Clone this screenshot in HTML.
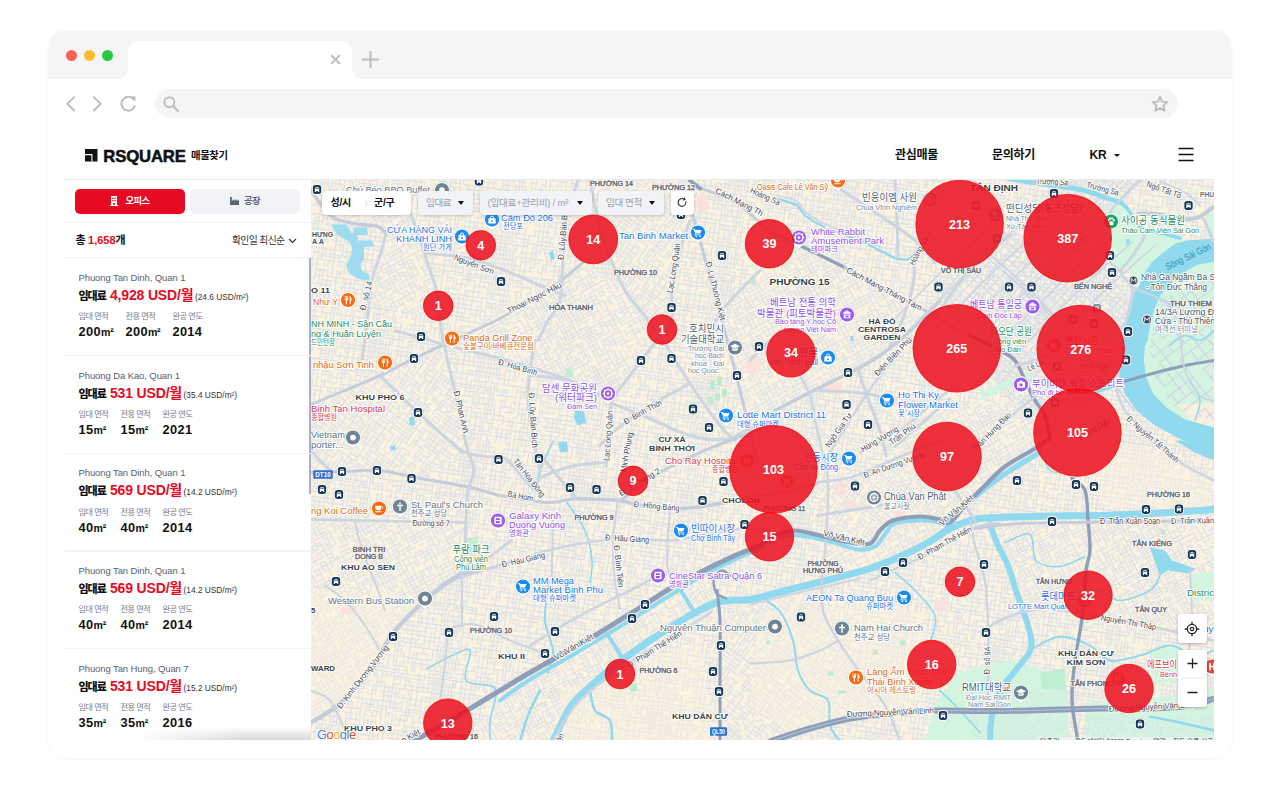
<!DOCTYPE html>
<html lang="ko">
<head>
<meta charset="utf-8">
<title>RSQUARE 매물찾기</title>
<style>
*{box-sizing:border-box;margin:0;padding:0}
html,body{width:1280px;height:791px;background:#fff;overflow:hidden}
body{font-family:"Liberation Sans","Noto Sans CJK KR",sans-serif;color:#111;position:relative}
.abs{position:absolute}
/* browser frame */
#frame{position:absolute;left:48px;top:31px;width:1184px;height:728px;border-radius:17px;background:#fff;box-shadow:0 0 0 1px rgba(0,0,0,.012),0 1px 6px rgba(0,0,0,.022);overflow:hidden}
#tabbar{position:absolute;left:0;top:0;width:1184px;height:48px;background:#f5f5f5}
#tab{position:absolute;left:80px;top:9.5px;width:224px;height:39.5px;background:#fff;border-radius:9px 9px 0 0}
#tab:before,#tab:after{content:"";position:absolute;bottom:1px;width:9px;height:9px;background:radial-gradient(circle at 0 0,rgba(255,255,255,0) 8.6px,#fff 9.2px)}
#tab:before{left:-9px}
#tab:after{right:-9px;transform:scaleX(-1)}
.dot{position:absolute;top:18.5px;width:11.4px;height:11.4px;border-radius:50%}
#search{position:absolute;left:107px;top:58px;width:1023px;height:29px;border-radius:15px;background:#f5f5f5}
/* site header */
#site{position:absolute;left:65px;top:130px;width:1149px;height:610px;background:#fff;overflow:hidden}
#hdr{position:absolute;left:0;top:0;width:1149px;height:49.5px;border-bottom:1px solid #e7e9ee}
#brand{position:absolute;left:38.300px;top:18.600px;font-weight:700;font-size:16.700px;letter-spacing:-.15px;line-height:15px;color:#111;-webkit-text-stroke:.55px #111}
#sub{position:absolute;left:126px;top:19.5px;font-weight:700;font-size:10.4px;letter-spacing:-.4px;line-height:12px;color:#111;white-space:nowrap}
.nav{position:absolute;top:17.5px;font-weight:700;font-size:12px;letter-spacing:-.25px;line-height:15px;color:#111;white-space:nowrap}
/* sidebar */
#side{position:absolute;left:0;top:50px;width:246px;height:560px;background:#fff}
.btn{position:absolute;top:9.2px;height:24.6px;width:109.4px;border-radius:5px;font-size:9.4px;font-weight:700;letter-spacing:-.55px;line-height:24.6px;text-align:center;white-space:nowrap}
.hr{position:absolute;left:0;width:246px;height:1.4px;background:#f2f3f5}
.item{position:absolute;left:13.5px;width:232px;height:98px}
.item .addr{position:absolute;left:0;top:0;font-size:9.5px;color:#5a6070;line-height:12px;white-space:nowrap;letter-spacing:-.1px}
.item .price{position:absolute;left:0;top:13px;white-space:nowrap;line-height:20px;font-weight:700}
.item .price b{font-size:11px;letter-spacing:-1px;color:#111}
.item .price em{font-style:normal;font-size:14px;color:#e60a23;letter-spacing:-.15px;margin-left:4px}
.item .price i{font-style:normal;font-weight:400;font-size:8.3px;color:#333;margin-left:1.5px;letter-spacing:0}
.item .cols{position:absolute;left:0;top:40.2px;display:flex;gap:12px}
.item .cols div{white-space:nowrap}
.item .cols span{display:block;font-size:8.2px;color:#777d8a;line-height:10px;letter-spacing:-.5px;min-width:30px}
.item .cols strong{display:block;font-size:12.8px;font-weight:700;line-height:16px;margin-top:2px;color:#111;letter-spacing:.35px}
.item .cols strong small{font-size:10.6px;letter-spacing:-.2px}
/* map */
#map{position:absolute;left:246px;top:49.5px;width:903px;height:560.5px;background:#f6eedd;overflow:hidden}
#map svg{position:absolute;left:0;top:0}
.fbox{position:absolute;top:11.5px;height:23.5px;border-radius:4px;font-size:9.6px;line-height:23.5px;white-space:nowrap;box-shadow:0 1px 3px rgba(0,0,0,.18)}
.fgray{background:#f1f3f7;color:#9aa0ac;letter-spacing:-.4px}
.caret{position:absolute;width:0;height:0;border-left:3.6px solid transparent;border-right:3.6px solid transparent;border-top:4.2px solid #111;top:10px}
.ctl{position:absolute;left:866.5px;width:29px;background:#fff;border-radius:3px;box-shadow:0 1px 3px rgba(0,0,0,.25)}
</style>
</head>
<body>
<div id="frame">
  <div id="tabbar">
    <div class="dot" style="left:18px;background:#fe5f57"></div>
    <div class="dot" style="left:36px;background:#febc2e"></div>
    <div class="dot" style="left:54px;background:#28c840"></div>
    <div id="tab"></div>
    <svg class="abs" style="left:282px;top:23px" width="11" height="11" viewBox="0 0 11 11"><path d="M1.600 1.600 9.400 9.400M9.400 1.600 1.600 9.400" stroke="#bdbdbd" stroke-width="2" stroke-linecap="round" fill="none"/></svg>
    <svg class="abs" style="left:314.400px;top:20px" width="17" height="17" viewBox="0 0 17 17"><path d="M8.500 1v15.200M.8 8.500h15.400" stroke="#bdbdbd" stroke-width="2" stroke-linecap="round" fill="none"/></svg>
  </div>
  <!-- nav icons -->
  <svg class="abs" style="left:14px;top:60px" width="100" height="26" viewBox="0 0 100 26">
    <path d="M12.6 5.6 5.4 12.8 12.6 20" fill="none" stroke="#bdbdbd" stroke-width="2"/>
    <path d="M31.4 5.6 38.6 12.8 31.4 20" fill="none" stroke="#bdbdbd" stroke-width="2"/>
    <path d="M72.3 9.2A6.9 6.9 0 1 0 73 14.6" fill="none" stroke="#bdbdbd" stroke-width="2"/>
    <path d="M68.2 5.2 73.6 5.4 73.4 10.8z" fill="#bdbdbd"/>
  </svg>
  <div id="search">
    <svg class="abs" style="left:7px;top:6px" width="18" height="18" viewBox="0 0 18 18"><circle cx="7.4" cy="7.2" r="5" fill="none" stroke="#bdbdbd" stroke-width="1.9"/><path d="M11 11 16 16" stroke="#bdbdbd" stroke-width="2.1" stroke-linecap="round"/></svg>
    <svg class="abs" style="left:996px;top:6px" width="18" height="18" viewBox="0 0 18 18"><path d="M9 1.8 11.1 6.6 16.3 7.1 12.4 10.5 13.6 15.7 9 13 4.4 15.7 5.6 10.5 1.7 7.1 6.9 6.6z" fill="none" stroke="#bdbdbd" stroke-width="1.900" stroke-linejoin="round"/></svg>
  </div>
</div>

<div id="site">
  <div id="hdr">
    <svg class="abs" style="left:20px;top:19px" width="12.500" height="12.500" viewBox="0 0 12.500 12.500"><path d="M0 0h12.500v12.500H0z" fill="#111"/><path d="M0 5.600h6.900v6.900" stroke="#fff" stroke-width="1.100" fill="none"/></svg>
    <div id="brand">RSQUARE</div>
    <div id="sub">매물찾기</div>
    <div class="nav" style="left:830px">관심매물</div>
    <div class="nav" style="left:927px">문의하기</div>
    <div class="nav" style="left:1024.5px;letter-spacing:-.2px">KR</div>
    <div class="abs" style="left:1048.5px;top:23.5px;width:0;height:0;border-left:3.2px solid transparent;border-right:3.2px solid transparent;border-top:3.8px solid #111"></div>
    <svg class="abs" style="left:1113px;top:17px" width="16" height="15" viewBox="0 0 16 15"><path d="M.5 1.5h15M.5 7.5h15M.5 13.5h15" stroke="#111" stroke-width="1.5"/></svg>
  </div>

  <div id="side">
    <div class="btn" style="left:10.300px;background:#e60a23;color:#fff">
      <svg style="vertical-align:-2px;margin-right:7px" width="8" height="10" viewBox="0 0 8 10"><path d="M1 0h6v9h1v1H0V9h1z" fill="#fff"/><path d="M2.2 1.6h1.3v1.3H2.2zM4.5 1.6h1.3v1.3H4.5zM2.2 4h1.3v1.3H2.2zM4.5 4h1.3v1.3H4.5zM3.2 7h1.6v2H3.2z" fill="#e60a23"/></svg>오피스</div>
    <div class="btn" style="left:125.400px;background:#f1f3f6;color:#5b6579">
      <svg style="vertical-align:-1px;margin-right:5px" width="9" height="8" viewBox="0 0 9 8"><path d="M0 0h1.8v4L4.4 2v2L7 2v2l2-1.6V8H0z" fill="#5b6579"/></svg>공장</div>
    <div class="hr" style="top:42px"></div>
    <div class="abs" style="left:10.5px;top:53px;font-size:11px;font-weight:700;line-height:14px;letter-spacing:-.3px;white-space:nowrap">총 <span style="color:#e60a23;letter-spacing:0">1,658</span>개</div>
    <div class="abs" style="right:26.5px;top:53.5px;font-size:9.8px;line-height:14px;letter-spacing:-.6px;color:#333;white-space:nowrap">확인일 최신순</div>
    <svg class="abs" style="left:222.5px;top:57.5px" width="9" height="6" viewBox="0 0 9 6"><path d="M1 1 4.5 4.5 8 1" fill="none" stroke="#333" stroke-width="1.1"/></svg>
    <div class="hr" style="top:77px"></div>
    <div class="abs" style="left:244px;top:78px;width:2px;height:235.500px;background:#a9afc5"></div>

    <div class="item" style="top:92px">
      <div class="addr">Phuong Tan Dinh, Quan 1</div>
      <div class="price"><b>임대료</b><em>4,928 USD/월</em><i>(24.6 USD/m²)</i></div>
      <div class="cols"><div><span>임대 면적</span><strong>200<small>m²</small></strong></div><div><span>전용 면적</span><strong>200<small>m²</small></strong></div><div><span>완공 연도</span><strong>2014</strong></div></div>
    </div>
    <div class="hr" style="top:175px"></div>
    <div class="item" style="top:189.7px">
      <div class="addr">Phuong Da Kao, Quan 1</div>
      <div class="price"><b>임대료</b><em>531 USD/월</em><i>(35.4 USD/m²)</i></div>
      <div class="cols"><div><span>임대 면적</span><strong>15<small>m²</small></strong></div><div><span>전용 면적</span><strong>15<small>m²</small></strong></div><div><span>완공 연도</span><strong>2021</strong></div></div>
    </div>
    <div class="hr" style="top:272.7px"></div>
    <div class="item" style="top:287.4px">
      <div class="addr">Phuong Tan Dinh, Quan 1</div>
      <div class="price"><b>임대료</b><em>569 USD/월</em><i>(14.2 USD/m²)</i></div>
      <div class="cols"><div><span>임대 면적</span><strong>40<small>m²</small></strong></div><div><span>전용 면적</span><strong>40<small>m²</small></strong></div><div><span>완공 연도</span><strong>2014</strong></div></div>
    </div>
    <div class="hr" style="top:370.4px"></div>
    <div class="item" style="top:385.1px">
      <div class="addr">Phuong Tan Dinh, Quan 1</div>
      <div class="price"><b>임대료</b><em>569 USD/월</em><i>(14.2 USD/m²)</i></div>
      <div class="cols"><div><span>임대 면적</span><strong>40<small>m²</small></strong></div><div><span>전용 면적</span><strong>40<small>m²</small></strong></div><div><span>완공 연도</span><strong>2014</strong></div></div>
    </div>
    <div class="hr" style="top:468.1px"></div>
    <div class="item" style="top:482.8px">
      <div class="addr">Phuong Tan Hung, Quan 7</div>
      <div class="price"><b>임대료</b><em>531 USD/월</em><i>(15.2 USD/m²)</i></div>
      <div class="cols"><div><span>임대 면적</span><strong>35<small>m²</small></strong></div><div><span>전용 면적</span><strong>35<small>m²</small></strong></div><div><span>완공 연도</span><strong>2016</strong></div></div>
    </div>
  </div>

  <div class="abs" style="left:70px;top:597px;width:176px;height:13px;background:linear-gradient(to right,#fff 0%,rgba(255,255,255,0) 60%),linear-gradient(to bottom,rgba(0,0,0,0),rgba(0,0,0,.15))"></div>
  <div id="map">
    <svg width="903" height="560.5" viewBox="311 179.5 903 560.5" font-family="Liberation Sans, Noto Sans CJK KR, sans-serif">
<defs>
<pattern id="g1" width="110" height="110" patternUnits="userSpaceOnUse" patternTransform="rotate(8)"><path d="M2.4 2.3H16.1M20.3 2.3H32.1M41.6 2.3H56.2M60.9 2.3H79.4M83.9 2.3H103.5M0 7.5H2.4M6.7 7.5H16.1M20.3 7.5H27.9M32.1 7.5H41.6M44.6 7.5H83.9M87.0 7.5H94.0M96.9 7.5H103.5M0 11.7H6.7M16.1 11.7H20.3M27.9 11.7H44.6M48.2 11.7H60.9M63.7 11.7H79.4M83.9 11.7H94.0M96.9 11.7H103.5M106.3 11.7H110M0 16.2H36.6M44.6 16.2H69.3M74.8 16.2H79.4M83.9 16.2H94.0M96.9 16.2H100.1M103.5 16.2H110M12.1 20.4H16.1M24.7 20.4H32.1M41.6 20.4H44.6M51.1 20.4H83.9M94.0 20.4H96.9M100.1 20.4H106.3M0 25.0H2.4M6.7 25.0H36.6M41.6 25.0H63.7M69.3 25.0H79.4M83.9 25.0H96.9M106.3 25.0H110M0 29.0H16.1M24.7 29.0H27.9M32.1 29.0H69.3M79.4 29.0H89.8M94.0 29.0H106.3M0 32.5H16.1M20.3 32.5H48.2M56.2 32.5H106.3M0 38.1H2.4M12.1 38.1H16.1M24.7 38.1H36.6M41.6 38.1H48.2M60.9 38.1H74.8M83.9 38.1H94.0M103.5 38.1H106.3M0 43.7H2.4M12.1 43.7H27.9M32.1 43.7H41.6M44.6 43.7H48.2M51.1 43.7H60.9M63.7 43.7H79.4M87.0 43.7H89.8M94.0 43.7H96.9M100.1 43.7H110M0 48.8H2.4M6.7 48.8H16.1M20.3 48.8H32.1M41.6 48.8H44.6M51.1 48.8H83.9M87.0 48.8H94.0M96.9 48.8H110M0 53.6H6.7M16.1 53.6H32.1M41.6 53.6H56.2M60.9 53.6H63.7M69.3 53.6H100.1M103.5 53.6H110M0 57.2H48.2M51.1 57.2H56.2M60.9 57.2H63.7M79.4 57.2H87.0M89.8 57.2H94.0M100.1 57.2H106.3M0 60.6H6.7M12.1 60.6H16.1M20.3 60.6H44.6M51.1 60.6H60.9M63.7 60.6H110M12.1 64.1H20.3M24.7 64.1H27.9M32.1 64.1H60.9M63.7 64.1H74.8M79.4 64.1H96.9M103.5 64.1H106.3M0 67.0H16.1M24.7 67.0H27.9M44.6 67.0H48.2M56.2 67.0H60.9M69.3 67.0H74.8M79.4 67.0H106.3M0 71.9H24.7M27.9 71.9H36.6M44.6 71.9H51.1M56.2 71.9H87.0M89.8 71.9H96.9M100.1 71.9H103.5M106.3 71.9H110M2.4 75.8H12.1M16.1 75.8H20.3M24.7 75.8H48.2M51.1 75.8H106.3M0 81.0H2.4M12.1 81.0H16.1M24.7 81.0H27.9M32.1 81.0H41.6M44.6 81.0H51.1M60.9 81.0H63.7M74.8 81.0H110M0 84.8H16.1M20.3 84.8H24.7M36.6 84.8H44.6M51.1 84.8H83.9M87.0 84.8H94.0M103.5 84.8H110M0 90.3H56.2M63.7 90.3H74.8M79.4 90.3H83.9M87.0 90.3H96.9M100.1 90.3H106.3M0 95.4H6.7M16.1 95.4H27.9M32.1 95.4H56.2M60.9 95.4H83.9M87.0 95.4H100.1M103.5 95.4H110M0 98.1H6.7M20.3 98.1H24.7M27.9 98.1H41.6M48.2 98.1H83.9M87.0 98.1H89.8M94.0 98.1H100.1M106.3 98.1H110M0 101.4H16.1M20.3 101.4H24.7M27.9 101.4H36.6M41.6 101.4H48.2M56.2 101.4H69.3M74.8 101.4H87.0M89.8 101.4H94.0M96.9 101.4H103.5M106.3 101.4H110M0 106.8H6.7M12.1 106.8H16.1M20.3 106.8H24.7M27.9 106.8H32.1M51.1 106.8H63.7M69.3 106.8H83.9M89.8 106.8H106.3M2.4 0V16.2M2.4 20.4V38.1M2.4 43.7V90.3M2.4 95.4V101.4M2.4 106.8V110M6.7 0V2.3M6.7 11.7V20.4M6.7 25.0V38.1M6.7 48.8V64.1M6.7 67.0V90.3M6.7 95.4V110M12.1 0V7.5M12.1 11.7V20.4M12.1 25.0V38.1M12.1 43.7V48.8M12.1 60.6V84.8M12.1 90.3V95.4M12.1 98.1V101.4M12.1 106.8V110M16.1 2.3V7.5M16.1 11.7V29.0M16.1 32.5V81.0M16.1 90.3V110M20.3 0V11.7M20.3 20.4V67.0M20.3 71.9V75.8M20.3 81.0V84.8M20.3 90.3V95.4M20.3 98.1V110M24.7 0V16.2M24.7 20.4V53.6M24.7 57.2V67.0M24.7 75.8V101.4M27.9 0V38.1M27.9 48.8V57.2M27.9 64.1V84.8M27.9 90.3V98.1M27.9 101.4V106.8M32.1 0V29.0M32.1 32.5V48.8M32.1 53.6V57.2M32.1 60.6V75.8M32.1 90.3V98.1M32.1 101.4V106.8M36.6 0V7.5M36.6 11.7V32.5M36.6 43.7V57.2M36.6 60.6V67.0M36.6 71.9V110M41.6 0V25.0M41.6 29.0V53.6M41.6 60.6V64.1M41.6 75.8V90.3M41.6 95.4V106.8M44.6 0V7.5M44.6 20.4V25.0M44.6 29.0V95.4M44.6 101.4V106.8M48.2 0V2.3M48.2 7.5V11.7M48.2 16.2V20.4M48.2 25.0V29.0M48.2 32.5V43.7M48.2 48.8V67.0M48.2 75.8V98.1M48.2 101.4V110M51.1 7.5V20.4M51.1 29.0V32.5M51.1 38.1V53.6M51.1 60.6V71.9M51.1 75.8V84.8M51.1 90.3V95.4M51.1 101.4V110M56.2 0V2.3M56.2 7.5V48.8M56.2 53.6V60.6M56.2 64.1V75.8M56.2 81.0V98.1M56.2 101.4V110M60.9 0V20.4M60.9 25.0V32.5M60.9 38.1V57.2M60.9 64.1V71.9M60.9 75.8V81.0M60.9 84.8V110M63.7 2.3V11.7M63.7 16.2V25.0M63.7 29.0V32.5M63.7 38.1V57.2M63.7 67.0V106.8M69.3 0V29.0M69.3 32.5V38.1M69.3 43.7V53.6M69.3 57.2V98.1M69.3 101.4V110M74.8 0V7.5M74.8 16.2V32.5M74.8 38.1V48.8M74.8 57.2V64.1M74.8 67.0V75.8M74.8 81.0V106.8M79.4 7.5V29.0M79.4 32.5V43.7M79.4 48.8V75.8M79.4 81.0V84.8M79.4 90.3V98.1M79.4 101.4V106.8M83.9 0V43.7M83.9 48.8V53.6M83.9 57.2V98.1M83.9 101.4V110M87.0 0V7.5M87.0 11.7V16.2M87.0 29.0V48.8M87.0 53.6V57.2M87.0 60.6V110M89.8 0V7.5M89.8 11.7V43.7M89.8 48.8V81.0M89.8 90.3V98.1M89.8 101.4V110M94.0 0V2.3M94.0 11.7V110M96.9 0V60.6M96.9 64.1V90.3M96.9 95.4V101.4M100.1 0V20.4M100.1 29.0V32.5M100.1 38.1V60.6M100.1 64.1V110M103.5 0V11.7M103.5 20.4V29.0M103.5 32.5V53.6M103.5 60.6V84.8M103.5 90.3V110M106.3 0V32.5M106.3 38.1V48.8M106.3 57.2V67.0M106.3 71.9V98.1" stroke="#d6deea" stroke-width="1.0" fill="none"/></pattern>
<pattern id="g2" width="100" height="100" patternUnits="userSpaceOnUse" patternTransform="rotate(-28)"><path d="M0 2.1H3.8M9.2 2.1H21.9M25.8 2.1H30.0M33.1 2.1H40.4M43.7 2.1H47.7M50.5 2.1H53.4M58.2 2.1H71.1M74.9 2.1H77.7M91.7 2.1H96.2M3.8 7.0H9.2M14.5 7.0H33.1M40.4 7.0H58.2M62.1 7.0H71.1M74.9 7.0H82.7M96.2 7.0H100M0 10.8H9.2M14.5 10.8H30.0M33.1 10.8H40.4M43.7 10.8H58.2M62.1 10.8H66.3M71.1 10.8H100M0 15.1H14.5M17.5 15.1H21.9M25.8 15.1H74.9M77.7 15.1H82.7M91.7 15.1H96.2M0 19.7H25.8M30.0 19.7H40.4M43.7 19.7H71.1M74.9 19.7H100M3.8 23.3H9.2M14.5 23.3H17.5M21.9 23.3H30.0M33.1 23.3H43.7M47.7 23.3H50.5M53.4 23.3H71.1M74.9 23.3H82.7M91.7 23.3H100M0 26.3H9.2M14.5 26.3H25.8M33.1 26.3H50.5M53.4 26.3H74.9M77.7 26.3H91.7M0 30.4H3.8M17.5 30.4H25.8M33.1 30.4H40.4M47.7 30.4H71.1M74.9 30.4H100M0 35.2H3.8M9.2 35.2H14.5M17.5 35.2H33.1M40.4 35.2H50.5M53.4 35.2H74.9M82.7 35.2H100M0 39.6H47.7M50.5 39.6H66.3M71.1 39.6H87.1M91.7 39.6H96.2M0 43.6H3.8M9.2 43.6H14.5M17.5 43.6H25.8M30.0 43.6H36.4M43.7 43.6H47.7M50.5 43.6H58.2M62.1 43.6H66.3M71.1 43.6H87.1M91.7 43.6H96.2M0 48.1H3.8M14.5 48.1H17.5M21.9 48.1H40.4M43.7 48.1H47.7M53.4 48.1H62.1M66.3 48.1H74.9M77.7 48.1H91.7M96.2 48.1H100M3.8 51.4H21.9M25.8 51.4H30.0M36.4 51.4H47.7M50.5 51.4H62.1M66.3 51.4H77.7M91.7 51.4H100M3.8 54.6H9.2M17.5 54.6H36.4M43.7 54.6H53.4M58.2 54.6H82.7M96.2 54.6H100M0 58.2H9.2M14.5 58.2H21.9M25.8 58.2H30.0M33.1 58.2H36.4M40.4 58.2H53.4M58.2 58.2H71.1M74.9 58.2H77.7M87.1 58.2H91.7M0 63.3H9.2M17.5 63.3H21.9M30.0 63.3H33.1M36.4 63.3H50.5M53.4 63.3H66.3M71.1 63.3H74.9M77.7 63.3H100M0 66.5H21.9M30.0 66.5H33.1M36.4 66.5H50.5M53.4 66.5H58.2M62.1 66.5H82.7M91.7 66.5H96.2M3.8 69.6H9.2M21.9 69.6H33.1M36.4 69.6H47.7M50.5 69.6H71.1M74.9 69.6H96.2M0 72.6H3.8M9.2 72.6H14.5M30.0 72.6H36.4M53.4 72.6H71.1M82.7 72.6H91.7M96.2 72.6H100M0 75.4H9.2M14.5 75.4H21.9M25.8 75.4H30.0M36.4 75.4H53.4M58.2 75.4H77.7M87.1 75.4H91.7M96.2 75.4H100M0 78.9H30.0M33.1 78.9H43.7M47.7 78.9H53.4M58.2 78.9H82.7M87.1 78.9H91.7M96.2 78.9H100M0 83.2H25.8M30.0 83.2H40.4M43.7 83.2H66.3M71.1 83.2H91.7M0 88.3H9.2M21.9 88.3H30.0M36.4 88.3H43.7M47.7 88.3H53.4M58.2 88.3H66.3M71.1 88.3H74.9M77.7 88.3H91.7M96.2 88.3H100M0 92.0H43.7M50.5 92.0H53.4M58.2 92.0H62.1M66.3 92.0H71.1M77.7 92.0H91.7M0 95.7H3.8M21.9 95.7H25.8M30.0 95.7H53.4M58.2 95.7H74.9M87.1 95.7H100M3.8 0V7.0M3.8 15.1V19.7M3.8 30.4V39.6M3.8 43.6V54.6M3.8 58.2V72.6M3.8 78.9V100M9.2 0V23.3M9.2 26.3V48.1M9.2 51.4V83.2M9.2 88.3V95.7M14.5 0V19.7M14.5 23.3V43.6M14.5 51.4V54.6M14.5 58.2V63.3M14.5 66.5V75.4M14.5 78.9V100M17.5 0V2.1M17.5 7.0V30.4M17.5 48.1V75.4M17.5 78.9V95.7M21.9 0V2.1M21.9 10.8V19.7M21.9 23.3V30.4M21.9 35.2V43.6M21.9 54.6V66.5M21.9 69.6V72.6M21.9 78.9V100M25.8 2.1V7.0M25.8 15.1V63.3M25.8 66.5V100M30.0 0V43.6M30.0 48.1V58.2M30.0 63.3V69.6M30.0 72.6V75.4M30.0 83.2V92.0M30.0 95.7V100M33.1 2.1V7.0M33.1 10.8V19.7M33.1 23.3V35.2M33.1 39.6V95.7M36.4 2.1V43.6M36.4 51.4V54.6M36.4 58.2V63.3M36.4 66.5V69.6M36.4 72.6V75.4M36.4 78.9V92.0M40.4 0V30.4M40.4 35.2V39.6M40.4 43.6V66.5M40.4 69.6V78.9M40.4 83.2V92.0M40.4 95.7V100M43.7 0V2.1M43.7 7.0V10.8M43.7 26.3V48.1M43.7 51.4V66.5M43.7 69.6V75.4M43.7 83.2V100M47.7 0V7.0M47.7 10.8V23.3M47.7 26.3V30.4M47.7 35.2V48.1M47.7 58.2V69.6M47.7 72.6V78.9M47.7 83.2V92.0M47.7 95.7V100M50.5 0V51.4M50.5 54.6V58.2M50.5 63.3V66.5M50.5 75.4V95.7M53.4 2.1V35.2M53.4 39.6V69.6M53.4 75.4V78.9M53.4 88.3V95.7M58.2 0V48.1M58.2 51.4V66.5M58.2 72.6V100M62.1 0V2.1M62.1 7.0V15.1M62.1 19.7V26.3M62.1 30.4V58.2M62.1 63.3V100M66.3 0V15.1M66.3 19.7V54.6M66.3 58.2V72.6M66.3 75.4V95.7M71.1 0V19.7M71.1 23.3V26.3M71.1 35.2V39.6M71.1 43.6V48.1M71.1 51.4V54.6M71.1 69.6V78.9M71.1 83.2V100M74.9 2.1V15.1M74.9 19.7V26.3M74.9 30.4V35.2M74.9 39.6V63.3M74.9 75.4V78.9M74.9 83.2V100M77.7 0V7.0M77.7 10.8V15.1M77.7 19.7V23.3M77.7 30.4V51.4M77.7 54.6V58.2M77.7 63.3V75.4M77.7 83.2V92.0M77.7 95.7V100M82.7 0V30.4M82.7 35.2V48.1M82.7 51.4V63.3M82.7 66.5V78.9M82.7 83.2V95.7M87.1 2.1V10.8M87.1 19.7V58.2M87.1 66.5V83.2M87.1 92.0V100M91.7 0V7.0M91.7 10.8V23.3M91.7 26.3V30.4M91.7 35.2V43.6M91.7 48.1V100M96.2 0V2.1M96.2 7.0V10.8M96.2 15.1V19.7M96.2 23.3V26.3M96.2 35.2V43.6M96.2 48.1V54.6M96.2 63.3V78.9M96.2 83.2V92.0" stroke="#d6deea" stroke-width="1.0" fill="none"/></pattern>
<pattern id="g3" width="110" height="110" patternUnits="userSpaceOnUse" patternTransform="rotate(42)"><path d="M0 3.7H2.9M16.5 3.7H110M0 10.5H2.9M9.6 10.5H74.1M80.0 10.5H91.4M102.1 10.5H110M0 15.5H42.4M48.3 15.5H69.3M74.1 15.5H80.0M85.2 15.5H110M0 22.4H9.6M16.5 22.4H30.5M37.8 22.4H85.2M91.4 22.4H110M0 27.3H2.9M9.6 27.3H62.1M69.3 27.3H74.1M80.0 27.3H110M0 33.7H9.6M23.8 33.7H110M0 38.6H30.5M37.8 38.6H110M0 43.1H30.5M42.4 43.1H69.3M74.1 43.1H110M0 50.2H110M0 55.3H48.3M55.6 55.3H110M0 60.5H16.5M23.8 60.5H74.1M85.2 60.5H97.6M102.1 60.5H110M0 67.9H23.8M30.5 67.9H55.6M62.1 67.9H69.3M80.0 67.9H91.4M97.6 67.9H110M2.9 75.0H80.0M85.2 75.0H107.3M0 80.4H110M0 87.8H2.9M16.5 87.8H69.3M74.1 87.8H110M0 93.9H30.5M37.8 93.9H110M0 100.4H9.6M23.8 100.4H55.6M62.1 100.4H80.0M85.2 100.4H110M0 105.5H80.0M85.2 105.5H110M2.9 0V3.7M2.9 10.5V110M9.6 0V60.5M9.6 67.9V87.8M9.6 93.9V110M16.5 0V110M23.8 0V15.5M23.8 22.4V43.1M23.8 50.2V100.4M23.8 105.5V110M30.5 0V38.6M30.5 43.1V50.2M30.5 55.3V75.0M30.5 80.4V110M37.8 0V33.7M37.8 38.6V93.9M37.8 100.4V110M42.4 3.7V38.6M42.4 43.1V67.9M42.4 75.0V80.4M42.4 87.8V110M48.3 0V33.7M48.3 38.6V87.8M48.3 93.9V110M55.6 0V38.6M55.6 43.1V110M62.1 0V100.4M62.1 105.5V110M69.3 0V27.3M69.3 33.7V110M74.1 0V33.7M74.1 38.6V110M80.0 0V10.5M80.0 15.5V33.7M80.0 38.6V60.5M80.0 67.9V75.0M80.0 80.4V110M85.2 3.7V22.4M85.2 27.3V87.8M85.2 93.9V110M91.4 0V43.1M91.4 50.2V110M97.6 0V55.3M97.6 60.5V67.9M97.6 75.0V110M102.1 0V55.3M102.1 60.5V93.9M102.1 105.5V110M107.3 0V27.3M107.3 33.7V38.6M107.3 43.1V80.4M107.3 93.9V110" stroke="#d3dbe8" stroke-width="1.1" fill="none"/></pattern>
<pattern id="g4" width="120" height="120" patternUnits="userSpaceOnUse" patternTransform="rotate(-38)"><path d="M0 2.4H61.5M69.9 2.4H80.1M98.7 2.4H120M0 13.3H20.4M31.9 13.3H69.9M80.1 13.3H120M0 21.9H20.4M31.9 21.9H98.7M108.2 21.9H120M0 30.8H31.9M49.9 30.8H69.9M80.1 30.8H120M0 39.3H39.9M49.9 39.3H80.1M90.5 39.3H120M0 49.3H98.7M108.2 49.3H120M0 61.0H39.9M49.9 61.0H69.9M80.1 61.0H108.2M0 71.4H11.9M20.4 71.4H31.9M49.9 71.4H108.2M0 82.5H108.2M0 92.0H20.4M31.9 92.0H120M0 103.0H61.5M69.9 103.0H80.1M90.5 103.0H98.7M0 111.4H20.4M31.9 111.4H120M2.4 0V39.3M2.4 49.3V61.0M2.4 71.4V92.0M2.4 103.0V120M11.9 0V120M20.4 0V21.9M20.4 30.8V39.3M20.4 71.4V120M31.9 0V21.9M31.9 39.3V120M39.9 0V21.9M39.9 30.8V82.5M39.9 92.0V120M49.9 0V13.3M49.9 30.8V39.3M49.9 92.0V120M61.5 0V21.9M61.5 30.8V120M69.9 0V111.4M80.1 0V61.0M80.1 71.4V82.5M80.1 92.0V120M90.5 0V30.8M90.5 39.3V82.5M90.5 103.0V120M98.7 2.4V92.0M98.7 103.0V120M108.2 0V21.9M108.2 30.8V39.3M108.2 49.3V120" stroke="#d0cce6" stroke-width="1.0" fill="none"/></pattern>
<pattern id="g5" width="100" height="100" patternUnits="userSpaceOnUse" patternTransform="rotate(35)"><path d="M12.6 2.8H39.6M42.7 2.8H60.4M63.4 2.8H66.1M71.6 2.8H78.7M82.4 2.8H86.1M91.6 2.8H100M0 7.0H1.0M4.1 7.0H18.7M22.1 7.0H30.1M35.0 7.0H63.4M66.1 7.0H71.6M78.7 7.0H82.4M91.6 7.0H100M0 12.5H15.7M18.7 12.5H35.0M39.6 12.5H60.4M63.4 12.5H94.9M4.1 17.6H15.7M18.7 17.6H54.8M66.1 17.6H75.4M78.7 17.6H86.1M91.6 17.6H100M1.0 21.4H22.1M27.0 21.4H46.9M50.9 21.4H86.1M91.6 21.4H94.9M0 24.7H4.1M7.9 24.7H15.7M18.7 24.7H46.9M50.9 24.7H60.4M63.4 24.7H86.1M91.6 24.7H100M0 29.8H1.0M4.1 29.8H12.6M18.7 29.8H30.1M35.0 29.8H71.6M75.4 29.8H91.6M1.0 35.4H12.6M15.7 35.4H22.1M27.0 35.4H39.6M42.7 35.4H46.9M50.9 35.4H54.8M60.4 35.4H66.1M86.1 35.4H94.9M0 38.1H7.9M15.7 38.1H30.1M35.0 38.1H71.6M75.4 38.1H78.7M82.4 38.1H86.1M91.6 38.1H94.9M0 43.0H7.9M12.6 43.0H42.7M46.9 43.0H50.9M54.8 43.0H66.1M75.4 43.0H82.4M86.1 43.0H94.9M0 48.2H4.1M12.6 48.2H27.0M30.1 48.2H39.6M46.9 48.2H66.1M71.6 48.2H78.7M86.1 48.2H100M0 52.8H4.1M7.9 52.8H15.7M18.7 52.8H27.0M35.0 52.8H39.6M42.7 52.8H60.4M66.1 52.8H94.9M0 56.1H22.1M30.1 56.1H35.0M39.6 56.1H46.9M50.9 56.1H54.8M60.4 56.1H71.6M75.4 56.1H91.6M94.9 56.1H100M0 61.1H12.6M15.7 61.1H50.9M60.4 61.1H78.7M82.4 61.1H94.9M1.0 65.9H18.7M22.1 65.9H30.1M35.0 65.9H46.9M54.8 65.9H60.4M63.4 65.9H86.1M91.6 65.9H100M0 69.2H7.9M12.6 69.2H22.1M27.0 69.2H42.7M46.9 69.2H54.8M63.4 69.2H71.6M75.4 69.2H82.4M86.1 69.2H100M0 73.8H18.7M22.1 73.8H27.0M30.1 73.8H66.1M71.6 73.8H78.7M91.6 73.8H100M0 77.1H1.0M4.1 77.1H7.9M12.6 77.1H30.1M39.6 77.1H42.7M50.9 77.1H66.1M71.6 77.1H78.7M82.4 77.1H100M0 79.9H4.1M7.9 79.9H35.0M42.7 79.9H50.9M54.8 79.9H71.6M75.4 79.9H78.7M82.4 79.9H94.9M0 83.6H35.0M46.9 83.6H54.8M60.4 83.6H71.6M75.4 83.6H78.7M82.4 83.6H86.1M91.6 83.6H100M0 87.3H1.0M4.1 87.3H22.1M27.0 87.3H30.1M35.0 87.3H39.6M46.9 87.3H86.1M94.9 87.3H100M4.1 91.1H22.1M27.0 91.1H39.6M42.7 91.1H50.9M54.8 91.1H60.4M63.4 91.1H78.7M82.4 91.1H86.1M94.9 91.1H100M0 95.7H1.0M4.1 95.7H30.1M35.0 95.7H39.6M42.7 95.7H46.9M50.9 95.7H71.6M75.4 95.7H82.4M86.1 95.7H91.6M94.9 95.7H100M1.0 0V17.6M1.0 21.4V35.4M1.0 43.0V73.8M1.0 79.9V83.6M1.0 91.1V95.7M4.1 2.8V21.4M4.1 24.7V35.4M4.1 38.1V48.2M4.1 52.8V56.1M4.1 65.9V91.1M4.1 95.7V100M7.9 2.8V21.4M7.9 29.8V38.1M7.9 43.0V73.8M7.9 79.9V100M12.6 0V2.8M12.6 7.0V21.4M12.6 24.7V43.0M12.6 52.8V56.1M12.6 65.9V69.2M12.6 73.8V77.1M12.6 87.3V100M15.7 0V12.5M15.7 17.6V21.4M15.7 29.8V52.8M15.7 56.1V65.9M15.7 73.8V87.3M15.7 91.1V95.7M18.7 0V35.4M18.7 38.1V43.0M18.7 48.2V52.8M18.7 56.1V65.9M18.7 69.2V73.8M18.7 77.1V79.9M18.7 83.6V95.7M22.1 7.0V17.6M22.1 21.4V24.7M22.1 29.8V35.4M22.1 38.1V65.9M22.1 69.2V100M27.0 0V2.8M27.0 12.5V17.6M27.0 21.4V43.0M27.0 48.2V56.1M27.0 65.9V69.2M27.0 77.1V87.3M27.0 91.1V100M30.1 12.5V17.6M30.1 24.7V52.8M30.1 56.1V69.2M30.1 77.1V79.9M30.1 83.6V95.7M35.0 0V43.0M35.0 52.8V56.1M35.0 61.1V83.6M35.0 87.3V100M39.6 2.8V7.0M39.6 12.5V29.8M39.6 35.4V48.2M39.6 52.8V65.9M39.6 73.8V77.1M39.6 79.9V95.7M42.7 0V2.8M42.7 7.0V12.5M42.7 17.6V35.4M42.7 38.1V48.2M42.7 52.8V69.2M42.7 77.1V91.1M46.9 0V24.7M46.9 29.8V52.8M46.9 65.9V87.3M46.9 91.1V100M50.9 0V35.4M50.9 38.1V56.1M50.9 61.1V69.2M50.9 73.8V87.3M50.9 91.1V100M54.8 0V2.8M54.8 7.0V21.4M54.8 24.7V35.4M54.8 38.1V73.8M54.8 79.9V87.3M54.8 91.1V95.7M60.4 2.8V7.0M60.4 12.5V69.2M60.4 73.8V77.1M60.4 79.9V87.3M60.4 95.7V100M63.4 0V2.8M63.4 7.0V21.4M63.4 35.4V38.1M63.4 43.0V52.8M63.4 56.1V65.9M63.4 73.8V77.1M63.4 83.6V100M66.1 0V2.8M66.1 7.0V17.6M66.1 21.4V29.8M66.1 38.1V56.1M66.1 65.9V79.9M66.1 87.3V100M71.6 0V17.6M71.6 29.8V48.2M71.6 52.8V77.1M71.6 83.6V100M75.4 0V17.6M75.4 29.8V43.0M75.4 48.2V77.1M75.4 79.9V83.6M75.4 87.3V100M78.7 0V2.8M78.7 7.0V48.2M78.7 56.1V77.1M78.7 79.9V100M82.4 0V17.6M82.4 24.7V48.2M82.4 52.8V61.1M82.4 73.8V79.9M82.4 83.6V100M86.1 2.8V29.8M86.1 35.4V61.1M86.1 65.9V79.9M86.1 87.3V100M91.6 0V2.8M91.6 7.0V17.6M91.6 21.4V29.8M91.6 38.1V48.2M91.6 52.8V69.2M91.6 73.8V91.1M91.6 95.7V100M94.9 0V2.8M94.9 7.0V29.8M94.9 35.4V38.1M94.9 43.0V52.8M94.9 61.1V83.6M94.9 91.1V100" stroke="#d6deea" stroke-width="1.0" fill="none"/></pattern>
<pattern id="g6" width="100" height="100" patternUnits="userSpaceOnUse" patternTransform="rotate(62)"><path d="M0 2.7H13.7M17.9 2.7H21.7M28.5 2.7H43.2M51.6 2.7H62.3M66.6 2.7H70.0M74.2 2.7H83.4M86.2 2.7H90.0M94.7 2.7H100M2.1 7.6H28.5M31.2 7.6H47.3M56.9 7.6H66.6M70.0 7.6H77.9M83.4 7.6H100M0 11.0H24.6M31.2 11.0H47.3M56.9 11.0H62.3M70.0 11.0H100M2.1 16.1H10.0M13.7 16.1H17.9M21.7 16.1H31.2M34.2 16.1H47.3M51.6 16.1H62.3M66.6 16.1H74.2M83.4 16.1H90.0M94.7 16.1H100M6.0 21.5H17.9M21.7 21.5H51.6M62.3 21.5H86.2M94.7 21.5H100M0 24.3H6.0M10.0 24.3H21.7M28.5 24.3H31.2M34.2 24.3H43.2M47.3 24.3H62.3M74.2 24.3H83.4M90.0 24.3H100M0 27.9H6.0M17.9 27.9H21.7M24.6 27.9H43.2M47.3 27.9H56.9M62.3 27.9H70.0M74.2 27.9H83.4M86.2 27.9H100M0 31.7H6.0M17.9 31.7H100M2.1 35.5H6.0M10.0 35.5H17.9M21.7 35.5H24.6M28.5 35.5H34.2M37.7 35.5H47.3M51.6 35.5H66.6M70.0 35.5H74.2M77.9 35.5H100M0 39.8H2.1M6.0 39.8H34.2M37.7 39.8H47.3M51.6 39.8H77.9M83.4 39.8H94.7M0 43.2H13.7M17.9 43.2H43.2M47.3 43.2H77.9M83.4 43.2H90.0M2.1 47.8H6.0M10.0 47.8H17.9M21.7 47.8H43.2M47.3 47.8H51.6M56.9 47.8H62.3M70.0 47.8H86.2M90.0 47.8H94.7M6.0 53.0H13.7M17.9 53.0H28.5M31.2 53.0H43.2M47.3 53.0H51.6M56.9 53.0H62.3M70.0 53.0H77.9M83.4 53.0H100M2.1 58.4H6.0M10.0 58.4H13.7M21.7 58.4H37.7M47.3 58.4H94.7M6.0 63.6H13.7M21.7 63.6H43.2M47.3 63.6H77.9M83.4 63.6H86.2M90.0 63.6H100M0 66.9H2.1M6.0 66.9H10.0M13.7 66.9H28.5M31.2 66.9H51.6M56.9 66.9H86.2M90.0 66.9H100M0 71.8H2.1M6.0 71.8H10.0M13.7 71.8H21.7M28.5 71.8H56.9M66.6 71.8H94.7M6.0 76.7H13.7M17.9 76.7H21.7M24.6 76.7H34.2M37.7 76.7H43.2M47.3 76.7H62.3M70.0 76.7H74.2M77.9 76.7H83.4M86.2 76.7H100M2.1 81.2H24.6M28.5 81.2H34.2M37.7 81.2H43.2M47.3 81.2H56.9M62.3 81.2H74.2M83.4 81.2H100M2.1 85.8H6.0M10.0 85.8H13.7M17.9 85.8H28.5M31.2 85.8H47.3M51.6 85.8H74.2M83.4 85.8H94.7M0 89.4H10.0M13.7 89.4H21.7M28.5 89.4H43.2M51.6 89.4H56.9M66.6 89.4H74.2M86.2 89.4H90.0M94.7 89.4H100M2.1 94.3H10.0M17.9 94.3H24.6M34.2 94.3H37.7M43.2 94.3H77.9M83.4 94.3H94.7M0 97.7H34.2M37.7 97.7H47.3M51.6 97.7H66.6M74.2 97.7H86.2M90.0 97.7H94.7M2.1 0V21.5M2.1 24.3V35.5M2.1 47.8V58.4M2.1 63.6V71.8M2.1 76.7V97.7M6.0 0V16.1M6.0 27.9V31.7M6.0 43.2V81.2M6.0 85.8V89.4M6.0 94.3V100M10.0 0V2.7M10.0 11.0V16.1M10.0 21.5V31.7M10.0 35.5V39.8M10.0 43.2V58.4M10.0 63.6V76.7M10.0 85.8V94.3M10.0 97.7V100M13.7 0V31.7M13.7 35.5V43.2M13.7 58.4V100M17.9 0V16.1M17.9 24.3V31.7M17.9 43.2V85.8M17.9 89.4V97.7M21.7 2.7V24.3M21.7 27.9V39.8M21.7 47.8V53.0M21.7 58.4V71.8M21.7 76.7V89.4M21.7 94.3V100M24.6 0V2.7M24.6 7.6V21.5M24.6 24.3V31.7M24.6 39.8V53.0M24.6 58.4V63.6M24.6 66.9V85.8M24.6 89.4V100M28.5 0V2.7M28.5 7.6V11.0M28.5 16.1V21.5M28.5 24.3V31.7M28.5 35.5V43.2M28.5 58.4V66.9M28.5 71.8V100M31.2 0V2.7M31.2 7.6V27.9M31.2 31.7V39.8M31.2 43.2V47.8M31.2 58.4V63.6M31.2 66.9V76.7M31.2 81.2V100M34.2 2.7V39.8M34.2 43.2V53.0M34.2 63.6V71.8M34.2 76.7V97.7M37.7 0V53.0M37.7 58.4V81.2M37.7 89.4V100M43.2 0V27.9M43.2 31.7V35.5M43.2 39.8V43.2M43.2 47.8V58.4M43.2 66.9V94.3M43.2 97.7V100M47.3 0V24.3M47.3 27.9V35.5M47.3 39.8V43.2M47.3 47.8V58.4M47.3 66.9V71.8M47.3 76.7V85.8M47.3 89.4V97.7M51.6 2.7V11.0M51.6 16.1V24.3M51.6 27.9V31.7M51.6 35.5V97.7M56.9 0V16.1M56.9 21.5V63.6M56.9 71.8V81.2M56.9 85.8V100M62.3 2.7V11.0M62.3 24.3V27.9M62.3 31.7V39.8M62.3 43.2V47.8M62.3 58.4V71.8M62.3 85.8V94.3M66.6 0V39.8M66.6 43.2V97.7M70.0 0V11.0M70.0 21.5V63.6M70.0 66.9V94.3M70.0 97.7V100M74.2 0V7.6M74.2 11.0V39.8M74.2 47.8V66.9M74.2 71.8V89.4M74.2 94.3V100M77.9 2.7V27.9M77.9 31.7V39.8M77.9 47.8V63.6M77.9 66.9V76.7M77.9 81.2V85.8M77.9 89.4V100M83.4 0V16.1M83.4 21.5V24.3M83.4 27.9V58.4M83.4 63.6V66.9M83.4 71.8V81.2M83.4 85.8V94.3M86.2 0V2.7M86.2 11.0V16.1M86.2 27.9V63.6M86.2 66.9V71.8M86.2 76.7V97.7M90.0 0V7.6M90.0 11.0V16.1M90.0 21.5V35.5M90.0 43.2V47.8M90.0 53.0V63.6M90.0 66.9V71.8M90.0 76.7V89.4M90.0 94.3V100M94.7 0V2.7M94.7 7.6V43.2M94.7 47.8V89.4M94.7 94.3V97.7" stroke="#d6deea" stroke-width="1.0" fill="none"/></pattern>
<filter id="sb" x="0" y="0" width="100%" height="100%" filterUnits="objectBoundingBox"><feGaussianBlur stdDeviation=".38"/></filter>
</defs>
<g filter="url(#sb)">
<rect x="311" y="179.5" width="903" height="560.5" fill="#fbf2df"/>
<rect x="311" y="179.5" width="903" height="560.5" fill="url(#g1)"/>
<polygon points="444,344 583,262 625,290 655,330 640,362 610,400 540,370 500,358" fill="#fbf2df" />
<polygon points="444,344 583,262 625,290 655,330 640,362 610,400 540,370 500,358" fill="url(#g2)" />
<polygon points="311,404 380,375 444,344 455,392 468,452 415,477 311,472" fill="#fbf2df" />
<polygon points="311,404 380,375 444,344 455,392 468,452 415,477 311,472" fill="url(#g5)" />
<polygon points="722,320 760,270 800,245 845,267 925,310 905,335 850,372 775,410 745,410 735,370" fill="#fbf2df" />
<polygon points="722,320 760,270 800,245 845,267 925,310 905,335 850,372 775,410 745,410 735,370" fill="url(#g6)" />
<polygon points="500,700 530,679 620,626 700,576 720,601 650,640 590,686 553,741 470,741" fill="#fbf2df" />
<polygon points="500,700 530,679 620,626 700,576 720,601 650,640 590,686 553,741 470,741" fill="url(#g2)" />
<polygon points="817,483 880,465 940,440 955,490 950,520 893,520 880,530 870,543 826,537" fill="#fbf2df" />
<polygon points="817,483 880,465 940,440 955,490 950,520 893,520 880,530 870,543 826,537" fill="url(#g5)" />
<polygon points="311,519 466,522 465,545 455,579 425,600 392,634 372,668 340,703 311,722" fill="#fbf2df" />
<polygon points="311,519 466,522 465,545 455,579 425,600 392,634 372,668 340,703 311,722" fill="url(#g6)" />
<polygon points="1000,523 1214,520 1214,640 1150,628 1090,618 1086,570 1040,620 1028,625 1016,590" fill="#fbf2df" />
<polygon points="1000,523 1214,520 1214,640 1150,628 1090,618 1086,570 1040,620 1028,625 1016,590" fill="url(#g2)" />
<polygon points="590,180 690,180 690,220 680,250 672,318 655,330 625,290 612,262 600,230" fill="#fbf2df" />
<polygon points="590,180 690,180 690,220 680,250 672,318 655,330 625,290 612,262 600,230" fill="url(#g5)" />
<polygon points="311,180 408,205 437,292 440,320 369,300 373,275 386,233 335,218" fill="#fbf2df" />
<polygon points="311,180 408,205 437,292 440,320 369,300 373,275 386,233 335,218" fill="url(#g6)" />
<polygon points="826,540 870,543 884,535 920,520 950,526 930,541 870,568 822,580" fill="#fbf2df" />
<polygon points="826,540 870,543 884,535 920,520 950,526 930,541 870,568 822,580" fill="url(#g2)" />
<polygon points="750,604 830,585 822,580 835,635 855,665 885,705 810,728 770,741 720,741 720,620" fill="#fbf2df" />
<polygon points="750,604 830,585 822,580 835,635 855,665 885,705 810,728 770,741 720,741 720,620" fill="url(#g5)" />
<polygon points="886,455 930,405 1030,400 1045,415 1050,438 1005,466 965,505 955,490 940,440" fill="#fbf2df" />
<polygon points="886,455 930,405 1030,400 1045,415 1050,438 1005,466 965,505 955,490 940,440" fill="url(#g6)" />
<polygon points="760,612 900,602 935,640 920,700 850,716 790,734 750,700" fill="#fbf2df" opacity=".45"/>
<polygon points="560,690 640,660 700,640 715,741 560,741" fill="#fbf2df" opacity=".45"/>
<polygon points="311,590 420,602 390,640 340,700 311,718" fill="#fbf2df" opacity=".45"/>
<polygon points="1100,440 1165,450 1214,482 1214,505 1100,508" fill="#fbf2df" opacity=".45"/>
<polygon points="940,290 1000,230 1060,180 1140,180 1110,215 1105,265 1130,300 1122,380 1060,420 1010,400 960,330" fill="url(#g3)" />
<polygon points="1107,207 1122,203 1128,210 1133,219 1138,226 1141,240 1134,262 1120,272 1110,258 1104,232" fill="#d3f5e0" />
<polygon points="1139,227 1165,233 1181,237.5 1187.9,239.7 1175.4,243.2 1162.9,252.3 1151.7,262 1144.8,271.7 1139.9,284.2 1131,281 1129,264 1140,246" fill="#d3f5e0" />
<polygon points="1206,214 1214,213 1214,238.3 1208,238.6" fill="#d3f5e0" />
<polygon points="1214,261.3 1196,264.8 1179.5,274.5 1168.4,285.6 1160,295.4 1154.5,307.9 1151.7,319 1149,330 1147.6,340 1145,345 1143.8,359 1145.8,376 1153.6,394 1167,407.6 1185,419 1214,427" fill="#d3f5e0" />
<polygon points="1178,404 1214,402 1214,427 1192,421" fill="#f8f0de" />
<polygon points="1160,300 1214,272 1214,420 1180,410 1157,388 1150,345" fill="url(#g4)" />
<polygon points="975,331 1003,328 1006,350 980,352" fill="#d3f5e0" />
<polygon points="979,392 1030,370 1032,376 982,399" fill="#d3f5e0" />
<polygon points="970,668 1010,660 1050,672 1068,690 1068,741 970,741" fill="#d3f5e0" />
<polygon points="925,741 935,702 960,672 985,665 985,741" fill="#d3f5e0" />
<polygon points="1085,702 1150,698 1214,688 1214,741 1085,741" fill="#d3f5e0" />
<polygon points="1150,650 1180,646 1184,680 1155,684" fill="#d3f5e0" />
<polygon points="1190,574 1214,572 1214,600 1192,600" fill="#d3f5e0" />
<polygon points="1040,672 1065,668 1066,690 1042,688" fill="#bfeed2" />
<polygon points="970,690 1068,690 1068,741 970,741" fill="url(#g2)" opacity=".6"/>
<polygon points="1085,715 1214,715 1214,741 1085,741" fill="url(#g1)" opacity=".7"/>
<polygon points="466,538 478,536 479,552 467,553" fill="#c4efd4" />
<polygon points="565,368 573,368 573,377 565,377" fill="#c4efd4" />
<rect x="710" y="380" width="5" height="9" fill="#bdebd0" rx="1"/>
<rect x="717" y="376" width="5" height="9" fill="#bdebd0" rx="1"/>
<rect x="708" y="396" width="5" height="8" fill="#bdebd0" rx="1"/>
<rect x="715" y="392" width="5" height="8" fill="#bdebd0" rx="1"/>
<rect x="722" y="388" width="5" height="8" fill="#bdebd0" rx="1"/>
<rect x="630" y="683" width="7" height="8" fill="#bdebd0" rx="1"/>
<rect x="900" y="640" width="6" height="5" fill="#bdebd0" rx="1"/>
<rect x="873" y="650" width="5" height="4" fill="#bdebd0" rx="1"/>
<rect x="792" y="585" width="4" height="6" fill="#bdebd0" rx="1"/>
<rect x="766" y="640" width="4" height="4" fill="#bdebd0" rx="1"/>
<rect x="828" y="671" width="6" height="4" fill="#bdebd0" rx="1"/>
<rect x="838" y="690" width="8" height="3" fill="#bdebd0" rx="1"/>
<rect x="559" y="275" width="5" height="6" fill="#bdebd0" rx="1"/>
<rect x="751" y="278" width="5" height="6" fill="#bdebd0" rx="1"/>
<rect x="1057" y="215" width="4" height="5" fill="#bdebd0" rx="1"/>
<rect x="1161" y="529" width="4" height="5" fill="#bdebd0" rx="1"/>
<rect x="998" y="475" width="3" height="5" fill="#bdebd0" rx="1"/>
<polygon points="820,389 842,380 843,390" fill="#fbe1dc" />
<polygon points="836,482 845,482 845,495 836,495" fill="#fbe1dc" />
<polygon points="845,500 856,500 856,510 845,510" fill="#fbe1dc" />
<polygon points="893,510 905,510 905,518 893,518" fill="#fbe1dc" />
<polygon points="696,195 706,193 708,210 698,212" fill="#fbe1dc" />
<polygon points="745,360 760,356 760,372 748,374" fill="#fbe1dc" />
<polygon points="340,608 356,605 357,612 341,614" fill="#fbe1dc" />
<polygon points="935,600 945,598 947,610 937,612" fill="#fbe1dc" />
<polygon points="331,224 346,224 353,234 354,227 367,227 368,234 357,235 358,240 372,240 375,246 364,246.5 364,259 360,264.5 362,270 369,273.5 369,281 357,278 349,272.5 346,264.5 351,255.5 352,246.5 349,241 337,234" fill="#9fdcf0" />
<polygon points="575,410 584,411 586,422 578,425 574,418" fill="#90d9ef" />
<polygon points="558,442 567,441 568,451 560,452" fill="#90d9ef" />
<polygon points="549,252 553,250 555,258 551,260" fill="#90d9ef" />
<polygon points="850,336 853,335 854,340 851,341" fill="#90d9ef" />
<polygon points="390,446 395,445 396,449 391,450" fill="#90d9ef" />
<polygon points="409,417 414,416 415,424 410,425" fill="#90d9ef" />
<polygon points="1214,238.3 1187.9,239.7 1175.4,243.2 1162.9,252.3 1151.7,262 1144.8,271.7 1139.9,284.2 1134.3,291.2 1132.3,302.3 1129.5,313.4 1125.3,327.4 1123.2,340 1121,349 1119.4,374.5 1124.3,392 1136,409.6 1155.5,425.2 1181,439 1214,448.7 1214,427 1185,419 1167,407.6 1153.6,394 1145.8,376 1143.8,359 1145,345 1147.6,340 1149,330 1151.7,319 1154.5,307.9 1160,295.4 1168.4,285.6 1179.5,274.5 1196,264.8 1214,261.3" fill="#90d9ef" />
<path d="M1025 181 C1028.3 181.5 1038.8 183.2 1045 184 C1051.2 184.8 1055.3 185.0 1062 186 C1068.7 187.0 1077.8 188.2 1085 190 C1092.2 191.8 1099.0 195.0 1105 197 C1111.0 199.0 1118.3 201.2 1121 202" fill="none" stroke="#90d9ef" stroke-width="5" stroke-linecap="round" stroke-linejoin="round" />
<path d="M1121 202 C1122.3 203.2 1126.6 206.9 1128.6 209.5 C1130.5 212.1 1131.2 215.1 1132.7 217.6 C1134.2 220.1 1134.8 222.6 1137.7 224.7 C1140.6 226.8 1145.5 228.5 1150 230 C1154.5 231.5 1160.0 232.2 1165 233.5 C1170.0 234.8 1177.5 236.8 1180 237.5" fill="none" stroke="#90d9ef" stroke-width="3.6" stroke-linecap="round" stroke-linejoin="round" />
<polygon points="1126,239 1129,238 1130,243 1127,245" fill="#90d9ef" />
<path d="M1025 181 L1010 179" fill="none" stroke="#90d9ef" stroke-width="4" stroke-linecap="round" stroke-linejoin="round" />
<path d="M777 198 C780.3 199.2 792.3 202.2 797 205 C801.7 207.8 800.3 211.3 805 215 C809.7 218.7 815.8 222.8 825 227 C834.2 231.2 850.8 236.2 860 240 C869.2 243.8 873.8 247.0 880 250 C886.2 253.0 892.0 256.7 897 258 C902.0 259.3 906.2 260.2 910 258 C913.8 255.8 916.7 249.3 920 245 C923.3 240.7 928.3 234.2 930 232" fill="none" stroke="#8fd8ee" stroke-width="2.2" stroke-linecap="round" stroke-linejoin="round" />
<path d="M1124 383 C1120.8 383.8 1111.5 386.0 1105 388 C1098.5 390.0 1088.3 393.8 1085 395" fill="none" stroke="#90d9ef" stroke-width="4" stroke-linecap="round" stroke-linejoin="round" />
<path d="M1040 452 C1035.0 455.0 1019.2 464.0 1010 470 C1000.8 476.0 993.0 481.8 985 488 C977.0 494.2 968.7 501.3 962 507 C955.3 512.7 947.8 519.5 945 522" fill="none" stroke="#90d9ef" stroke-width="5.5" stroke-linecap="round" stroke-linejoin="round" />
<path d="M1214 508.5 C1211.7 508.8 1210.7 509.2 1200 510 C1189.3 510.8 1166.7 512.2 1150 513 C1133.3 513.8 1116.7 514.6 1100 515 C1083.3 515.4 1066.7 515.2 1050 515.5 C1033.3 515.8 1012.5 516.4 1000 517 C987.5 517.6 983.3 517.2 975 519 C966.7 520.8 957.5 524.3 950 528 C942.5 531.7 938.3 536.3 930 541 C921.7 545.7 910.0 551.5 900 556 C890.0 560.5 881.7 564.2 870 568 C858.3 571.8 843.3 575.5 830 579 C816.7 582.5 803.3 585.7 790 589 C776.7 592.3 761.7 597.0 750 599 C738.3 601.0 730.0 598.3 720 601 C710.0 603.7 701.7 608.5 690 615 C678.3 621.5 662.5 631.7 650 640 C637.5 648.3 625.0 657.3 615 665 C605.0 672.7 597.5 679.0 590 686 C582.5 693.0 576.2 697.8 570 707 C563.8 716.2 555.8 735.3 553 741" fill="none" stroke="#90d9ef" stroke-width="7" stroke-linecap="round" stroke-linejoin="round" />
<path d="M950 526 C947.5 525.2 940.0 522.0 935 521 C930.0 520.0 926.7 519.7 920 520 C913.3 520.3 901.0 520.5 895 523 C889.0 525.5 887.3 531.2 884 535 C880.7 538.8 879.3 543.7 875 546 C870.7 548.3 865.5 549.8 858 549 C850.5 548.2 839.7 543.3 830 541 C820.3 538.7 808.3 535.8 800 535 C791.7 534.2 786.7 533.8 780 536 C773.3 538.2 767.5 544.2 760 548 C752.5 551.8 745.0 554.3 735 559 C725.0 563.7 709.2 571.0 700 576 C690.8 581.0 686.7 584.8 680 589 C673.3 593.2 670.0 594.8 660 601 C650.0 607.2 635.0 616.8 620 626 C605.0 635.2 585.0 647.2 570 656 C555.0 664.8 541.7 671.7 530 679 C518.3 686.3 505.0 696.5 500 700" fill="none" stroke="#90d9ef" stroke-width="4" stroke-linecap="round" stroke-linejoin="round" />
<path d="M607 633 L622 657" fill="none" stroke="#90d9ef" stroke-width="4" stroke-linecap="round" stroke-linejoin="round" />
<path d="M681 590 L695 613" fill="none" stroke="#90d9ef" stroke-width="4" stroke-linecap="round" stroke-linejoin="round" />
<path d="M990 524 C991.3 527.5 995.0 538.2 998 545 C1001.0 551.8 1005.0 557.5 1008 565 C1011.0 572.5 1012.7 580.0 1016 590 C1019.3 600.0 1025.5 615.3 1028 625 C1030.5 634.7 1032.8 640.8 1031 648 C1029.2 655.2 1021.8 661.3 1017 668 C1012.2 674.7 1006.2 680.2 1002 688 C997.8 695.8 994.0 706.2 992 715 C990.0 723.8 990.3 736.7 990 741" fill="none" stroke="#90d9ef" stroke-width="6" stroke-linecap="round" stroke-linejoin="round" />
<path d="M1005 542 C1009.2 540.7 1024.8 531.0 1030 534 C1035.2 537.0 1031.0 554.7 1036 560 C1041.0 565.3 1051.8 566.7 1060 566 C1068.2 565.3 1080.8 557.7 1085 556" fill="none" stroke="#8fd8ee" stroke-width="1.6" stroke-linecap="round" stroke-linejoin="round" />
<path d="M1035 647 C1039.2 645.2 1050.8 636.3 1060 636 C1069.2 635.7 1081.7 641.0 1090 645 C1098.3 649.0 1101.7 658.3 1110 660 C1118.3 661.7 1130.0 657.5 1140 655 C1150.0 652.5 1160.8 645.0 1170 645 C1179.2 645.0 1187.7 654.2 1195 655 C1202.3 655.8 1210.8 650.8 1214 650" fill="none" stroke="#8fd8ee" stroke-width="1.8" stroke-linecap="round" stroke-linejoin="round" />
<path d="M1100 590 C1103.3 591.7 1111.7 600.0 1120 600 C1128.3 600.0 1143.3 594.2 1150 590 C1156.7 585.8 1158.3 577.5 1160 575" fill="none" stroke="#8fd8ee" stroke-width="1.6" stroke-linecap="round" stroke-linejoin="round" />
<path d="M1150 716 C1155.0 717.0 1169.3 719.7 1180 722 C1190.7 724.3 1208.3 728.7 1214 730" fill="none" stroke="#8fd8ee" stroke-width="2.5" stroke-linecap="round" stroke-linejoin="round" />
<path d="M760 596 C763.3 598.5 774.5 603.7 780 611 C785.5 618.3 790.0 630.2 793 640 C796.0 649.8 795.2 661.7 798 670 C800.8 678.3 805.0 685.0 810 690 C815.0 695.0 824.7 694.2 828 700 C831.3 705.8 828.0 718.2 830 725 C832.0 731.8 838.3 738.3 840 741" fill="none" stroke="#8fd8ee" stroke-width="2" stroke-linecap="round" stroke-linejoin="round" />
<path d="M895 572 C898.3 575.0 908.3 582.8 915 590 C921.7 597.2 932.3 606.7 935 615 C937.7 623.3 931.7 635.8 931 640" fill="none" stroke="#8fd8ee" stroke-width="1.6" stroke-linecap="round" stroke-linejoin="round" />
<path d="M940 690 C943.3 693.3 953.3 703.0 960 710 C966.7 717.0 976.7 728.3 980 732" fill="none" stroke="#8fd8ee" stroke-width="1.6" stroke-linecap="round" stroke-linejoin="round" />
<path d="M427 668 C431.2 665.8 444.8 658.0 452 655 C459.2 652.0 467.7 645.8 470 650 C472.3 654.2 461.8 673.7 466 680 C470.2 686.3 491.0 681.3 495 688 C499.0 694.7 490.8 711.2 490 720 C489.2 728.8 490.0 737.5 490 741" fill="none" stroke="#8fd8ee" stroke-width="1.6" stroke-linecap="round" stroke-linejoin="round" />
<path d="M540 690 C538.0 694.2 531.3 706.5 528 715 C524.7 723.5 521.3 736.7 520 741" fill="none" stroke="#8fd8ee" stroke-width="2.5" stroke-linecap="round" stroke-linejoin="round" />
<path d="M590 690 C590.8 693.3 591.7 705.0 595 710 C598.3 715.0 607.2 714.8 610 720 C612.8 725.2 611.7 737.5 612 741" fill="none" stroke="#8fd8ee" stroke-width="2.5" stroke-linecap="round" stroke-linejoin="round" />
<path d="M549 580 C548.3 586.7 544.3 608.3 545 620 C545.7 631.7 552.5 641.3 553 650 C553.5 658.7 548.8 668.3 548 672" fill="none" stroke="#8fd8ee" stroke-width="2" stroke-linecap="round" stroke-linejoin="round" />
<path d="M553 441 C550.8 445.8 542.5 462.5 540 470 C537.5 477.5 538.3 483.3 538 486" fill="none" stroke="#8fd8ee" stroke-width="1.6" stroke-linecap="round" stroke-linejoin="round" />
<path d="M567 502 C570.0 506.7 580.8 520.3 585 530 C589.2 539.7 591.2 551.3 592 560 C592.8 568.7 590.3 578.3 590 582" fill="none" stroke="#8fd8ee" stroke-width="1.6" stroke-linecap="round" stroke-linejoin="round" />
<path d="M1170 345 C1172.5 343.3 1180.0 335.8 1185 335 C1190.0 334.2 1195.2 340.8 1200 340 C1204.8 339.2 1211.7 331.7 1214 330" fill="none" stroke="#8fd8ee" stroke-width="1.5" stroke-linecap="round" stroke-linejoin="round" />
<path d="M1190 380 C1191.7 383.3 1199.2 393.3 1200 400 C1200.8 406.7 1195.8 416.7 1195 420" fill="none" stroke="#8fd8ee" stroke-width="1.5" stroke-linecap="round" stroke-linejoin="round" />
<path d="M1045 462 C1045.8 463.3 1047.8 468.3 1050 470 C1052.2 471.7 1056.7 471.7 1058 472" fill="none" stroke="#8fd8ee" stroke-width="1.2" stroke-linecap="round" stroke-linejoin="round" />
<polygon points="1150,547 1165,550 1172,560 1195,568 1190,573 1168,570 1160,575 1155,562" fill="#90d9ef" />
<polygon points="1175,440 1214,440 1214,460 1195,452" fill="#90d9ef" />
<path d="M311 190 C312.8 192.5 318.0 200.3 322 205 C326.0 209.7 328.7 214.8 335 218 C341.3 221.2 352.8 222.7 360 224 C367.2 225.3 373.7 224.5 378 226 C382.3 227.5 384.7 231.8 386 233" fill="none" stroke="#c4cddb" stroke-width="3.4" stroke-linecap="round" stroke-linejoin="round" />
<path d="M386 233 C385.0 236.7 382.2 248.0 380 255 C377.8 262.0 374.8 267.5 373 275 C371.2 282.5 370.2 290.8 369 300 C367.8 309.2 367.2 320.0 366 330 C364.8 340.0 362.7 355.0 362 360" fill="none" stroke="#cdd5e1" stroke-width="3.0" stroke-linecap="round" stroke-linejoin="round" />
<path d="M408 205 C410.0 210.8 416.3 229.2 420 240 C423.7 250.8 427.2 261.3 430 270 C432.8 278.7 435.3 283.7 437 292 C438.7 300.3 438.8 311.3 440 320 C441.2 328.7 443.3 340.0 444 344" fill="none" stroke="#cdd5e1" stroke-width="3.0" stroke-linecap="round" stroke-linejoin="round" />
<path d="M425 253 C429.2 253.3 442.5 254.2 450 255 C457.5 255.8 460.8 255.5 470 258 C479.2 260.5 493.3 265.5 505 270 C516.7 274.5 530.0 280.8 540 285 C550.0 289.2 560.8 293.3 565 295" fill="none" stroke="#cdd5e1" stroke-width="3.0" stroke-linecap="round" stroke-linejoin="round" />
<path d="M444 344 C448.3 342.0 460.7 336.3 470 332 C479.3 327.7 490.0 323.3 500 318 C510.0 312.7 520.8 305.5 530 300 C539.2 294.5 546.2 291.3 555 285 C563.8 278.7 578.3 265.8 583 262" fill="none" stroke="#c4cddb" stroke-width="2.8" stroke-linecap="round" stroke-linejoin="round" />
<path d="M444 344 C438.3 346.7 420.7 354.8 410 360 C399.3 365.2 390.8 370.0 380 375 C369.2 380.0 356.5 385.2 345 390 C333.5 394.8 316.7 401.7 311 404" fill="none" stroke="#c4cddb" stroke-width="2.8" stroke-linecap="round" stroke-linejoin="round" />
<path d="M395 330 C399.2 331.2 411.8 334.7 420 337 C428.2 339.3 430.7 340.5 444 344 C457.3 347.5 484.0 353.7 500 358 C516.0 362.3 528.3 366.3 540 370 C551.7 373.7 558.3 375.0 570 380 C581.7 385.0 603.3 396.7 610 400" fill="none" stroke="#cdd5e1" stroke-width="3.0" stroke-linecap="round" stroke-linejoin="round" />
<path d="M444 344 C445.0 348.3 448.2 362.0 450 370 C451.8 378.0 453.0 382.8 455 392 C457.0 401.2 459.8 415.0 462 425 C464.2 435.0 467.0 447.5 468 452" fill="none" stroke="#cdd5e1" stroke-width="3.0" stroke-linecap="round" stroke-linejoin="round" />
<path d="M380 375 C383.3 378.3 393.7 388.8 400 395 C406.3 401.2 411.3 405.8 418 412 C424.7 418.2 432.7 425.3 440 432 C447.3 438.7 458.3 448.7 462 452" fill="none" stroke="#cdd5e1" stroke-width="3.0" stroke-linecap="round" stroke-linejoin="round" />
<path d="M535 340 C534.2 345.0 531.2 360.0 530 370 C528.8 380.0 527.7 390.0 528 400 C528.3 410.0 530.7 421.3 532 430 C533.3 438.7 534.7 445.3 536 452 C537.3 458.7 539.3 467.0 540 470" fill="none" stroke="#cdd5e1" stroke-width="3.0" stroke-linecap="round" stroke-linejoin="round" />
<path d="M311 450 C312.8 452.0 318.5 458.5 322 462 C325.5 465.5 330.3 469.5 332 471" fill="none" stroke="#cdd5e1" stroke-width="3.0" stroke-linecap="round" stroke-linejoin="round" />
<path d="M311 472 C316.7 471.8 333.5 471.3 345 471 C356.5 470.7 368.3 469.0 380 470 C391.7 471.0 400.0 474.2 415 477 C430.0 479.8 455.8 484.0 470 487 C484.2 490.0 490.0 492.8 500 495 C510.0 497.2 521.7 498.8 530 500 C538.3 501.2 542.5 502.3 550 502 C557.5 501.7 570.8 498.7 575 498" fill="none" stroke="#c4cddb" stroke-width="3" stroke-linecap="round" stroke-linejoin="round" />
<path d="M311 519 C319.2 519.2 343.5 519.7 360 520 C376.5 520.3 392.3 520.7 410 521 C427.7 521.3 456.7 521.8 466 522" fill="none" stroke="#cdd5e1" stroke-width="2.6" stroke-linecap="round" stroke-linejoin="round" />
<path d="M450 440 C452.5 442.0 459.2 449.3 465 452 C470.8 454.7 478.3 455.0 485 456 C491.7 457.0 498.8 454.7 505 458 C511.2 461.3 516.2 469.8 522 476 C527.8 482.2 537.0 491.8 540 495" fill="none" stroke="#cdd5e1" stroke-width="3.0" stroke-linecap="round" stroke-linejoin="round" />
<path d="M468 452 C469.0 455.0 474.0 463.7 474 470 C474.0 476.3 469.3 481.3 468 490 C466.7 498.7 466.5 512.8 466 522 C465.5 531.2 465.2 541.2 465 545" fill="none" stroke="#cdd5e1" stroke-width="3.0" stroke-linecap="round" stroke-linejoin="round" />
<path d="M540 555 C533.3 556.7 514.2 561.0 500 565 C485.8 569.0 466.7 573.8 455 579 C443.3 584.2 434.2 593.2 430 596" fill="none" stroke="#cdd5e1" stroke-width="3.0" stroke-linecap="round" stroke-linejoin="round" />
<path d="M511 540 C507.5 542.7 496.8 551.3 490 556 C483.2 560.7 473.3 566.0 470 568" fill="none" stroke="#cdd5e1" stroke-width="3.0" stroke-linecap="round" stroke-linejoin="round" />
<path d="M355 521 C356.2 525.8 358.7 539.8 362 550 C365.3 560.2 371.2 572.0 375 582 C378.8 592.0 383.3 605.3 385 610" fill="none" stroke="#cdd5e1" stroke-width="2" stroke-linecap="round" stroke-linejoin="round" />
<path d="M325 585 C328.3 587.5 338.3 593.3 345 600 C351.7 606.7 359.2 616.7 365 625 C370.8 633.3 377.5 645.8 380 650" fill="none" stroke="#cdd5e1" stroke-width="1.8" stroke-linecap="round" stroke-linejoin="round" />
<path d="M311 722 C315.8 718.8 329.8 712.0 340 703 C350.2 694.0 363.3 679.5 372 668 C380.7 656.5 383.2 645.3 392 634 C400.8 622.7 413.7 610.0 425 600 C436.3 590.0 450.0 579.3 460 574 C470.0 568.7 480.8 569.0 485 568" fill="none" stroke="#c4cddb" stroke-width="4.4" stroke-linecap="round" stroke-linejoin="round" />
<path d="M448 632 C447.3 638.3 445.3 658.7 444 670 C442.7 681.3 440.7 695.0 440 700" fill="none" stroke="#cdd5e1" stroke-width="2" stroke-linecap="round" stroke-linejoin="round" />
<path d="M462 570 C462.0 575.0 462.0 590.7 462 600 C462.0 609.3 462.0 621.7 462 626" fill="none" stroke="#cdd5e1" stroke-width="2" stroke-linecap="round" stroke-linejoin="round" />
<path d="M448 628 C452.5 627.3 464.7 622.0 475 624 C485.3 626.0 499.2 635.5 510 640 C520.8 644.5 535.0 649.2 540 651" fill="none" stroke="#cdd5e1" stroke-width="2" stroke-linecap="round" stroke-linejoin="round" />
<path d="M311 690 C314.2 691.7 324.3 693.3 330 700 C335.7 706.7 341.7 723.2 345 730 C348.3 736.8 349.2 739.2 350 741" fill="none" stroke="#cdd5e1" stroke-width="2" stroke-linecap="round" stroke-linejoin="round" />
<path d="M578 180 C576.2 185.8 569.5 201.7 567 215 C564.5 228.3 564.2 245.8 563 260 C561.8 274.2 562.5 290.0 560 300 C557.5 310.0 551.7 313.3 548 320 C544.3 326.7 539.7 336.7 538 340" fill="none" stroke="#cdd5e1" stroke-width="3.0" stroke-linecap="round" stroke-linejoin="round" />
<path d="M590 180 C591.7 188.3 596.3 216.3 600 230 C603.7 243.7 607.8 252.0 612 262 C616.2 272.0 619.5 281.0 625 290 C630.5 299.0 640.0 309.3 645 316 C650.0 322.7 653.3 327.7 655 330" fill="none" stroke="#cdd5e1" stroke-width="3.0" stroke-linecap="round" stroke-linejoin="round" />
<path d="M690 220 C688.3 225.0 683.0 238.3 680 250 C677.0 261.7 673.3 278.7 672 290 C670.7 301.3 673.2 311.0 672 318 C670.8 325.0 666.2 329.7 665 332" fill="none" stroke="#cdd5e1" stroke-width="3.0" stroke-linecap="round" stroke-linejoin="round" />
<path d="M692 212 C693.3 216.7 697.3 230.3 700 240 C702.7 249.7 704.3 256.7 708 270 C711.7 283.3 717.5 303.3 722 320 C726.5 336.7 731.2 355.0 735 370 C738.8 385.0 742.2 398.3 745 410 C747.8 421.7 749.8 431.3 752 440 C754.2 448.7 757.0 458.3 758 462" fill="none" stroke="#c4cddb" stroke-width="3" stroke-linecap="round" stroke-linejoin="round" />
<path d="M696 186 C699.2 187.2 707.7 189.8 715 193 C722.3 196.2 730.8 198.5 740 205 C749.2 211.5 765.0 227.5 770 232" fill="none" stroke="#c4cddb" stroke-width="3" stroke-linecap="round" stroke-linejoin="round" />
<path d="M690 180 L700 188" fill="none" stroke="#8e9fba" stroke-width="4" stroke-linecap="round" stroke-linejoin="round" />
<path d="M760 270 C756.7 273.3 746.3 283.3 740 290 C733.7 296.7 726.2 304.7 722 310 C717.8 315.3 716.2 320.0 715 322" fill="none" stroke="#cdd5e1" stroke-width="3.0" stroke-linecap="round" stroke-linejoin="round" />
<path d="M655 342 C652.5 345.3 646.7 353.2 640 362 C633.3 370.8 620.0 387.0 615 395 C610.0 403.0 611.2 400.8 610 410 C608.8 419.2 608.7 440.7 608 450 C607.3 459.3 606.3 463.3 606 466" fill="none" stroke="#cdd5e1" stroke-width="3.0" stroke-linecap="round" stroke-linejoin="round" />
<path d="M665 343 C669.2 349.7 680.8 369.3 690 383 C699.2 396.7 712.5 415.5 720 425 C727.5 434.5 732.5 437.5 735 440" fill="none" stroke="#cdd5e1" stroke-width="3.0" stroke-linecap="round" stroke-linejoin="round" />
<path d="M690 383 C683.3 386.7 662.5 397.2 650 405 C637.5 412.8 623.3 423.3 615 430 C606.7 436.7 602.5 442.5 600 445" fill="none" stroke="#cdd5e1" stroke-width="3.0" stroke-linecap="round" stroke-linejoin="round" />
<path d="M610 402 C616.7 404.7 636.7 412.5 650 418 C663.3 423.5 677.2 431.5 690 435 C702.8 438.5 717.8 439.8 727 439 C736.2 438.2 737.0 434.0 745 430 C753.0 426.0 770.0 417.5 775 415" fill="none" stroke="#cdd5e1" stroke-width="3.0" stroke-linecap="round" stroke-linejoin="round" />
<path d="M530 375 C533.3 375.3 543.3 376.2 550 377 C556.7 377.8 566.7 379.5 570 380" fill="none" stroke="#cdd5e1" stroke-width="3.0" stroke-linecap="round" stroke-linejoin="round" />
<path d="M575 498 C582.5 498.3 609.2 498.8 620 500 C630.8 501.2 630.0 503.7 640 505 C650.0 506.3 666.7 508.3 680 508 C693.3 507.7 709.2 504.7 720 503 C730.8 501.3 733.3 500.2 745 498 C756.7 495.8 778.0 492.5 790 490 C802.0 487.5 812.5 484.2 817 483" fill="none" stroke="#c4cddb" stroke-width="3.6" stroke-linecap="round" stroke-linejoin="round" />
<path d="M620 500 C623.3 497.7 633.3 490.7 640 486 C646.7 481.3 650.0 477.7 660 472 C670.0 466.3 688.3 457.3 700 452 C711.7 446.7 720.0 444.0 730 440 C740.0 436.0 755.0 430.0 760 428" fill="none" stroke="#c4cddb" stroke-width="3" stroke-linecap="round" stroke-linejoin="round" />
<path d="M530 485 C532.5 483.3 537.5 478.3 545 475 C552.5 471.7 565.0 467.2 575 465 C585.0 462.8 600.0 462.5 605 462" fill="none" stroke="#cdd5e1" stroke-width="3.0" stroke-linecap="round" stroke-linejoin="round" />
<path d="M545 460 C547.2 462.7 553.8 471.0 558 476 C562.2 481.0 567.0 486.3 570 490 C573.0 493.7 575.0 496.7 576 498" fill="none" stroke="#cdd5e1" stroke-width="3.0" stroke-linecap="round" stroke-linejoin="round" />
<path d="M530 555 C536.7 553.3 555.0 547.8 570 545 C585.0 542.2 603.3 538.8 620 538 C636.7 537.2 656.7 540.5 670 540 C683.3 539.5 687.5 537.0 700 535 C712.5 533.0 733.3 528.8 745 528 C756.7 527.2 765.8 529.7 770 530" fill="none" stroke="#cdd5e1" stroke-width="2.6" stroke-linecap="round" stroke-linejoin="round" />
<path d="M618 500 C617.2 506.7 613.5 526.7 613 540 C612.5 553.3 613.8 568.7 615 580 C616.2 591.3 619.2 603.3 620 608" fill="none" stroke="#cdd5e1" stroke-width="2" stroke-linecap="round" stroke-linejoin="round" />
<path d="M670 510 C669.5 518.3 666.7 548.0 667 560 C667.3 572.0 671.2 578.3 672 582" fill="none" stroke="#cdd5e1" stroke-width="2" stroke-linecap="round" stroke-linejoin="round" />
<path d="M553 520 C552.8 526.7 552.2 549.7 552 560 C551.8 570.3 552.0 578.3 552 582" fill="none" stroke="#cdd5e1" stroke-width="2" stroke-linecap="round" stroke-linejoin="round" />
<path d="M530 645 C538.3 640.0 561.7 625.0 580 615 C598.3 605.0 626.3 592.2 640 585 C653.7 577.8 658.3 574.2 662 572" fill="none" stroke="#cdd5e1" stroke-width="2.6" stroke-linecap="round" stroke-linejoin="round" />
<path d="M553 741 C555.2 737.2 561.5 724.8 566 718 C570.5 711.2 574.3 705.8 580 700 C585.7 694.2 590.0 690.5 600 683 C610.0 675.5 625.0 664.7 640 655 C655.0 645.3 678.0 632.3 690 625 C702.0 617.7 708.3 613.3 712 611" fill="none" stroke="#cdd5e1" stroke-width="2.4" stroke-linecap="round" stroke-linejoin="round" />
<path d="M400 748 C407.8 743.7 432.0 730.7 447 722 C462.0 713.3 476.2 704.3 490 696 C503.8 687.7 518.3 678.8 530 672 C541.7 665.2 548.3 661.7 560 655 C571.7 648.3 586.7 640.0 600 632 C613.3 624.0 628.3 614.3 640 607 C651.7 599.7 661.7 593.0 670 588 C678.3 583.0 683.0 580.7 690 577 C697.0 573.3 704.5 569.7 712 566 C719.5 562.3 727.0 558.5 735 555 C743.0 551.5 755.8 546.7 760 545" fill="none" stroke="#8e9fba" stroke-width="5" stroke-linecap="round" stroke-linejoin="round" />
<path d="M717 590 C717.5 595.0 719.5 605.0 720 620 C720.5 635.0 720.0 659.8 720 680 C720.0 700.2 720.0 730.8 720 741" fill="none" stroke="#8e9fba" stroke-width="3" stroke-linecap="round" stroke-linejoin="round" />
<path d="M730 575 C728.7 574.2 724.7 569.5 722 570 C719.3 570.5 715.0 574.3 714 578 C713.0 581.7 714.0 588.7 716 592 C718.0 595.3 724.3 597.0 726 598" fill="none" stroke="#8e9fba" stroke-width="2.4" stroke-linecap="round" stroke-linejoin="round" />
<path d="M835 185 C842.5 190.0 866.7 205.8 880 215 C893.3 224.2 905.8 232.2 915 240 C924.2 247.8 931.7 258.3 935 262" fill="none" stroke="#cdd5e1" stroke-width="3.0" stroke-linecap="round" stroke-linejoin="round" />
<path d="M895 180 C895.3 186.7 896.5 207.3 897 220 C897.5 232.7 897.8 250.0 898 256" fill="none" stroke="#cdd5e1" stroke-width="3.0" stroke-linecap="round" stroke-linejoin="round" />
<path d="M777 195 C780.3 196.0 792.2 198.2 797 201 C801.8 203.8 801.2 208.2 806 212 C810.8 215.8 817.0 219.8 826 224 C835.0 228.2 850.8 233.2 860 237 C869.2 240.8 877.5 245.3 881 247" fill="none" stroke="#cdd5e1" stroke-width="1.6" stroke-linecap="round" stroke-linejoin="round" />
<path d="M770 232 L800 245" fill="none" stroke="#c4cddb" stroke-width="3" stroke-linecap="round" stroke-linejoin="round" />
<path d="M800 245 L845 267" fill="none" stroke="#8e9fba" stroke-width="3.2" stroke-linecap="round" stroke-linejoin="round" />
<path d="M845 267 C850.8 270.3 866.7 279.8 880 287 C893.3 294.2 915.0 304.8 925 310 C935.0 315.2 934.7 314.7 940 318 C945.3 321.3 954.2 328.0 957 330" fill="none" stroke="#c4cddb" stroke-width="3" stroke-linecap="round" stroke-linejoin="round" />
<path d="M915 262 C914.5 266.7 914.2 280.3 912 290 C909.8 299.7 905.7 310.8 902 320 C898.3 329.2 892.0 340.8 890 345" fill="none" stroke="#cdd5e1" stroke-width="3.0" stroke-linecap="round" stroke-linejoin="round" />
<path d="M935 318 C937.5 314.2 945.0 302.2 950 295 C955.0 287.8 959.2 281.7 965 275 C970.8 268.3 977.5 261.7 985 255 C992.5 248.3 1005.8 238.3 1010 235" fill="none" stroke="#cdd5e1" stroke-width="3.0" stroke-linecap="round" stroke-linejoin="round" />
<path d="M775 410 C780.8 407.0 797.5 398.3 810 392 C822.5 385.7 838.3 378.2 850 372 C861.7 365.8 870.8 361.2 880 355 C889.2 348.8 897.5 341.7 905 335 C912.5 328.3 919.2 320.8 925 315 C930.8 309.2 937.5 302.5 940 300" fill="none" stroke="#c4cddb" stroke-width="3.4" stroke-linecap="round" stroke-linejoin="round" />
<path d="M830 452 C833.3 446.7 843.8 429.8 850 420 C856.2 410.2 862.0 400.5 867 393 C872.0 385.5 875.7 380.5 880 375 C884.3 369.5 890.8 362.5 893 360" fill="none" stroke="#cdd5e1" stroke-width="2.6" stroke-linecap="round" stroke-linejoin="round" />
<path d="M820 390 C827.7 390.5 855.3 391.7 866 393 C876.7 394.3 881.0 397.2 884 398" fill="none" stroke="#cdd5e1" stroke-width="3.0" stroke-linecap="round" stroke-linejoin="round" />
<path d="M858 368 C859.3 372.2 862.3 382.7 866 393 C869.7 403.3 876.7 419.7 880 430 C883.3 440.3 885.0 450.8 886 455" fill="none" stroke="#cdd5e1" stroke-width="3.0" stroke-linecap="round" stroke-linejoin="round" />
<path d="M800 375 C801.7 378.3 807.5 387.5 810 395 C812.5 402.5 813.0 410.8 815 420 C817.0 429.2 819.8 440.0 822 450 C824.2 460.0 827.3 465.0 828 480 C828.7 495.0 827.0 523.3 826 540 C825.0 556.7 822.5 568.3 822 580 C821.5 591.7 820.8 600.8 823 610 C825.2 619.2 829.7 625.8 835 635 C840.3 644.2 846.7 653.3 855 665 C863.3 676.7 877.5 692.3 885 705 C892.5 717.7 897.5 735.0 900 741" fill="none" stroke="#cdd5e1" stroke-width="2.4" stroke-linecap="round" stroke-linejoin="round" />
<path d="M860 452 C866.7 448.3 888.3 437.8 900 430 C911.7 422.2 920.8 412.5 930 405 C939.2 397.5 950.8 388.3 955 385" fill="none" stroke="#cdd5e1" stroke-width="2.6" stroke-linecap="round" stroke-linejoin="round" />
<path d="M895 446 C900.0 441.7 915.8 428.0 925 420 C934.2 412.0 945.8 401.7 950 398" fill="none" stroke="#cdd5e1" stroke-width="3.0" stroke-linecap="round" stroke-linejoin="round" />
<path d="M750 360 C752.5 357.5 760.0 350.0 765 345 C770.0 340.0 777.5 332.5 780 330" fill="none" stroke="#cdd5e1" stroke-width="3.0" stroke-linecap="round" stroke-linejoin="round" />
<path d="M815 482 C820.8 481.2 839.2 479.8 850 477 C860.8 474.2 869.2 469.5 880 465 C890.8 460.5 905.0 454.2 915 450 C925.0 445.8 935.8 441.7 940 440" fill="none" stroke="#cdd5e1" stroke-width="2.6" stroke-linecap="round" stroke-linejoin="round" />
<path d="M817 515 C822.5 514.2 839.5 511.7 850 510 C860.5 508.3 870.0 506.7 880 505 C890.0 503.3 905.0 500.8 910 500" fill="none" stroke="#cdd5e1" stroke-width="3.0" stroke-linecap="round" stroke-linejoin="round" />
<path d="M955 490 C956.7 492.5 961.7 500.0 965 505 C968.3 510.0 973.3 517.5 975 520" fill="none" stroke="#cdd5e1" stroke-width="3.0" stroke-linecap="round" stroke-linejoin="round" />
<path d="M760 545 C762.5 543.3 769.3 537.5 775 535 C780.7 532.5 786.5 530.0 794 530 C801.5 530.0 810.7 533.0 820 535 C829.3 537.0 841.7 540.7 850 542 C858.3 543.3 865.0 545.0 870 543 C875.0 541.0 876.2 533.8 880 530 C883.8 526.2 886.3 522.3 893 520 C899.7 517.7 912.2 516.2 920 516 C927.8 515.8 935.0 518.0 940 519 C945.0 520.0 945.8 524.3 950 522 C954.2 519.7 959.2 511.2 965 505 C970.8 498.8 978.3 491.5 985 485 C991.7 478.5 996.7 472.2 1005 466 C1013.3 459.8 1027.5 452.7 1035 448 C1042.5 443.3 1047.5 439.7 1050 438" fill="none" stroke="#8e9fba" stroke-width="4.2" stroke-linecap="round" stroke-linejoin="round" />
<path d="M870 580 C875.0 577.7 890.0 570.5 900 566 C910.0 561.5 917.5 559.5 930 553 C942.5 546.5 963.3 532.0 975 527 C986.7 522.0 995.8 523.7 1000 523" fill="none" stroke="#cdd5e1" stroke-width="2.2" stroke-linecap="round" stroke-linejoin="round" />
<path d="M750 604 C756.7 602.3 776.7 597.2 790 594 C803.3 590.8 818.3 587.7 830 585 C841.7 582.3 855.0 579.2 860 578" fill="none" stroke="#cdd5e1" stroke-width="2" stroke-linecap="round" stroke-linejoin="round" />
<path d="M750 663 C756.7 662.5 778.3 662.2 790 660 C801.7 657.8 812.0 653.3 820 650 C828.0 646.7 835.0 641.7 838 640" fill="none" stroke="#cdd5e1" stroke-width="2.2" stroke-linecap="round" stroke-linejoin="round" />
<path d="M770 741 C776.7 738.8 796.7 731.8 810 728 C823.3 724.2 835.0 720.7 850 718 C865.0 715.3 885.0 713.3 900 712 C915.0 710.7 926.7 710.2 940 710 C953.3 709.8 965.0 710.5 980 710.5 C995.0 710.5 1010.0 710.4 1030 710 C1050.0 709.6 1080.0 708.3 1100 708 C1120.0 707.7 1135.0 708.5 1150 708 C1165.0 707.5 1179.3 706.7 1190 705 C1200.7 703.3 1210.0 699.2 1214 698" fill="none" stroke="#8e9fba" stroke-width="6" stroke-linecap="round" stroke-linejoin="round" />
<path d="M770 741 C776.7 738.8 796.7 731.8 810 728 C823.3 724.2 835.0 720.7 850 718 C865.0 715.3 885.0 713.3 900 712 C915.0 710.7 926.7 710.2 940 710 C953.3 709.8 965.0 710.5 980 710.5 C995.0 710.5 1010.0 710.4 1030 710 C1050.0 709.6 1080.0 708.3 1100 708 C1120.0 707.7 1135.0 708.5 1150 708 C1165.0 707.5 1179.3 706.7 1190 705 C1200.7 703.3 1210.0 699.2 1214 698" fill="none" stroke="#b9c5d8" stroke-width="1" stroke-linecap="round" stroke-linejoin="round" />
<path d="M1140 180 C1135.8 184.2 1120.8 198.3 1115 205 C1109.2 211.7 1110.0 214.2 1105 220 C1100.0 225.8 1092.5 233.3 1085 240 C1077.5 246.7 1064.2 256.7 1060 260" fill="none" stroke="#cdd5e1" stroke-width="2.6" stroke-linecap="round" stroke-linejoin="round" />
<path d="M1143.4 230 C1143.4 231.3 1145.5 233.4 1143.4 238 C1141.3 242.6 1134.6 252.2 1130.9 257.8 C1127.2 263.4 1120.8 266.7 1121 271.7 C1121.2 276.7 1130.8 281.1 1132 288 C1133.2 294.9 1129.3 306.5 1128 313 C1126.7 319.5 1124.7 324.7 1124 327" fill="none" stroke="#cdd5e1" stroke-width="3" stroke-linecap="round" stroke-linejoin="round" />
<path d="M1110 262 L1121 271.7" fill="none" stroke="#cdd5e1" stroke-width="2.6" stroke-linecap="round" stroke-linejoin="round" />
<path d="M1133 287 C1135.8 288.2 1144.1 291.4 1150 294 C1155.9 296.6 1161.7 299.3 1168.4 302.3 C1175.1 305.3 1182.4 308.7 1190 312 C1197.6 315.3 1210.0 320.3 1214 322" fill="none" stroke="#cdd5e1" stroke-width="2.6" stroke-linecap="round" stroke-linejoin="round" />
<path d="M1138 213 C1140.8 213.1 1149.7 213.0 1155 213.5 C1160.3 214.0 1165.0 215.1 1170 216 C1175.0 216.9 1180.0 219.0 1185 219 C1190.0 219.0 1195.2 218.2 1200 216 C1204.8 213.8 1211.7 207.7 1214 206" fill="none" stroke="#c4cddb" stroke-width="4" stroke-linecap="round" stroke-linejoin="round" />
<path d="M1203.7 218.6 C1204.6 220.5 1207.5 226.3 1209 230 C1210.5 233.7 1212.3 239.2 1213 241" fill="none" stroke="#cdd5e1" stroke-width="3" stroke-linecap="round" stroke-linejoin="round" />
<path d="M1160 181 C1164.2 182.8 1178.3 188.0 1185 192 C1191.7 196.0 1197.5 202.8 1200 205" fill="none" stroke="#cdd5e1" stroke-width="1.8" stroke-linecap="round" stroke-linejoin="round" />
<path d="M891 322 C901.0 312.0 932.7 279.5 951 262 C969.3 244.5 992.7 224.5 1001 217" fill="none" stroke="#cdd5e1" stroke-width="1.6" stroke-linecap="round" stroke-linejoin="round" />
<path d="M913 326 C923.0 316.0 954.7 283.5 973 266 C991.3 248.5 1014.7 228.5 1023 221" fill="none" stroke="#cdd5e1" stroke-width="1.6" stroke-linecap="round" stroke-linejoin="round" />
<path d="M935 330 C945.0 320.0 976.7 287.5 995 270 C1013.3 252.5 1036.7 232.5 1045 225" fill="none" stroke="#cdd5e1" stroke-width="1.6" stroke-linecap="round" stroke-linejoin="round" />
<path d="M957 334 C967.0 324.0 998.7 291.5 1017 274 C1035.3 256.5 1058.7 236.5 1067 229" fill="none" stroke="#cdd5e1" stroke-width="1.6" stroke-linecap="round" stroke-linejoin="round" />
<path d="M979 338 C989.0 328.0 1020.7 295.5 1039 278 C1057.3 260.5 1080.7 240.5 1089 233" fill="none" stroke="#cdd5e1" stroke-width="1.6" stroke-linecap="round" stroke-linejoin="round" />
<path d="M1001 342 C1011.0 332.0 1042.7 299.5 1061 282 C1079.3 264.5 1102.7 244.5 1111 237" fill="none" stroke="#cdd5e1" stroke-width="1.6" stroke-linecap="round" stroke-linejoin="round" />
<path d="M1023 346 C1033.0 336.0 1064.7 303.5 1083 286 C1101.3 268.5 1124.7 248.5 1133 241" fill="none" stroke="#cdd5e1" stroke-width="1.6" stroke-linecap="round" stroke-linejoin="round" />
<path d="M1045 350 C1055.0 340.0 1086.7 307.5 1105 290 C1123.3 272.5 1146.7 252.5 1155 245" fill="none" stroke="#cdd5e1" stroke-width="1.6" stroke-linecap="round" stroke-linejoin="round" />
<path d="M985 250 C992.5 256.7 1015.8 276.7 1030 290 C1044.2 303.3 1063.3 323.3 1070 330" fill="none" stroke="#cdd5e1" stroke-width="1.6" stroke-linecap="round" stroke-linejoin="round" />
<path d="M1003 270 C1010.5 276.7 1034.2 296.7 1048 310 C1061.8 323.3 1079.7 343.3 1086 350" fill="none" stroke="#cdd5e1" stroke-width="1.6" stroke-linecap="round" stroke-linejoin="round" />
<path d="M1021 290 C1028.5 296.7 1052.5 316.7 1066 330 C1079.5 343.3 1096.0 363.3 1102 370" fill="none" stroke="#cdd5e1" stroke-width="1.6" stroke-linecap="round" stroke-linejoin="round" />
<path d="M1039 310 C1046.5 316.7 1070.8 336.7 1084 350 C1097.2 363.3 1112.3 383.3 1118 390" fill="none" stroke="#cdd5e1" stroke-width="1.6" stroke-linecap="round" stroke-linejoin="round" />
<path d="M1057 330 C1064.5 336.7 1089.2 356.7 1102 370 C1114.8 383.3 1128.7 403.3 1134 410" fill="none" stroke="#cdd5e1" stroke-width="1.6" stroke-linecap="round" stroke-linejoin="round" />
<path d="M970 335 C975.0 337.5 992.5 345.8 1000 350 C1007.5 354.2 1010.8 355.0 1015 360 C1019.2 365.0 1021.7 373.3 1025 380 C1028.3 386.7 1031.7 394.2 1035 400 C1038.3 405.8 1042.5 408.7 1045 415 C1047.5 421.3 1049.2 434.2 1050 438" fill="none" stroke="#8e9fba" stroke-width="3.6" stroke-linecap="round" stroke-linejoin="round" />
<path d="M1015 365 C1018.3 364.2 1027.5 362.8 1035 360 C1042.5 357.2 1055.8 350.0 1060 348" fill="none" stroke="#cdd5e1" stroke-width="3.0" stroke-linecap="round" stroke-linejoin="round" />
<path d="M970 446 C975.0 442.5 990.0 432.7 1000 425 C1010.0 417.3 1020.0 407.5 1030 400 C1040.0 392.5 1055.0 383.3 1060 380" fill="none" stroke="#cdd5e1" stroke-width="2.4" stroke-linecap="round" stroke-linejoin="round" />
<path d="M1115 385 C1116.7 389.2 1120.0 402.5 1125 410 C1130.0 417.5 1138.3 423.7 1145 430 C1151.7 436.3 1158.3 442.2 1165 448 C1171.7 453.8 1176.8 459.7 1185 465 C1193.2 470.3 1209.2 477.5 1214 480" fill="none" stroke="#cdd5e1" stroke-width="2.6" stroke-linecap="round" stroke-linejoin="round" />
<path d="M1124 381 C1130.0 379.3 1149.0 373.8 1160 371 C1171.0 368.2 1181.0 365.8 1190 364 C1199.0 362.2 1210.0 360.7 1214 360" fill="none" stroke="#8e9fba" stroke-width="3" stroke-linecap="round" stroke-linejoin="round" />
<path d="M1180 330 C1180.8 336.7 1181.7 359.2 1185 370 C1188.3 380.8 1195.2 390.0 1200 395 C1204.8 400.0 1211.7 399.2 1214 400" fill="none" stroke="#cdd5e1" stroke-width="1.8" stroke-linecap="round" stroke-linejoin="round" />
<path d="M1165 300 C1168.3 303.3 1176.8 312.5 1185 320 C1193.2 327.5 1209.2 340.8 1214 345" fill="none" stroke="#cdd5e1" stroke-width="1.5" stroke-linecap="round" stroke-linejoin="round" />
<path d="M1072 478 C1074.2 480.0 1082.3 483.0 1085 490 C1087.7 497.0 1087.2 510.0 1088 520 C1088.8 530.0 1090.3 541.7 1090 550 C1089.7 558.3 1087.3 558.7 1086 570 C1084.7 581.3 1083.8 603.0 1082 618 C1080.2 633.0 1076.7 646.3 1075 660 C1073.3 673.7 1071.5 686.5 1072 700 C1072.5 713.5 1077.0 734.2 1078 741" fill="none" stroke="#8e9fba" stroke-width="3.4" stroke-linecap="round" stroke-linejoin="round" />
<path d="M975 528 C982.5 527.2 999.2 524.1 1020 523 C1040.8 521.9 1067.7 522.0 1100 521.5 C1132.3 521.0 1195.0 520.2 1214 520" fill="none" stroke="#c4cddb" stroke-width="2.8" stroke-linecap="round" stroke-linejoin="round" />
<path d="M970 520 C970.8 524.2 972.5 535.0 975 545 C977.5 555.0 982.8 565.8 985 580 C987.2 594.2 987.5 610.0 988 630 C988.5 650.0 988.0 688.3 988 700" fill="none" stroke="#cdd5e1" stroke-width="2.2" stroke-linecap="round" stroke-linejoin="round" />
<path d="M986 628 C988.3 626.7 994.3 622.7 1000 620 C1005.7 617.3 1012.5 614.0 1020 612 C1027.5 610.0 1037.8 608.3 1045 608 C1052.2 607.7 1051.8 608.3 1063 610 C1074.2 611.7 1095.8 615.0 1112 618 C1128.2 621.0 1143.0 624.3 1160 628 C1177.0 631.7 1205.0 638.0 1214 640" fill="none" stroke="#cdd5e1" stroke-width="2.8" stroke-linecap="round" stroke-linejoin="round" />
<path d="M1190 570 C1190.3 578.3 1192.3 605.0 1192 620 C1191.7 635.0 1188.7 653.3 1188 660" fill="none" stroke="#cdd5e1" stroke-width="1.8" stroke-linecap="round" stroke-linejoin="round" />
</g>
<text x="346" y="192.5" font-size="9.4" fill="#5f7284" textLength="84" lengthAdjust="spacingAndGlyphs" paint-order="stroke" stroke="#fff" stroke-width="2.2" stroke-linejoin="round">Chú Béo BBQ Buffet</text>
<g transform="translate(442 189.5)" opacity="1"><path d="M0 10.600L-5.700 5.800A8.100 8.100 0 1 1 5.700 5.800z" fill="#fff" stroke="#fff" stroke-width=".8" stroke-linejoin="round" style="filter:drop-shadow(0 .7px .6px rgba(0,0,0,.35))"/><circle r="7.100" fill="#6f8594"/><g transform="scale(1.250)"><circle r="2.300" fill="#fff"/></g></g>
<g transform="translate(317 189)" opacity="1"><rect x="-5.200" y="-5.600" width="10.400" height="11.200" rx="3.600" fill="#fff" style="filter:drop-shadow(0 .6px .5px rgba(0,0,0,.3))"/><rect x="-4.150" y="-4.550" width="8.300" height="9.100" rx="2.800" fill="#14375a"/><path d="M-2.200 2.400v-3.400q0-1.700 2.200-1.700t2.200 1.700v3.400h-1.100l-.35-.8h-1.500l-.35.8z" fill="#fff"/><path d="M-1.400-1.300h2.800" stroke="#14375a" stroke-width=".9" stroke-linecap="round"/></g>
<g transform="translate(479 180.5)" opacity="1"><rect x="-5.200" y="-5.600" width="10.400" height="11.200" rx="3.600" fill="#fff" style="filter:drop-shadow(0 .6px .5px rgba(0,0,0,.3))"/><rect x="-4.150" y="-4.550" width="8.300" height="9.100" rx="2.800" fill="#14375a"/><path d="M-2.200 2.400v-3.400q0-1.700 2.200-1.700t2.200 1.700v3.400h-1.100l-.35-.8h-1.500l-.35.8z" fill="#fff"/><path d="M-1.400-1.300h2.800" stroke="#14375a" stroke-width=".9" stroke-linecap="round"/></g>
<text x="452" y="232" font-size="9.2" fill="#1a73e8" text-anchor="end" textLength="65" lengthAdjust="spacingAndGlyphs" paint-order="stroke" stroke="#fff" stroke-width="2.2" stroke-linejoin="round">CỬA HÀNG VẢI</text>
<text x="452" y="241.5" font-size="9.2" fill="#1a73e8" text-anchor="end" textLength="56" lengthAdjust="spacingAndGlyphs" paint-order="stroke" stroke="#fff" stroke-width="2.2" stroke-linejoin="round">KHÁNH LINH</text>
<text x="452" y="249.8" font-size="7.8" fill="#1a73e8" text-anchor="end" textLength="29" lengthAdjust="spacingAndGlyphs" paint-order="stroke" stroke="#fff" stroke-width="2.2" stroke-linejoin="round">원단 가게</text>
<g transform="translate(462 236)" opacity="1"><path d="M0 10.600L-5.700 5.800A8.100 8.100 0 1 1 5.700 5.800z" fill="#fff" stroke="#fff" stroke-width=".8" stroke-linejoin="round" style="filter:drop-shadow(0 .7px .6px rgba(0,0,0,.35))"/><circle r="7.100" fill="#1a8cf0"/><g transform="scale(1.250)"><path d="M-2.700-1h5.400l.4 4.200h-6.200zM-1.400-1v-.8a1.400 1.400 0 0 1 2.800 0v.8h-.700v-.8a.7.700 0 0 0-1.400 0v.8z" fill="#fff"/><circle cy="1.200" r=".7" fill="#1a73e8"/></g></g>
<text x="501" y="220" font-size="9.9" fill="#1a73e8" textLength="52" lengthAdjust="spacingAndGlyphs" paint-order="stroke" stroke="#fff" stroke-width="2.2" stroke-linejoin="round">Cầm Đồ 206</text>
<text x="503" y="228.5" font-size="7.8" fill="#1a73e8" textLength="20" lengthAdjust="spacingAndGlyphs" paint-order="stroke" stroke="#fff" stroke-width="2.2" stroke-linejoin="round">전당포</text>
<g transform="translate(492 219)" opacity="1"><path d="M0 10.600L-5.700 5.800A8.100 8.100 0 1 1 5.700 5.800z" fill="#fff" stroke="#fff" stroke-width=".8" stroke-linejoin="round" style="filter:drop-shadow(0 .7px .6px rgba(0,0,0,.35))"/><circle r="7.100" fill="#1a8cf0"/><g transform="scale(1.250)"><path d="M-2.700-1h5.400l.4 4.200h-6.200zM-1.400-1v-.8a1.400 1.400 0 0 1 2.800 0v.8h-.700v-.8a.7.700 0 0 0-1.400 0v.8z" fill="#fff"/><circle cy="1.200" r=".7" fill="#1a73e8"/></g></g>
<text x="312" y="236.5" font-size="6.8" fill="#4a4f57" font-weight="700" textLength="21" lengthAdjust="spacingAndGlyphs" paint-order="stroke" stroke="#fff" stroke-width="2" stroke-linejoin="round">HƯNG</text>
<text x="312" y="243.7" font-size="6.8" fill="#4a4f57" font-weight="700" textLength="12" lengthAdjust="spacingAndGlyphs" paint-order="stroke" stroke="#fff" stroke-width="2" stroke-linejoin="round">A A</text>
<text x="311" y="292" font-size="7.6" fill="#3a3f45" font-weight="700" textLength="19" lengthAdjust="spacingAndGlyphs" paint-order="stroke" stroke="#fff" stroke-width="2" stroke-linejoin="round">Ố 11</text>
<text x="313" y="304" font-size="9.9" fill="#dd6b14" textLength="25" lengthAdjust="spacingAndGlyphs" paint-order="stroke" stroke="#fff" stroke-width="2.2" stroke-linejoin="round">Như Ý</text>
<g transform="translate(348 299.5)" opacity="1"><path d="M0 10.600L-5.700 5.800A8.100 8.100 0 1 1 5.700 5.800z" fill="#fff" stroke="#fff" stroke-width=".8" stroke-linejoin="round" style="filter:drop-shadow(0 .7px .6px rgba(0,0,0,.35))"/><circle r="7.100" fill="#fa6b10"/><g transform="scale(1.250)"><path d="M-2.6-3.2v2.3q0 1 .9 1.2v3h.9v-3q.9-.2.9-1.200v-2.300h-.6v2.100h-.5v-2.100h-.6v2.100h-.5v-2.100zM1.300-3.200q1.500.300 1.500 2.300v1.400h-.7v2.800h-.800z" fill="#fff"/></g></g>
<text x="369" y="296" font-size="8.4" fill="#3f464e" text-anchor="middle" transform="rotate(-76 369 296)" textLength="30" lengthAdjust="spacingAndGlyphs" paint-order="stroke" stroke="#fff" stroke-width="2" stroke-linejoin="round">Đ. số 14</text>
<text x="473" y="266.5" font-size="8.4" fill="#3f464e" text-anchor="middle" transform="rotate(21 473 266.5)" textLength="42" lengthAdjust="spacingAndGlyphs" paint-order="stroke" stroke="#fff" stroke-width="2" stroke-linejoin="round">Nguyễn Sơn</text>
<text x="535.5" y="300" font-size="8.4" fill="#3f464e" text-anchor="middle" transform="rotate(-27 535.5 300)" textLength="60" lengthAdjust="spacingAndGlyphs" paint-order="stroke" stroke="#fff" stroke-width="2" stroke-linejoin="round">Thoại Ngọc Hầu</text>
<g transform="translate(501 281)" opacity="1"><rect x="-5.200" y="-5.600" width="10.400" height="11.200" rx="3.600" fill="#fff" style="filter:drop-shadow(0 .6px .5px rgba(0,0,0,.3))"/><rect x="-4.150" y="-4.550" width="8.300" height="9.100" rx="2.800" fill="#14375a"/><path d="M-2.200 2.400v-3.400q0-1.700 2.200-1.700t2.200 1.700v3.400h-1.100l-.35-.8h-1.500l-.35.8z" fill="#fff"/><path d="M-1.400-1.300h2.800" stroke="#14375a" stroke-width=".9" stroke-linecap="round"/></g>
<text x="311" y="326.5" font-size="9.9" fill="#1e8e5a" textLength="81" lengthAdjust="spacingAndGlyphs" paint-order="stroke" stroke="#fff" stroke-width="2.2" stroke-linejoin="round">NH MINH - Sân Cầu</text>
<text x="311" y="336.3" font-size="9.9" fill="#1e8e5a" textLength="70" lengthAdjust="spacingAndGlyphs" paint-order="stroke" stroke="#fff" stroke-width="2.2" stroke-linejoin="round">ng &amp; Huấn Luyện</text>
<text x="311" y="344.3" font-size="7.8" fill="#1e8e5a" textLength="24" lengthAdjust="spacingAndGlyphs" paint-order="stroke" stroke="#fff" stroke-width="2.2" stroke-linejoin="round">드민턴장</text>
<g transform="translate(421 336)" opacity="1"><rect x="-5.200" y="-5.600" width="10.400" height="11.200" rx="3.600" fill="#fff" style="filter:drop-shadow(0 .6px .5px rgba(0,0,0,.3))"/><rect x="-4.150" y="-4.550" width="8.300" height="9.100" rx="2.800" fill="#14375a"/><path d="M-2.200 2.400v-3.400q0-1.700 2.200-1.700t2.200 1.700v3.400h-1.100l-.35-.8h-1.500l-.35.8z" fill="#fff"/><path d="M-1.400-1.300h2.800" stroke="#14375a" stroke-width=".9" stroke-linecap="round"/></g>
<g transform="translate(414 358)" opacity="1"><rect x="-5.200" y="-5.600" width="10.400" height="11.200" rx="3.600" fill="#fff" style="filter:drop-shadow(0 .6px .5px rgba(0,0,0,.3))"/><rect x="-4.150" y="-4.550" width="8.300" height="9.100" rx="2.800" fill="#14375a"/><path d="M-2.200 2.400v-3.400q0-1.700 2.200-1.700t2.200 1.700v3.400h-1.100l-.35-.8h-1.500l-.35.8z" fill="#fff"/><path d="M-1.400-1.300h2.800" stroke="#14375a" stroke-width=".9" stroke-linecap="round"/></g>
<g transform="translate(418 412)" opacity="1"><rect x="-5.200" y="-5.600" width="10.400" height="11.200" rx="3.600" fill="#fff" style="filter:drop-shadow(0 .6px .5px rgba(0,0,0,.3))"/><rect x="-4.150" y="-4.550" width="8.300" height="9.100" rx="2.800" fill="#14375a"/><path d="M-2.200 2.400v-3.400q0-1.700 2.200-1.700t2.200 1.700v3.400h-1.100l-.35-.8h-1.500l-.35.8z" fill="#fff"/><path d="M-1.400-1.300h2.800" stroke="#14375a" stroke-width=".9" stroke-linecap="round"/></g>
<text x="463" y="340.3" font-size="9.9" fill="#dd6b14" textLength="69.5" lengthAdjust="spacingAndGlyphs" paint-order="stroke" stroke="#fff" stroke-width="2.2" stroke-linejoin="round">Panda Grill Zone</text>
<text x="463" y="348.3" font-size="7.8" fill="#dd6b14" textLength="71" lengthAdjust="spacingAndGlyphs" paint-order="stroke" stroke="#fff" stroke-width="2.2" stroke-linejoin="round">숯불구이/바베큐전문점</text>
<g transform="translate(452 338)" opacity="1"><path d="M0 10.600L-5.700 5.800A8.100 8.100 0 1 1 5.700 5.800z" fill="#fff" stroke="#fff" stroke-width=".8" stroke-linejoin="round" style="filter:drop-shadow(0 .7px .6px rgba(0,0,0,.35))"/><circle r="7.100" fill="#fa6b10"/><g transform="scale(1.250)"><path d="M-2.6-3.2v2.3q0 1 .9 1.2v3h.9v-3q.9-.2.9-1.200v-2.300h-.6v2.100h-.5v-2.100h-.6v2.100h-.5v-2.100zM1.300-3.200q1.500.300 1.500 2.300v1.400h-.7v2.800h-.800z" fill="#fff"/></g></g>
<text x="313" y="367.3" font-size="9.9" fill="#dd6b14" textLength="61" lengthAdjust="spacingAndGlyphs" paint-order="stroke" stroke="#fff" stroke-width="2.2" stroke-linejoin="round">nhậu Sơn Tinh</text>
<g transform="translate(385 362)" opacity="1"><path d="M0 10.600L-5.700 5.800A8.100 8.100 0 1 1 5.700 5.800z" fill="#fff" stroke="#fff" stroke-width=".8" stroke-linejoin="round" style="filter:drop-shadow(0 .7px .6px rgba(0,0,0,.35))"/><circle r="7.100" fill="#fa6b10"/><g transform="scale(1.250)"><path d="M-2.6-3.2v2.3q0 1 .9 1.2v3h.9v-3q.9-.2.9-1.200v-2.300h-.6v2.100h-.5v-2.100h-.6v2.100h-.5v-2.100zM1.300-3.200q1.500.300 1.500 2.300v1.400h-.7v2.800h-.800z" fill="#fff"/></g></g>
<text x="380" y="399" font-size="7.6" fill="#3a3f45" text-anchor="middle" font-weight="700" textLength="49" lengthAdjust="spacingAndGlyphs" paint-order="stroke" stroke="#fff" stroke-width="2" stroke-linejoin="round">KHU PHỐ 6</text>
<text x="311" y="411" font-size="9.9" fill="#d83b4b" textLength="74" lengthAdjust="spacingAndGlyphs" paint-order="stroke" stroke="#fff" stroke-width="2.2" stroke-linejoin="round">Binh Tan Hospital</text>
<text x="311" y="419" font-size="7.8" fill="#d83b4b" textLength="26" lengthAdjust="spacingAndGlyphs" paint-order="stroke" stroke="#fff" stroke-width="2.2" stroke-linejoin="round">종합병원</text>
<text x="311" y="437.3" font-size="9.9" fill="#5f7284" textLength="34" lengthAdjust="spacingAndGlyphs" paint-order="stroke" stroke="#fff" stroke-width="2.2" stroke-linejoin="round">Vietnam</text>
<text x="311" y="447.3" font-size="9.9" fill="#5f7284" textLength="32" lengthAdjust="spacingAndGlyphs" paint-order="stroke" stroke="#fff" stroke-width="2.2" stroke-linejoin="round">porter...</text>
<g transform="translate(353 437)" opacity="1"><path d="M0 10.600L-5.700 5.800A8.100 8.100 0 1 1 5.700 5.800z" fill="#fff" stroke="#fff" stroke-width=".8" stroke-linejoin="round" style="filter:drop-shadow(0 .7px .6px rgba(0,0,0,.35))"/><circle r="7.100" fill="#6f8594"/><g transform="scale(1.250)"><circle r="2.300" fill="#fff"/></g></g>
<text x="517" y="369.5" font-size="8.4" fill="#3f464e" text-anchor="middle" transform="rotate(16 517 369.5)" textLength="40" lengthAdjust="spacingAndGlyphs" paint-order="stroke" stroke="#fff" stroke-width="2" stroke-linejoin="round">Đ. Hòa Bình</text>
<text x="458.5" y="412" font-size="8.4" fill="#3f464e" text-anchor="middle" transform="rotate(77 458.5 412)" textLength="43" lengthAdjust="spacingAndGlyphs" paint-order="stroke" stroke="#fff" stroke-width="2" stroke-linejoin="round">Đ. Phan Anh</text>
<text x="530.5" y="420" font-size="8.4" fill="#3f464e" text-anchor="middle" transform="rotate(86 530.5 420)" textLength="55" lengthAdjust="spacingAndGlyphs" paint-order="stroke" stroke="#fff" stroke-width="2" stroke-linejoin="round">Đ. Lũy Bán Bích</text>
<rect x="313.25" y="469.8" width="19.5" height="8.400" rx="1" fill="#2f6fd0"/>
<text x="323" y="476.5" font-size="6.6" fill="#fff" text-anchor="middle" font-weight="700" textLength="15.5" lengthAdjust="spacingAndGlyphs">DT10</text>
<g transform="translate(342 471)" opacity="1"><rect x="-5.200" y="-5.600" width="10.400" height="11.200" rx="3.600" fill="#fff" style="filter:drop-shadow(0 .6px .5px rgba(0,0,0,.3))"/><rect x="-4.150" y="-4.550" width="8.300" height="9.100" rx="2.800" fill="#14375a"/><path d="M-2.200 2.400v-3.400q0-1.700 2.200-1.700t2.200 1.700v3.400h-1.100l-.35-.8h-1.500l-.35.8z" fill="#fff"/><path d="M-1.400-1.300h2.800" stroke="#14375a" stroke-width=".9" stroke-linecap="round"/></g>
<g transform="translate(377 470)" opacity="1"><rect x="-5.200" y="-5.600" width="10.400" height="11.200" rx="3.600" fill="#fff" style="filter:drop-shadow(0 .6px .5px rgba(0,0,0,.3))"/><rect x="-4.150" y="-4.550" width="8.300" height="9.100" rx="2.800" fill="#14375a"/><path d="M-2.200 2.400v-3.400q0-1.700 2.200-1.700t2.200 1.700v3.400h-1.100l-.35-.8h-1.500l-.35.8z" fill="#fff"/><path d="M-1.400-1.300h2.800" stroke="#14375a" stroke-width=".9" stroke-linecap="round"/></g>
<g transform="translate(411.5 478)" opacity="1"><rect x="-5.200" y="-5.600" width="10.400" height="11.200" rx="3.600" fill="#fff" style="filter:drop-shadow(0 .6px .5px rgba(0,0,0,.3))"/><rect x="-4.150" y="-4.550" width="8.300" height="9.100" rx="2.800" fill="#14375a"/><path d="M-2.200 2.400v-3.400q0-1.700 2.200-1.700t2.200 1.700v3.400h-1.100l-.35-.8h-1.500l-.35.8z" fill="#fff"/><path d="M-1.400-1.300h2.800" stroke="#14375a" stroke-width=".9" stroke-linecap="round"/></g>
<g transform="translate(322 489)" opacity="1"><rect x="-5.200" y="-5.600" width="10.400" height="11.200" rx="3.600" fill="#fff" style="filter:drop-shadow(0 .6px .5px rgba(0,0,0,.3))"/><rect x="-4.150" y="-4.550" width="8.300" height="9.100" rx="2.800" fill="#14375a"/><path d="M-2.200 2.400v-3.400q0-1.700 2.200-1.700t2.200 1.700v3.400h-1.100l-.35-.8h-1.500l-.35.8z" fill="#fff"/><path d="M-1.400-1.300h2.800" stroke="#14375a" stroke-width=".9" stroke-linecap="round"/></g>
<g transform="translate(339 494)" opacity="1"><rect x="-5.200" y="-5.600" width="10.400" height="11.200" rx="3.600" fill="#fff" style="filter:drop-shadow(0 .6px .5px rgba(0,0,0,.3))"/><rect x="-4.150" y="-4.550" width="8.300" height="9.100" rx="2.800" fill="#14375a"/><path d="M-2.200 2.400v-3.400q0-1.700 2.200-1.700t2.200 1.700v3.400h-1.100l-.35-.8h-1.500l-.35.8z" fill="#fff"/><path d="M-1.400-1.300h2.800" stroke="#14375a" stroke-width=".9" stroke-linecap="round"/></g>
<g transform="translate(498.5 459)" opacity="1"><rect x="-5.200" y="-5.600" width="10.400" height="11.200" rx="3.600" fill="#fff" style="filter:drop-shadow(0 .6px .5px rgba(0,0,0,.3))"/><rect x="-4.150" y="-4.550" width="8.300" height="9.100" rx="2.800" fill="#14375a"/><path d="M-2.200 2.400v-3.400q0-1.700 2.200-1.700t2.200 1.700v3.400h-1.100l-.35-.8h-1.500l-.35.8z" fill="#fff"/><path d="M-1.400-1.300h2.800" stroke="#14375a" stroke-width=".9" stroke-linecap="round"/></g>
<g transform="translate(538 458)" opacity="1"><rect x="-5.200" y="-5.600" width="10.400" height="11.200" rx="3.600" fill="#fff" style="filter:drop-shadow(0 .6px .5px rgba(0,0,0,.3))"/><rect x="-4.150" y="-4.550" width="8.300" height="9.100" rx="2.800" fill="#14375a"/><path d="M-2.200 2.400v-3.400q0-1.700 2.200-1.700t2.200 1.700v3.400h-1.100l-.35-.8h-1.500l-.35.8z" fill="#fff"/><path d="M-1.400-1.300h2.800" stroke="#14375a" stroke-width=".9" stroke-linecap="round"/></g>
<text x="311" y="513.3" font-size="9.9" fill="#dd6b14" textLength="57" lengthAdjust="spacingAndGlyphs" paint-order="stroke" stroke="#fff" stroke-width="2.2" stroke-linejoin="round">ng Koi Coffee</text>
<g transform="translate(379 508)" opacity="1"><path d="M0 10.600L-5.700 5.800A8.100 8.100 0 1 1 5.700 5.800z" fill="#fff" stroke="#fff" stroke-width=".8" stroke-linejoin="round" style="filter:drop-shadow(0 .7px .6px rgba(0,0,0,.35))"/><circle r="7.100" fill="#fa6b10"/><g transform="scale(1.250)"><path d="M-3-2.200h4.600v.5h.8q.9 0 .9.900t-.9.900h-.9q-.3 1.300-1.400 1.300h-1.600q-1.500 0-1.500-1.800zM1.600-1.100v1h.7q.4 0 .4-.5t-.4-.500zM-3.200 2.200h5.200v.7h-5.200z" fill="#fff"/></g></g>
<text x="411" y="507" font-size="9.9" fill="#5f7284" textLength="72" lengthAdjust="spacingAndGlyphs" paint-order="stroke" stroke="#fff" stroke-width="2.2" stroke-linejoin="round">St. Paul's Church</text>
<text x="411" y="515.5" font-size="7.8" fill="#5f7284" textLength="36" lengthAdjust="spacingAndGlyphs" paint-order="stroke" stroke="#fff" stroke-width="2.2" stroke-linejoin="round">천주교 성당</text>
<g transform="translate(400 506)" opacity="1"><path d="M0 10.600L-5.700 5.800A8.100 8.100 0 1 1 5.700 5.800z" fill="#fff" stroke="#fff" stroke-width=".8" stroke-linejoin="round" style="filter:drop-shadow(0 .7px .6px rgba(0,0,0,.35))"/><circle r="7.100" fill="#6f8594"/><g transform="scale(1.250)"><path d="M-.6-3.400h1.200v1.900h1.800v1.200h-1.800v3.700h-1.200v-3.700h-1.800v-1.200h1.800z" fill="#fff"/></g></g>
<text x="431" y="525.5" font-size="8.4" fill="#3f464e" text-anchor="middle" transform="rotate(1 431 525.5)" textLength="37" lengthAdjust="spacingAndGlyphs" paint-order="stroke" stroke="#fff" stroke-width="2" stroke-linejoin="round">Đường số 7</text>
<text x="509" y="518" font-size="9.9" fill="#8d4fe6" textLength="52" lengthAdjust="spacingAndGlyphs" paint-order="stroke" stroke="#fff" stroke-width="2.2" stroke-linejoin="round">Galaxy Kinh</text>
<text x="509" y="527.5" font-size="9.9" fill="#8d4fe6" textLength="56" lengthAdjust="spacingAndGlyphs" paint-order="stroke" stroke="#fff" stroke-width="2.2" stroke-linejoin="round">Duong Vuong</text>
<text x="509" y="535.5" font-size="7.8" fill="#8d4fe6" textLength="20" lengthAdjust="spacingAndGlyphs" paint-order="stroke" stroke="#fff" stroke-width="2.2" stroke-linejoin="round">영화관</text>
<g transform="translate(498 520)" opacity="1"><path d="M0 10.600L-5.700 5.800A8.100 8.100 0 1 1 5.700 5.800z" fill="#fff" stroke="#fff" stroke-width=".8" stroke-linejoin="round" style="filter:drop-shadow(0 .7px .6px rgba(0,0,0,.35))"/><circle r="7.100" fill="#9b5cf0"/><g transform="scale(1.250)"><rect x="-2.900" y="-3" width="5.800" height="6" rx=".8" fill="#fff"/><path d="M-1.600-1.900h3.200v1.500h-3.200zM-1.600.4h3.200v1.500h-3.200z" fill="#9b5cf0"/></g></g>
<text x="471" y="552" font-size="9.9" fill="#1e8e5a" text-anchor="middle" textLength="37" lengthAdjust="spacingAndGlyphs" paint-order="stroke" stroke="#fff" stroke-width="2.2" stroke-linejoin="round">푸람 파크</text>
<text x="471" y="561.5" font-size="8.2" fill="#1e8e5a" text-anchor="middle" textLength="34" lengthAdjust="spacingAndGlyphs" paint-order="stroke" stroke="#fff" stroke-width="2.2" stroke-linejoin="round">Công viên</text>
<text x="471" y="569.3" font-size="8.2" fill="#1e8e5a" text-anchor="middle" textLength="30" lengthAdjust="spacingAndGlyphs" paint-order="stroke" stroke="#fff" stroke-width="2.2" stroke-linejoin="round">Phú Lâm</text>
<text x="369" y="551.3" font-size="7.4" fill="#6a6f77" text-anchor="middle" textLength="33" lengthAdjust="spacingAndGlyphs" paint-order="stroke" stroke="#fff" stroke-width="2" stroke-linejoin="round">BINH TRI</text>
<text x="369" y="551.3" font-size="7.4" fill="#6a6f77" stroke="#6a6f77" stroke-width=".28" text-anchor="middle" textLength="33" lengthAdjust="spacingAndGlyphs">BINH TRI</text>
<text x="369" y="558.5" font-size="7.4" fill="#6a6f77" text-anchor="middle" textLength="28" lengthAdjust="spacingAndGlyphs" paint-order="stroke" stroke="#fff" stroke-width="2" stroke-linejoin="round">DONG B</text>
<text x="369" y="558.5" font-size="7.4" fill="#6a6f77" stroke="#6a6f77" stroke-width=".28" text-anchor="middle" textLength="28" lengthAdjust="spacingAndGlyphs">DONG B</text>
<text x="368" y="569" font-size="7.6" fill="#3a3f45" text-anchor="middle" font-weight="700" textLength="54" lengthAdjust="spacingAndGlyphs" paint-order="stroke" stroke="#fff" stroke-width="2" stroke-linejoin="round">KHU AO SEN</text>
<text x="520" y="498.5" font-size="8.4" fill="#3f464e" text-anchor="middle" transform="rotate(11 520 498.5)" textLength="26" lengthAdjust="spacingAndGlyphs" paint-order="stroke" stroke="#fff" stroke-width="2" stroke-linejoin="round">Bà Hom</text>
<text x="527" y="479" font-size="8.4" fill="#3f464e" text-anchor="middle" transform="rotate(52 527 479)" textLength="46" lengthAdjust="spacingAndGlyphs" paint-order="stroke" stroke="#fff" stroke-width="2" stroke-linejoin="round">Tân Hòa Đông</text>
<text x="524" y="562" font-size="8.4" fill="#3f464e" text-anchor="middle" transform="rotate(-13 524 562)" textLength="44" lengthAdjust="spacingAndGlyphs" paint-order="stroke" stroke="#fff" stroke-width="2" stroke-linejoin="round">Đ. Hậu Giang</text>
<g transform="translate(336 581)" opacity="1"><rect x="-5.200" y="-5.600" width="10.400" height="11.200" rx="3.600" fill="#fff" style="filter:drop-shadow(0 .6px .5px rgba(0,0,0,.3))"/><rect x="-4.150" y="-4.550" width="8.300" height="9.100" rx="2.800" fill="#14375a"/><path d="M-2.200 2.400v-3.400q0-1.700 2.200-1.700t2.200 1.700v3.400h-1.100l-.35-.8h-1.500l-.35.8z" fill="#fff"/><path d="M-1.400-1.300h2.800" stroke="#14375a" stroke-width=".9" stroke-linecap="round"/></g>
<g transform="translate(393 636)" opacity="1"><rect x="-5.200" y="-5.600" width="10.400" height="11.200" rx="3.600" fill="#fff" style="filter:drop-shadow(0 .6px .5px rgba(0,0,0,.3))"/><rect x="-4.150" y="-4.550" width="8.300" height="9.100" rx="2.800" fill="#14375a"/><path d="M-2.200 2.400v-3.400q0-1.700 2.200-1.700t2.200 1.700v3.400h-1.100l-.35-.8h-1.500l-.35.8z" fill="#fff"/><path d="M-1.400-1.300h2.800" stroke="#14375a" stroke-width=".9" stroke-linecap="round"/></g>
<g transform="translate(449 632)" opacity="1"><rect x="-5.200" y="-5.600" width="10.400" height="11.200" rx="3.600" fill="#fff" style="filter:drop-shadow(0 .6px .5px rgba(0,0,0,.3))"/><rect x="-4.150" y="-4.550" width="8.300" height="9.100" rx="2.800" fill="#14375a"/><path d="M-2.200 2.400v-3.400q0-1.700 2.200-1.700t2.200 1.700v3.400h-1.100l-.35-.8h-1.500l-.35.8z" fill="#fff"/><path d="M-1.400-1.300h2.800" stroke="#14375a" stroke-width=".9" stroke-linecap="round"/></g>
<g transform="translate(494 616)" opacity="1"><rect x="-5.200" y="-5.600" width="10.400" height="11.200" rx="3.600" fill="#fff" style="filter:drop-shadow(0 .6px .5px rgba(0,0,0,.3))"/><rect x="-4.150" y="-4.550" width="8.300" height="9.100" rx="2.800" fill="#14375a"/><path d="M-2.200 2.400v-3.400q0-1.700 2.200-1.700t2.200 1.700v3.400h-1.100l-.35-.8h-1.500l-.35.8z" fill="#fff"/><path d="M-1.400-1.300h2.800" stroke="#14375a" stroke-width=".9" stroke-linecap="round"/></g>
<text x="328" y="603" font-size="9.9" fill="#5f7284" textLength="86" lengthAdjust="spacingAndGlyphs" paint-order="stroke" stroke="#fff" stroke-width="2.2" stroke-linejoin="round">Western Bus Station</text>
<g transform="translate(425 598)" opacity="1"><path d="M0 10.600L-5.700 5.800A8.100 8.100 0 1 1 5.700 5.800z" fill="#fff" stroke="#fff" stroke-width=".8" stroke-linejoin="round" style="filter:drop-shadow(0 .7px .6px rgba(0,0,0,.35))"/><circle r="7.100" fill="#6f8594"/><g transform="scale(1.250)"><circle r="2.300" fill="#fff"/></g></g>
<text x="311" y="612" font-size="7.6" fill="#3a3f45" font-weight="700" paint-order="stroke" stroke="#fff" stroke-width="2" stroke-linejoin="round">5</text>
<text x="311" y="670.5" font-size="7.6" fill="#3a3f45" font-weight="700" textLength="24" lengthAdjust="spacingAndGlyphs" paint-order="stroke" stroke="#fff" stroke-width="2" stroke-linejoin="round">WARD</text>
<text x="491" y="632.5" font-size="7.4" fill="#6a6f77" text-anchor="middle" textLength="42" lengthAdjust="spacingAndGlyphs" paint-order="stroke" stroke="#fff" stroke-width="2" stroke-linejoin="round">PHƯỜNG 10</text>
<text x="491" y="632.5" font-size="7.4" fill="#6a6f77" stroke="#6a6f77" stroke-width=".28" text-anchor="middle" textLength="42" lengthAdjust="spacingAndGlyphs">PHƯỜNG 10</text>
<text x="511.5" y="658.5" font-size="7.6" fill="#3a3f45" text-anchor="middle" font-weight="700" textLength="27" lengthAdjust="spacingAndGlyphs" paint-order="stroke" stroke="#fff" stroke-width="2" stroke-linejoin="round">KHU II</text>
<text x="365" y="678" font-size="8.4" fill="#3f464e" text-anchor="middle" transform="rotate(-52 365 678)" textLength="78" lengthAdjust="spacingAndGlyphs" paint-order="stroke" stroke="#fff" stroke-width="2" stroke-linejoin="round">Đ. Kinh Dương Vương</text>
<text x="368" y="730.5" font-size="7.6" fill="#3a3f45" text-anchor="middle" font-weight="700" textLength="48" lengthAdjust="spacingAndGlyphs" paint-order="stroke" stroke="#fff" stroke-width="2" stroke-linejoin="round">KHU PHỐ 3</text>
<text x="456.5" y="738.5" font-size="7.4" fill="#6a6f77" text-anchor="middle" textLength="43" lengthAdjust="spacingAndGlyphs" paint-order="stroke" stroke="#fff" stroke-width="2" stroke-linejoin="round">PHƯỜNG 16</text>
<text x="456.5" y="738.5" font-size="7.4" fill="#6a6f77" stroke="#6a6f77" stroke-width=".28" text-anchor="middle" textLength="43" lengthAdjust="spacingAndGlyphs">PHƯỜNG 16</text>
<text x="412" y="738" font-size="8.4" fill="#3f464e" text-anchor="middle" transform="rotate(-28 412 738)" textLength="20" lengthAdjust="spacingAndGlyphs" paint-order="stroke" stroke="#fff" stroke-width="2" stroke-linejoin="round">n Kiệt</text>
<text x="317" y="738.300" font-size="12.800" font-weight="400" letter-spacing="-.45" paint-order="stroke" stroke="#fff" stroke-width="1.500"><tspan fill="#4285f4">G</tspan><tspan fill="#ea4335">o</tspan><tspan fill="#fbbc05">o</tspan><tspan fill="#4285f4">g</tspan><tspan fill="#34a853">l</tspan><tspan fill="#ea4335">e</tspan></text>
<text x="611.5" y="185" font-size="7.4" fill="#6a6f77" text-anchor="middle" textLength="43" lengthAdjust="spacingAndGlyphs" paint-order="stroke" stroke="#fff" stroke-width="2" stroke-linejoin="round">PHƯỜNG 14</text>
<text x="611.5" y="185" font-size="7.4" fill="#6a6f77" stroke="#6a6f77" stroke-width=".28" text-anchor="middle" textLength="43" lengthAdjust="spacingAndGlyphs">PHƯỜNG 14</text>
<text x="673.5" y="189" font-size="7.4" fill="#6a6f77" text-anchor="middle" textLength="43" lengthAdjust="spacingAndGlyphs" paint-order="stroke" stroke="#fff" stroke-width="2" stroke-linejoin="round">PHƯỜNG 12</text>
<text x="673.5" y="189" font-size="7.4" fill="#6a6f77" stroke="#6a6f77" stroke-width=".28" text-anchor="middle" textLength="43" lengthAdjust="spacingAndGlyphs">PHƯỜNG 12</text>
<text x="619" y="238.3" font-size="9.9" fill="#1a73e8" textLength="69" lengthAdjust="spacingAndGlyphs" paint-order="stroke" stroke="#fff" stroke-width="2.2" stroke-linejoin="round">Tan Binh Market</text>
<g transform="translate(698 232)" opacity="1"><path d="M0 10.600L-5.700 5.800A8.100 8.100 0 1 1 5.700 5.800z" fill="#fff" stroke="#fff" stroke-width=".8" stroke-linejoin="round" style="filter:drop-shadow(0 .7px .6px rgba(0,0,0,.35))"/><circle r="7.100" fill="#1a8cf0"/><g transform="scale(1.250)"><path d="M-3.600-2.900h1.100l.4.900h4.900l-1.100 2.700h-3.400l-.4.800h4.400v.7h-5.200l.8-1.700-1.500-2.700h-.8z" fill="#fff"/><circle cx="-1.300" cy="3" r=".7" fill="#fff"/><circle cx="1.700" cy="3" r=".7" fill="#fff"/></g></g>
<text x="635.5" y="274.5" font-size="7.4" fill="#6a6f77" text-anchor="middle" textLength="43" lengthAdjust="spacingAndGlyphs" paint-order="stroke" stroke="#fff" stroke-width="2" stroke-linejoin="round">PHƯỜNG 10</text>
<text x="635.5" y="274.5" font-size="7.4" fill="#6a6f77" stroke="#6a6f77" stroke-width=".28" text-anchor="middle" textLength="43" lengthAdjust="spacingAndGlyphs">PHƯỜNG 10</text>
<text x="571" y="309.5" font-size="7.4" fill="#6a6f77" text-anchor="middle" textLength="44" lengthAdjust="spacingAndGlyphs" paint-order="stroke" stroke="#fff" stroke-width="2" stroke-linejoin="round">HÒA THẠNH</text>
<text x="571" y="309.5" font-size="7.4" fill="#6a6f77" stroke="#6a6f77" stroke-width=".28" text-anchor="middle" textLength="44" lengthAdjust="spacingAndGlyphs">HÒA THẠNH</text>
<text x="566" y="232" font-size="8.4" fill="#3f464e" text-anchor="middle" transform="rotate(-85 566 232)" textLength="55" lengthAdjust="spacingAndGlyphs" paint-order="stroke" stroke="#fff" stroke-width="2" stroke-linejoin="round">Đ. Lũy Bán Bích</text>
<text x="676.5" y="268" font-size="8.4" fill="#3f464e" text-anchor="middle" transform="rotate(-81 676.5 268)" textLength="50" lengthAdjust="spacingAndGlyphs" paint-order="stroke" stroke="#fff" stroke-width="2" stroke-linejoin="round">Lạc Long Quân</text>
<text x="713" y="291" font-size="8.4" fill="#3f464e" text-anchor="middle" transform="rotate(76 713 291)" textLength="60" lengthAdjust="spacingAndGlyphs" paint-order="stroke" stroke="#fff" stroke-width="2" stroke-linejoin="round">Đ. Lý Thường Kiệt</text>
<text x="738" y="204" font-size="8.4" fill="#3f464e" text-anchor="middle" transform="rotate(27 738 204)" textLength="52" lengthAdjust="spacingAndGlyphs" paint-order="stroke" stroke="#fff" stroke-width="2" stroke-linejoin="round">Cách Mạng Th</text>
<g transform="translate(722 255)" opacity="1"><rect x="-5.200" y="-5.600" width="10.400" height="11.200" rx="3.600" fill="#fff" style="filter:drop-shadow(0 .6px .5px rgba(0,0,0,.3))"/><rect x="-4.150" y="-4.550" width="8.300" height="9.100" rx="2.800" fill="#14375a"/><path d="M-2.200 2.400v-3.400q0-1.700 2.200-1.700t2.200 1.700v3.400h-1.100l-.35-.8h-1.500l-.35.8z" fill="#fff"/><path d="M-1.400-1.300h2.800" stroke="#14375a" stroke-width=".9" stroke-linecap="round"/></g>
<g transform="translate(671.5 307)" opacity="1"><rect x="-5.200" y="-5.600" width="10.400" height="11.200" rx="3.600" fill="#fff" style="filter:drop-shadow(0 .6px .5px rgba(0,0,0,.3))"/><rect x="-4.150" y="-4.550" width="8.300" height="9.100" rx="2.800" fill="#14375a"/><path d="M-2.200 2.400v-3.400q0-1.700 2.200-1.700t2.200 1.700v3.400h-1.100l-.35-.8h-1.500l-.35.8z" fill="#fff"/><path d="M-1.400-1.300h2.800" stroke="#14375a" stroke-width=".9" stroke-linecap="round"/></g>
<g transform="translate(681 214)" opacity="1"><rect x="-5.200" y="-5.600" width="10.400" height="11.200" rx="3.600" fill="#fff" style="filter:drop-shadow(0 .6px .5px rgba(0,0,0,.3))"/><rect x="-4.150" y="-4.550" width="8.300" height="9.100" rx="2.800" fill="#14375a"/><path d="M-2.200 2.400v-3.400q0-1.700 2.200-1.700t2.200 1.700v3.400h-1.100l-.35-.8h-1.500l-.35.8z" fill="#fff"/><path d="M-1.400-1.300h2.800" stroke="#14375a" stroke-width=".9" stroke-linecap="round"/></g>
<text x="724" y="331.5" font-size="10" fill="#51606e" text-anchor="end" textLength="35" lengthAdjust="spacingAndGlyphs" paint-order="stroke" stroke="#fff" stroke-width="2.2" stroke-linejoin="round">호치민시</text>
<text x="724" y="342" font-size="10" fill="#51606e" text-anchor="end" textLength="43" lengthAdjust="spacingAndGlyphs" paint-order="stroke" stroke="#fff" stroke-width="2.2" stroke-linejoin="round">기술대학교</text>
<text x="724" y="350" font-size="7.4" fill="#7b8794" text-anchor="end" textLength="36" lengthAdjust="spacingAndGlyphs" paint-order="stroke" stroke="#fff" stroke-width="2.2" stroke-linejoin="round">Trường Đại</text>
<text x="724" y="357.5" font-size="7.4" fill="#7b8794" text-anchor="end" textLength="29" lengthAdjust="spacingAndGlyphs" paint-order="stroke" stroke="#fff" stroke-width="2.2" stroke-linejoin="round">học Bách</text>
<text x="724" y="365" font-size="7.4" fill="#7b8794" text-anchor="end" textLength="33" lengthAdjust="spacingAndGlyphs" paint-order="stroke" stroke="#fff" stroke-width="2.2" stroke-linejoin="round">khoa - Đại</text>
<text x="724" y="372.5" font-size="7.4" fill="#7b8794" text-anchor="end" textLength="36" lengthAdjust="spacingAndGlyphs" paint-order="stroke" stroke="#fff" stroke-width="2.2" stroke-linejoin="round">học Quốc...</text>
<g transform="translate(735 347)" opacity="1"><path d="M0 10.600L-5.700 5.800A8.100 8.100 0 1 1 5.700 5.800z" fill="#fff" stroke="#fff" stroke-width=".8" stroke-linejoin="round" style="filter:drop-shadow(0 .7px .6px rgba(0,0,0,.35))"/><circle r="7.100" fill="#6f8594"/><g transform="scale(1.250)"><path d="M0-3 4-1 0 1-4-1zM-2.300.4v1.500q2.300 1.500 4.600 0v-1.500l-2.300 1.200z" fill="#fff"/></g></g>
<g transform="translate(641 360)" opacity="1"><rect x="-5.200" y="-5.600" width="10.400" height="11.200" rx="3.600" fill="#fff" style="filter:drop-shadow(0 .6px .5px rgba(0,0,0,.3))"/><rect x="-4.150" y="-4.550" width="8.300" height="9.100" rx="2.800" fill="#14375a"/><path d="M-2.200 2.400v-3.400q0-1.700 2.200-1.700t2.200 1.700v3.400h-1.100l-.35-.8h-1.500l-.35.8z" fill="#fff"/><path d="M-1.400-1.300h2.800" stroke="#14375a" stroke-width=".9" stroke-linecap="round"/></g>
<g transform="translate(671.5 358)" opacity="1"><rect x="-5.200" y="-5.600" width="10.400" height="11.200" rx="3.600" fill="#fff" style="filter:drop-shadow(0 .6px .5px rgba(0,0,0,.3))"/><rect x="-4.150" y="-4.550" width="8.300" height="9.100" rx="2.800" fill="#14375a"/><path d="M-2.200 2.400v-3.400q0-1.700 2.200-1.700t2.200 1.700v3.400h-1.100l-.35-.8h-1.500l-.35.8z" fill="#fff"/><path d="M-1.400-1.300h2.800" stroke="#14375a" stroke-width=".9" stroke-linecap="round"/></g>
<g transform="translate(693 408.5)" opacity="1"><rect x="-5.200" y="-5.600" width="10.400" height="11.200" rx="3.600" fill="#fff" style="filter:drop-shadow(0 .6px .5px rgba(0,0,0,.3))"/><rect x="-4.150" y="-4.550" width="8.300" height="9.100" rx="2.800" fill="#14375a"/><path d="M-2.200 2.400v-3.400q0-1.700 2.200-1.700t2.200 1.700v3.400h-1.100l-.35-.8h-1.500l-.35.8z" fill="#fff"/><path d="M-1.400-1.300h2.800" stroke="#14375a" stroke-width=".9" stroke-linecap="round"/></g>
<g transform="translate(709 427)" opacity="1"><rect x="-5.200" y="-5.600" width="10.400" height="11.200" rx="3.600" fill="#fff" style="filter:drop-shadow(0 .6px .5px rgba(0,0,0,.3))"/><rect x="-4.150" y="-4.550" width="8.300" height="9.100" rx="2.800" fill="#14375a"/><path d="M-2.200 2.400v-3.400q0-1.700 2.200-1.700t2.200 1.700v3.400h-1.100l-.35-.8h-1.500l-.35.8z" fill="#fff"/><path d="M-1.400-1.300h2.800" stroke="#14375a" stroke-width=".9" stroke-linecap="round"/></g>
<g transform="translate(737 375)" opacity="1"><rect x="-5.200" y="-5.600" width="10.400" height="11.200" rx="3.600" fill="#fff" style="filter:drop-shadow(0 .6px .5px rgba(0,0,0,.3))"/><rect x="-4.150" y="-4.550" width="8.300" height="9.100" rx="2.800" fill="#14375a"/><path d="M-2.200 2.400v-3.400q0-1.700 2.200-1.700t2.200 1.700v3.400h-1.100l-.35-.8h-1.500l-.35.8z" fill="#fff"/><path d="M-1.400-1.300h2.800" stroke="#14375a" stroke-width=".9" stroke-linecap="round"/></g>
<g transform="translate(758 347)" opacity="1"><rect x="-5.200" y="-5.600" width="10.400" height="11.200" rx="3.600" fill="#fff" style="filter:drop-shadow(0 .6px .5px rgba(0,0,0,.3))"/><rect x="-4.150" y="-4.550" width="8.300" height="9.100" rx="2.800" fill="#14375a"/><path d="M-2.200 2.400v-3.400q0-1.700 2.200-1.700t2.200 1.700v3.400h-1.100l-.35-.8h-1.500l-.35.8z" fill="#fff"/><path d="M-1.400-1.300h2.800" stroke="#14375a" stroke-width=".9" stroke-linecap="round"/></g>
<text x="597" y="391" font-size="9.9" fill="#8d4fe6" text-anchor="end" textLength="55" lengthAdjust="spacingAndGlyphs" paint-order="stroke" stroke="#fff" stroke-width="2.2" stroke-linejoin="round">담센 문화공원</text>
<text x="597" y="400.5" font-size="9.9" fill="#8d4fe6" text-anchor="end" textLength="42" lengthAdjust="spacingAndGlyphs" paint-order="stroke" stroke="#fff" stroke-width="2.2" stroke-linejoin="round">(워터파크)</text>
<text x="597" y="408.7" font-size="7.4" fill="#8d4fe6" text-anchor="end" textLength="30" lengthAdjust="spacingAndGlyphs" paint-order="stroke" stroke="#fff" stroke-width="2.2" stroke-linejoin="round">Đầm Sen</text>
<g transform="translate(608 393)" opacity="1"><path d="M0 10.600L-5.700 5.800A8.100 8.100 0 1 1 5.700 5.800z" fill="#fff" stroke="#fff" stroke-width=".8" stroke-linejoin="round" style="filter:drop-shadow(0 .7px .6px rgba(0,0,0,.35))"/><circle r="7.100" fill="#9b5cf0"/><g transform="scale(1.250)"><circle r="3.100" fill="none" stroke="#fff" stroke-width="1.100"/><circle r="1.100" fill="#fff"/><path d="M0-4.200v1.200M0 3v1.200M-4.200 0h1.200M3 0h1.200M-3-3l.8.800M2.200 2.200l.8.800M-3 3l.8-.8M2.200-2.200l.8-.8" stroke="#fff" stroke-width="1"/></g></g>
<text x="644" y="414" font-size="8.4" fill="#3f464e" text-anchor="middle" transform="rotate(-29 644 414)" textLength="42" lengthAdjust="spacingAndGlyphs" paint-order="stroke" stroke="#fff" stroke-width="2" stroke-linejoin="round">Đ. Bình Thới</text>
<text x="611" y="435.5" font-size="8.4" fill="#3f464e" text-anchor="middle" transform="rotate(-86 611 435.5)" textLength="50" lengthAdjust="spacingAndGlyphs" paint-order="stroke" stroke="#fff" stroke-width="2" stroke-linejoin="round">Lạc Long Quân</text>
<text x="672" y="441.5" font-size="7.6" fill="#3a3f45" text-anchor="middle" font-weight="700" textLength="27" lengthAdjust="spacingAndGlyphs" paint-order="stroke" stroke="#fff" stroke-width="2" stroke-linejoin="round">CƯ XÁ</text>
<text x="672" y="450.5" font-size="7.6" fill="#3a3f45" text-anchor="middle" font-weight="700" textLength="46" lengthAdjust="spacingAndGlyphs" paint-order="stroke" stroke="#fff" stroke-width="2" stroke-linejoin="round">BÌNH THỚI</text>
<text x="737" y="417.5" font-size="9.9" fill="#1a73e8" textLength="89" lengthAdjust="spacingAndGlyphs" paint-order="stroke" stroke="#fff" stroke-width="2.2" stroke-linejoin="round">Lotte Mart District 11</text>
<text x="737" y="426" font-size="7.8" fill="#1a73e8" textLength="42" lengthAdjust="spacingAndGlyphs" paint-order="stroke" stroke="#fff" stroke-width="2.2" stroke-linejoin="round">대형 슈퍼마켓</text>
<g transform="translate(726 415)" opacity="1"><path d="M0 10.600L-5.700 5.800A8.100 8.100 0 1 1 5.700 5.800z" fill="#fff" stroke="#fff" stroke-width=".8" stroke-linejoin="round" style="filter:drop-shadow(0 .7px .6px rgba(0,0,0,.35))"/><circle r="7.100" fill="#1a8cf0"/><g transform="scale(1.250)"><path d="M-3.600-2.900h1.100l.4.900h4.900l-1.100 2.700h-3.400l-.4.800h4.400v.7h-5.200l.8-1.700-1.500-2.700h-.8z" fill="#fff"/><circle cx="-1.300" cy="3" r=".7" fill="#fff"/><circle cx="1.700" cy="3" r=".7" fill="#fff"/></g></g>
<text x="629.5" y="452" font-size="8.4" fill="#3f464e" text-anchor="middle" transform="rotate(-80 629.5 452)" textLength="40" lengthAdjust="spacingAndGlyphs" paint-order="stroke" stroke="#fff" stroke-width="2" stroke-linejoin="round">Minh Phụng</text>
<text x="665" y="463.3" font-size="9.9" fill="#d83b4b" textLength="73" lengthAdjust="spacingAndGlyphs" paint-order="stroke" stroke="#fff" stroke-width="2.2" stroke-linejoin="round">Cho Ray Hospital</text>
<text x="738" y="471.5" font-size="7.8" fill="#d83b4b" text-anchor="end" textLength="26" lengthAdjust="spacingAndGlyphs" paint-order="stroke" stroke="#fff" stroke-width="2.2" stroke-linejoin="round">종합병원</text>
<g transform="translate(539 458)" opacity="1"><rect x="-5.200" y="-5.600" width="10.400" height="11.200" rx="3.600" fill="#fff" style="filter:drop-shadow(0 .6px .5px rgba(0,0,0,.3))"/><rect x="-4.150" y="-4.550" width="8.300" height="9.100" rx="2.800" fill="#14375a"/><path d="M-2.200 2.400v-3.400q0-1.700 2.200-1.700t2.200 1.700v3.400h-1.100l-.35-.8h-1.500l-.35.8z" fill="#fff"/><path d="M-1.400-1.300h2.800" stroke="#14375a" stroke-width=".9" stroke-linecap="round"/></g>
<g transform="translate(570 487)" opacity="1"><rect x="-5.200" y="-5.600" width="10.400" height="11.200" rx="3.600" fill="#fff" style="filter:drop-shadow(0 .6px .5px rgba(0,0,0,.3))"/><rect x="-4.150" y="-4.550" width="8.300" height="9.100" rx="2.800" fill="#14375a"/><path d="M-2.200 2.400v-3.400q0-1.700 2.200-1.700t2.200 1.700v3.400h-1.100l-.35-.8h-1.500l-.35.8z" fill="#fff"/><path d="M-1.400-1.300h2.800" stroke="#14375a" stroke-width=".9" stroke-linecap="round"/></g>
<g transform="translate(596.5 489)" opacity="1"><rect x="-5.200" y="-5.600" width="10.400" height="11.200" rx="3.600" fill="#fff" style="filter:drop-shadow(0 .6px .5px rgba(0,0,0,.3))"/><rect x="-4.150" y="-4.550" width="8.300" height="9.100" rx="2.800" fill="#14375a"/><path d="M-2.200 2.400v-3.400q0-1.700 2.200-1.700t2.200 1.700v3.400h-1.100l-.35-.8h-1.500l-.35.8z" fill="#fff"/><path d="M-1.400-1.300h2.800" stroke="#14375a" stroke-width=".9" stroke-linecap="round"/></g>
<g transform="translate(702.5 500)" opacity="1"><rect x="-5.200" y="-5.600" width="10.400" height="11.200" rx="3.600" fill="#fff" style="filter:drop-shadow(0 .6px .5px rgba(0,0,0,.3))"/><rect x="-4.150" y="-4.550" width="8.300" height="9.100" rx="2.800" fill="#14375a"/><path d="M-2.200 2.400v-3.400q0-1.700 2.200-1.700t2.200 1.700v3.400h-1.100l-.35-.8h-1.500l-.35.8z" fill="#fff"/><path d="M-1.400-1.300h2.800" stroke="#14375a" stroke-width=".9" stroke-linecap="round"/></g>
<g transform="translate(723.5 481)" opacity="1"><rect x="-5.200" y="-5.600" width="10.400" height="11.200" rx="3.600" fill="#fff" style="filter:drop-shadow(0 .6px .5px rgba(0,0,0,.3))"/><rect x="-4.150" y="-4.550" width="8.300" height="9.100" rx="2.800" fill="#14375a"/><path d="M-2.200 2.400v-3.400q0-1.700 2.200-1.700t2.200 1.700v3.400h-1.100l-.35-.8h-1.500l-.35.8z" fill="#fff"/><path d="M-1.400-1.300h2.800" stroke="#14375a" stroke-width=".9" stroke-linecap="round"/></g>
<g transform="translate(744.5 524)" opacity="1"><rect x="-5.200" y="-5.600" width="10.400" height="11.200" rx="3.600" fill="#fff" style="filter:drop-shadow(0 .6px .5px rgba(0,0,0,.3))"/><rect x="-4.150" y="-4.550" width="8.300" height="9.100" rx="2.800" fill="#14375a"/><path d="M-2.200 2.400v-3.400q0-1.700 2.200-1.700t2.200 1.700v3.400h-1.100l-.35-.8h-1.500l-.35.8z" fill="#fff"/><path d="M-1.400-1.300h2.800" stroke="#14375a" stroke-width=".9" stroke-linecap="round"/></g>
<text x="656.5" y="508.5" font-size="8.4" fill="#3f464e" text-anchor="middle" transform="rotate(5 656.5 508.5)" textLength="46" lengthAdjust="spacingAndGlyphs" paint-order="stroke" stroke="#fff" stroke-width="2" stroke-linejoin="round">Đ. Hồng Bàng</text>
<text x="741" y="502" font-size="7.6" fill="#3a3f45" text-anchor="middle" font-weight="700" textLength="38" lengthAdjust="spacingAndGlyphs" paint-order="stroke" stroke="#fff" stroke-width="2" stroke-linejoin="round">CHOLON</text>
<text x="594" y="519.5" font-size="7.4" fill="#6a6f77" text-anchor="middle" textLength="39" lengthAdjust="spacingAndGlyphs" paint-order="stroke" stroke="#fff" stroke-width="2" stroke-linejoin="round">PHƯỜNG 9</text>
<text x="594" y="519.5" font-size="7.4" fill="#6a6f77" stroke="#6a6f77" stroke-width=".28" text-anchor="middle" textLength="39" lengthAdjust="spacingAndGlyphs">PHƯỜNG 9</text>
<text x="691" y="531" font-size="9.9" fill="#1a73e8" textLength="44" lengthAdjust="spacingAndGlyphs" paint-order="stroke" stroke="#fff" stroke-width="2.2" stroke-linejoin="round">빈따이시장</text>
<text x="691" y="540.5" font-size="8.8" fill="#1a73e8" textLength="44" lengthAdjust="spacingAndGlyphs" paint-order="stroke" stroke="#fff" stroke-width="2.2" stroke-linejoin="round">Chợ Bình Tây</text>
<g transform="translate(681 530)" opacity="1"><path d="M0 10.600L-5.700 5.800A8.100 8.100 0 1 1 5.700 5.800z" fill="#fff" stroke="#fff" stroke-width=".8" stroke-linejoin="round" style="filter:drop-shadow(0 .7px .6px rgba(0,0,0,.35))"/><circle r="7.100" fill="#1a8cf0"/><g transform="scale(1.250)"><path d="M-3.600-2.900h1.100l.4.900h4.900l-1.100 2.700h-3.400l-.4.800h4.400v.7h-5.200l.8-1.700-1.500-2.700h-.8z" fill="#fff"/><circle cx="-1.300" cy="3" r=".7" fill="#fff"/><circle cx="1.700" cy="3" r=".7" fill="#fff"/></g></g>
<text x="627" y="541" font-size="8.4" fill="#3f464e" text-anchor="middle" transform="rotate(3 627 541)" textLength="44" lengthAdjust="spacingAndGlyphs" paint-order="stroke" stroke="#fff" stroke-width="2" stroke-linejoin="round">Đ. Hậu Giang</text>
<text x="669" y="578.3" font-size="9.9" fill="#8d4fe6" textLength="93" lengthAdjust="spacingAndGlyphs" paint-order="stroke" stroke="#fff" stroke-width="2.2" stroke-linejoin="round">CineStar Satra Quận 6</text>
<text x="669" y="586.5" font-size="7.8" fill="#8d4fe6" textLength="20" lengthAdjust="spacingAndGlyphs" paint-order="stroke" stroke="#fff" stroke-width="2.2" stroke-linejoin="round">영화관</text>
<g transform="translate(658 575)" opacity="1"><path d="M0 10.600L-5.700 5.800A8.100 8.100 0 1 1 5.700 5.800z" fill="#fff" stroke="#fff" stroke-width=".8" stroke-linejoin="round" style="filter:drop-shadow(0 .7px .6px rgba(0,0,0,.35))"/><circle r="7.100" fill="#9b5cf0"/><g transform="scale(1.250)"><rect x="-2.900" y="-3" width="5.800" height="6" rx=".8" fill="#fff"/><path d="M-1.600-1.900h3.200v1.500h-3.200zM-1.600.4h3.200v1.500h-3.200z" fill="#9b5cf0"/></g></g>
<text x="641" y="484" font-size="8.4" fill="#3f464e" text-anchor="middle" transform="rotate(-31 641 484)" textLength="46" lengthAdjust="spacingAndGlyphs" paint-order="stroke" stroke="#fff" stroke-width="2" stroke-linejoin="round">Đ. 3 Tháng 2</text>
<text x="616" y="566" font-size="8.4" fill="#3f464e" text-anchor="middle" transform="rotate(84 616 566)" textLength="42" lengthAdjust="spacingAndGlyphs" paint-order="stroke" stroke="#fff" stroke-width="2" stroke-linejoin="round">Đ. Bình Tiên</text>
<text x="533" y="583" font-size="9.9" fill="#1a73e8" textLength="41" lengthAdjust="spacingAndGlyphs" paint-order="stroke" stroke="#fff" stroke-width="2.2" stroke-linejoin="round">MM Mega</text>
<text x="533" y="592.5" font-size="9.9" fill="#1a73e8" textLength="70" lengthAdjust="spacingAndGlyphs" paint-order="stroke" stroke="#fff" stroke-width="2.2" stroke-linejoin="round">Market Binh Phu</text>
<text x="533" y="600.5" font-size="7.8" fill="#1a73e8" textLength="43" lengthAdjust="spacingAndGlyphs" paint-order="stroke" stroke="#fff" stroke-width="2.2" stroke-linejoin="round">대형 슈퍼마켓</text>
<g transform="translate(523 586)" opacity="1"><path d="M0 10.600L-5.700 5.800A8.100 8.100 0 1 1 5.700 5.800z" fill="#fff" stroke="#fff" stroke-width=".8" stroke-linejoin="round" style="filter:drop-shadow(0 .7px .6px rgba(0,0,0,.35))"/><circle r="7.100" fill="#1a8cf0"/><g transform="scale(1.250)"><path d="M-3.600-2.900h1.100l.4.900h4.900l-1.100 2.700h-3.400l-.4.800h4.400v.7h-5.200l.8-1.700-1.500-2.700h-.8z" fill="#fff"/><circle cx="-1.300" cy="3" r=".7" fill="#fff"/><circle cx="1.700" cy="3" r=".7" fill="#fff"/></g></g>
<g transform="translate(645 604)" opacity="1"><rect x="-5.200" y="-5.600" width="10.400" height="11.200" rx="3.600" fill="#fff" style="filter:drop-shadow(0 .6px .5px rgba(0,0,0,.3))"/><rect x="-4.150" y="-4.550" width="8.300" height="9.100" rx="2.800" fill="#14375a"/><path d="M-2.200 2.400v-3.400q0-1.700 2.200-1.700t2.200 1.700v3.400h-1.100l-.35-.8h-1.500l-.35.8z" fill="#fff"/><path d="M-1.400-1.300h2.800" stroke="#14375a" stroke-width=".9" stroke-linecap="round"/></g>
<g transform="translate(632 618)" opacity="1"><rect x="-5.200" y="-5.600" width="10.400" height="11.200" rx="3.600" fill="#fff" style="filter:drop-shadow(0 .6px .5px rgba(0,0,0,.3))"/><rect x="-4.150" y="-4.550" width="8.300" height="9.100" rx="2.800" fill="#14375a"/><path d="M-2.200 2.400v-3.400q0-1.700 2.200-1.700t2.200 1.700v3.400h-1.100l-.35-.8h-1.500l-.35.8z" fill="#fff"/><path d="M-1.400-1.300h2.800" stroke="#14375a" stroke-width=".9" stroke-linecap="round"/></g>
<g transform="translate(555 631)" opacity="1"><rect x="-5.200" y="-5.600" width="10.400" height="11.200" rx="3.600" fill="#fff" style="filter:drop-shadow(0 .6px .5px rgba(0,0,0,.3))"/><rect x="-4.150" y="-4.550" width="8.300" height="9.100" rx="2.800" fill="#14375a"/><path d="M-2.200 2.400v-3.400q0-1.700 2.200-1.700t2.200 1.700v3.400h-1.100l-.35-.8h-1.500l-.35.8z" fill="#fff"/><path d="M-1.400-1.300h2.800" stroke="#14375a" stroke-width=".9" stroke-linecap="round"/></g>
<g transform="translate(545 653)" opacity="1"><rect x="-5.200" y="-5.600" width="10.400" height="11.200" rx="3.600" fill="#fff" style="filter:drop-shadow(0 .6px .5px rgba(0,0,0,.3))"/><rect x="-4.150" y="-4.550" width="8.300" height="9.100" rx="2.800" fill="#14375a"/><path d="M-2.200 2.400v-3.400q0-1.700 2.200-1.700t2.200 1.700v3.400h-1.100l-.35-.8h-1.500l-.35.8z" fill="#fff"/><path d="M-1.400-1.300h2.800" stroke="#14375a" stroke-width=".9" stroke-linecap="round"/></g>
<g transform="translate(721 645)" opacity="1"><rect x="-5.200" y="-5.600" width="10.400" height="11.200" rx="3.600" fill="#fff" style="filter:drop-shadow(0 .6px .5px rgba(0,0,0,.3))"/><rect x="-4.150" y="-4.550" width="8.300" height="9.100" rx="2.800" fill="#14375a"/><path d="M-2.200 2.400v-3.400q0-1.700 2.200-1.700t2.200 1.700v3.400h-1.100l-.35-.8h-1.500l-.35.8z" fill="#fff"/><path d="M-1.400-1.300h2.800" stroke="#14375a" stroke-width=".9" stroke-linecap="round"/></g>
<g transform="translate(713 671)" opacity="1"><rect x="-5.200" y="-5.600" width="10.400" height="11.200" rx="3.600" fill="#fff" style="filter:drop-shadow(0 .6px .5px rgba(0,0,0,.3))"/><rect x="-4.150" y="-4.550" width="8.300" height="9.100" rx="2.800" fill="#14375a"/><path d="M-2.200 2.400v-3.400q0-1.700 2.200-1.700t2.200 1.700v3.400h-1.100l-.35-.8h-1.500l-.35.8z" fill="#fff"/><path d="M-1.400-1.300h2.800" stroke="#14375a" stroke-width=".9" stroke-linecap="round"/></g>
<g transform="translate(719 691)" opacity="1"><rect x="-5.200" y="-5.600" width="10.400" height="11.200" rx="3.600" fill="#fff" style="filter:drop-shadow(0 .6px .5px rgba(0,0,0,.3))"/><rect x="-4.150" y="-4.550" width="8.300" height="9.100" rx="2.800" fill="#14375a"/><path d="M-2.200 2.400v-3.400q0-1.700 2.200-1.700t2.200 1.700v3.400h-1.100l-.35-.8h-1.500l-.35.8z" fill="#fff"/><path d="M-1.400-1.300h2.800" stroke="#14375a" stroke-width=".9" stroke-linecap="round"/></g>
<text x="575" y="649" font-size="8.4" fill="#3f464e" text-anchor="middle" transform="rotate(-30 575 649)" textLength="44" lengthAdjust="spacingAndGlyphs" paint-order="stroke" stroke="#fff" stroke-width="2" stroke-linejoin="round">Võ Văn Kiệt</text>
<text x="660" y="630" font-size="9.9" fill="#5f7284" textLength="106" lengthAdjust="spacingAndGlyphs" paint-order="stroke" stroke="#fff" stroke-width="2.2" stroke-linejoin="round">Nguyên Thuận Computer</text>
<g transform="translate(775 626)" opacity="1"><path d="M0 10.600L-5.700 5.800A8.100 8.100 0 1 1 5.700 5.800z" fill="#fff" stroke="#fff" stroke-width=".8" stroke-linejoin="round" style="filter:drop-shadow(0 .7px .6px rgba(0,0,0,.35))"/><circle r="7.100" fill="#6f8594"/><g transform="scale(1.250)"><circle r="2.300" fill="#fff"/></g></g>
<text x="656" y="651" font-size="8.4" fill="#3f464e" text-anchor="middle" transform="rotate(-32 656 651)" textLength="62" lengthAdjust="spacingAndGlyphs" paint-order="stroke" stroke="#fff" stroke-width="2" stroke-linejoin="round">Đ. Phạm Thế Hiển</text>
<text x="658.5" y="672.5" font-size="7.4" fill="#6a6f77" text-anchor="middle" textLength="38" lengthAdjust="spacingAndGlyphs" paint-order="stroke" stroke="#fff" stroke-width="2" stroke-linejoin="round">PHƯỜNG 6</text>
<text x="658.5" y="672.5" font-size="7.4" fill="#6a6f77" stroke="#6a6f77" stroke-width=".28" text-anchor="middle" textLength="38" lengthAdjust="spacingAndGlyphs">PHƯỜNG 6</text>
<text x="700" y="718.5" font-size="7.6" fill="#3a3f45" text-anchor="middle" font-weight="700" textLength="56" lengthAdjust="spacingAndGlyphs" paint-order="stroke" stroke="#fff" stroke-width="2" stroke-linejoin="round">KHU DÂN CƯ</text>
<rect x="710.0" y="726.8" width="17" height="8.400" rx="1" fill="#2f6fd0"/>
<text x="718.5" y="733.5" font-size="6.6" fill="#fff" text-anchor="middle" font-weight="700" textLength="13" lengthAdjust="spacingAndGlyphs">QL50</text>
<text x="563" y="738" font-size="8.4" fill="#3f464e" text-anchor="middle" transform="rotate(-70 563 738)" textLength="8" lengthAdjust="spacingAndGlyphs" paint-order="stroke" stroke="#fff" stroke-width="2" stroke-linejoin="round">ến</text>
<text x="757" y="189" font-size="8.4" fill="#dd6b14" textLength="71" lengthAdjust="spacingAndGlyphs" paint-order="stroke" stroke="#fff" stroke-width="2.2" stroke-linejoin="round">Oasis Cafe Lê Văn Sỹ</text>
<g transform="translate(838 180)" opacity="1"><path d="M0 10.600L-5.700 5.800A8.100 8.100 0 1 1 5.700 5.800z" fill="#fff" stroke="#fff" stroke-width=".8" stroke-linejoin="round" style="filter:drop-shadow(0 .7px .6px rgba(0,0,0,.35))"/><circle r="7.100" fill="#fa6b10"/><g transform="scale(1.250)"><path d="M-3-2.200h4.600v.5h.8q.9 0 .9.900t-.9.900h-.9q-.3 1.300-1.400 1.300h-1.600q-1.500 0-1.500-1.800zM1.600-1.100v1h.7q.4 0 .4-.5t-.4-.500zM-3.200 2.200h5.200v.7h-5.200z" fill="#fff"/></g></g>
<text x="764" y="198.5" font-size="8.4" fill="#3f464e" text-anchor="middle" transform="rotate(24 764 198.5)" textLength="32" lengthAdjust="spacingAndGlyphs" paint-order="stroke" stroke="#fff" stroke-width="2" stroke-linejoin="round">Hoàng Sa</text>
<text x="917" y="200" font-size="10" fill="#51606e" text-anchor="end" textLength="55" lengthAdjust="spacingAndGlyphs" paint-order="stroke" stroke="#fff" stroke-width="2.2" stroke-linejoin="round">빈응이엠 사원</text>
<text x="917" y="209.5" font-size="7.8" fill="#7b8794" text-anchor="end" textLength="61" lengthAdjust="spacingAndGlyphs" paint-order="stroke" stroke="#fff" stroke-width="2.2" stroke-linejoin="round">Chùa Vĩnh Nghiêm</text>
<g transform="translate(930 199)" opacity="0.6"><path d="M0 10.600L-5.700 5.800A8.100 8.100 0 1 1 5.700 5.800z" fill="#fff" stroke="#fff" stroke-width=".8" stroke-linejoin="round" style="filter:drop-shadow(0 .7px .6px rgba(0,0,0,.35))"/><circle r="7.100" fill="#6f8594"/><g transform="scale(1.250)"><circle r="3.200" fill="none" stroke="#fff" stroke-width="1.100"/><circle r=".8" fill="#fff"/><path d="M0-3.200v6.400M-3.200 0h6.400M-2.300-2.300l4.600 4.600M-2.300 2.300l4.600-4.600" stroke="#fff" stroke-width=".6"/></g></g>
<text x="811" y="234" font-size="9.9" fill="#8d4fe6" textLength="54" lengthAdjust="spacingAndGlyphs" paint-order="stroke" stroke="#fff" stroke-width="2.2" stroke-linejoin="round">White Rabbit</text>
<text x="811" y="243.5" font-size="9.9" fill="#8d4fe6" textLength="73" lengthAdjust="spacingAndGlyphs" paint-order="stroke" stroke="#fff" stroke-width="2.2" stroke-linejoin="round">Amusement Park</text>
<text x="811" y="251.7" font-size="7.8" fill="#8d4fe6" textLength="27" lengthAdjust="spacingAndGlyphs" paint-order="stroke" stroke="#fff" stroke-width="2.2" stroke-linejoin="round">테마파크</text>
<g transform="translate(799 237)" opacity="1"><path d="M0 10.600L-5.700 5.800A8.100 8.100 0 1 1 5.700 5.800z" fill="#fff" stroke="#fff" stroke-width=".8" stroke-linejoin="round" style="filter:drop-shadow(0 .7px .6px rgba(0,0,0,.35))"/><circle r="7.100" fill="#9b5cf0"/><g transform="scale(1.250)"><circle r="3.100" fill="none" stroke="#fff" stroke-width="1.100"/><circle r="1.100" fill="#fff"/><path d="M0-4.200v1.200M0 3v1.200M-4.200 0h1.200M3 0h1.200M-3-3l.8.800M2.200 2.200l.8.800M-3 3l.8-.8M2.200-2.200l.8-.8" stroke="#fff" stroke-width="1"/></g></g>
<text x="799.5" y="284" font-size="8.2" fill="#3a3f45" text-anchor="middle" font-weight="700" textLength="60" lengthAdjust="spacingAndGlyphs" paint-order="stroke" stroke="#fff" stroke-width="2" stroke-linejoin="round">PHƯỜNG 15</text>
<text x="883" y="291" font-size="8.2" fill="#3f464e" text-anchor="middle" transform="rotate(27.5 883 291)" textLength="84" lengthAdjust="spacingAndGlyphs" paint-order="stroke" stroke="#fff" stroke-width="2" stroke-linejoin="round">Cách Mạng Tháng Tám</text>
<text x="921" y="252" font-size="8.4" fill="#3f464e" text-anchor="middle" transform="rotate(-62 921 252)" textLength="30" lengthAdjust="spacingAndGlyphs" paint-order="stroke" stroke="#fff" stroke-width="2" stroke-linejoin="round">Hoàng Sa</text>
<text x="961" y="272.5" font-size="7.4" fill="#6a6f77" text-anchor="middle" textLength="40" lengthAdjust="spacingAndGlyphs" paint-order="stroke" stroke="#fff" stroke-width="2" stroke-linejoin="round">VÕ THỊ SÁU</text>
<text x="961" y="272.5" font-size="7.4" fill="#6a6f77" stroke="#6a6f77" stroke-width=".28" text-anchor="middle" textLength="40" lengthAdjust="spacingAndGlyphs">VÕ THỊ SÁU</text>
<g transform="translate(938.5 286.5)" opacity="1"><rect x="-5.200" y="-5.600" width="10.400" height="11.200" rx="3.600" fill="#fff" style="filter:drop-shadow(0 .6px .5px rgba(0,0,0,.3))"/><rect x="-4.150" y="-4.550" width="8.300" height="9.100" rx="2.800" fill="#14375a"/><path d="M-2.200 2.400v-3.400q0-1.700 2.200-1.700t2.200 1.700v3.400h-1.100l-.35-.8h-1.500l-.35.8z" fill="#fff"/><path d="M-1.400-1.300h2.800" stroke="#14375a" stroke-width=".9" stroke-linecap="round"/></g>
<text x="836" y="305.5" font-size="9.9" fill="#8d4fe6" text-anchor="end" textLength="66" lengthAdjust="spacingAndGlyphs" paint-order="stroke" stroke="#fff" stroke-width="2.2" stroke-linejoin="round">베트남 전통 의학</text>
<text x="836" y="316.5" font-size="9.9" fill="#8d4fe6" text-anchor="end" textLength="79" lengthAdjust="spacingAndGlyphs" paint-order="stroke" stroke="#fff" stroke-width="2.2" stroke-linejoin="round">박물관 (피토박물관)</text>
<g transform="translate(847 314)" opacity="1"><path d="M0 10.600L-5.700 5.800A8.100 8.100 0 1 1 5.700 5.800z" fill="#fff" stroke="#fff" stroke-width=".8" stroke-linejoin="round" style="filter:drop-shadow(0 .7px .6px rgba(0,0,0,.35))"/><circle r="7.100" fill="#9b5cf0"/><g transform="scale(1.250)"><path d="M-3.200-1.300 0-3.500 3.200-1.300v.7h-6.400zM-2.600 0h5.200v3h-5.200z" fill="#fff"/><rect x="-1.300" y=".8" width="2.600" height="1.500" fill="#9b5cf0"/></g></g>
<text x="836" y="323.5" font-size="7.6" fill="#8d4fe6" text-anchor="end" textLength="61" lengthAdjust="spacingAndGlyphs" paint-order="stroke" stroke="#fff" stroke-width="2.2" stroke-linejoin="round">Bảo tàng Y học Cổ</text>
<text x="836" y="331.5" font-size="7.6" fill="#8d4fe6" text-anchor="end" textLength="52" lengthAdjust="spacingAndGlyphs" paint-order="stroke" stroke="#fff" stroke-width="2.2" stroke-linejoin="round">truyền Việt Nam</text>
<text x="882" y="323.5" font-size="7.6" fill="#3a3f45" text-anchor="middle" font-weight="700" textLength="27" lengthAdjust="spacingAndGlyphs" paint-order="stroke" stroke="#fff" stroke-width="2" stroke-linejoin="round">HÀ ĐÔ</text>
<text x="882" y="331.7" font-size="7.6" fill="#3a3f45" text-anchor="middle" font-weight="700" textLength="48" lengthAdjust="spacingAndGlyphs" paint-order="stroke" stroke="#fff" stroke-width="2" stroke-linejoin="round">CENTROSA</text>
<text x="882" y="339.9" font-size="7.6" fill="#3a3f45" text-anchor="middle" font-weight="700" textLength="37" lengthAdjust="spacingAndGlyphs" paint-order="stroke" stroke="#fff" stroke-width="2" stroke-linejoin="round">GARDEN</text>
<g transform="translate(759 346)" opacity="1"><rect x="-5.200" y="-5.600" width="10.400" height="11.200" rx="3.600" fill="#fff" style="filter:drop-shadow(0 .6px .5px rgba(0,0,0,.3))"/><rect x="-4.150" y="-4.550" width="8.300" height="9.100" rx="2.800" fill="#14375a"/><path d="M-2.200 2.400v-3.400q0-1.700 2.200-1.700t2.200 1.700v3.400h-1.100l-.35-.8h-1.500l-.35.8z" fill="#fff"/><path d="M-1.400-1.300h2.800" stroke="#14375a" stroke-width=".9" stroke-linecap="round"/></g>
<g transform="translate(848 372)" opacity="1"><rect x="-5.200" y="-5.600" width="10.400" height="11.200" rx="3.600" fill="#fff" style="filter:drop-shadow(0 .6px .5px rgba(0,0,0,.3))"/><rect x="-4.150" y="-4.550" width="8.300" height="9.100" rx="2.800" fill="#14375a"/><path d="M-2.200 2.400v-3.400q0-1.700 2.200-1.700t2.200 1.700v3.400h-1.100l-.35-.8h-1.500l-.35.8z" fill="#fff"/><path d="M-1.400-1.300h2.800" stroke="#14375a" stroke-width=".9" stroke-linecap="round"/></g>
<g transform="translate(846.5 404)" opacity="1"><rect x="-5.200" y="-5.600" width="10.400" height="11.200" rx="3.600" fill="#fff" style="filter:drop-shadow(0 .6px .5px rgba(0,0,0,.3))"/><rect x="-4.150" y="-4.550" width="8.300" height="9.100" rx="2.800" fill="#14375a"/><path d="M-2.200 2.400v-3.400q0-1.700 2.200-1.700t2.200 1.700v3.400h-1.100l-.35-.8h-1.500l-.35.8z" fill="#fff"/><path d="M-1.400-1.300h2.800" stroke="#14375a" stroke-width=".9" stroke-linecap="round"/></g>
<g transform="translate(868 424)" opacity="1"><rect x="-5.200" y="-5.600" width="10.400" height="11.200" rx="3.600" fill="#fff" style="filter:drop-shadow(0 .6px .5px rgba(0,0,0,.3))"/><rect x="-4.150" y="-4.550" width="8.300" height="9.100" rx="2.800" fill="#14375a"/><path d="M-2.200 2.400v-3.400q0-1.700 2.200-1.700t2.200 1.700v3.400h-1.100l-.35-.8h-1.500l-.35.8z" fill="#fff"/><path d="M-1.400-1.300h2.800" stroke="#14375a" stroke-width=".9" stroke-linecap="round"/></g>
<text x="818" y="355" font-size="9.9" fill="#1a73e8" text-anchor="end" textLength="28" lengthAdjust="spacingAndGlyphs" paint-order="stroke" stroke="#fff" stroke-width="2.2" stroke-linejoin="round">반한몰</text>
<text x="818" y="364.5" font-size="8.4" fill="#1a73e8" text-anchor="end" textLength="48" lengthAdjust="spacingAndGlyphs" paint-order="stroke" stroke="#fff" stroke-width="2.2" stroke-linejoin="round">Van Hanh Mall</text>
<g transform="translate(828 357)" opacity="1"><path d="M0 10.600L-5.700 5.800A8.100 8.100 0 1 1 5.700 5.800z" fill="#fff" stroke="#fff" stroke-width=".8" stroke-linejoin="round" style="filter:drop-shadow(0 .7px .6px rgba(0,0,0,.35))"/><circle r="7.100" fill="#1a8cf0"/><g transform="scale(1.250)"><path d="M-2.700-1h5.400l.4 4.200h-6.200zM-1.400-1v-.8a1.400 1.400 0 0 1 2.800 0v.8h-.700v-.8a.7.700 0 0 0-1.400 0v.8z" fill="#fff"/><circle cy="1.200" r=".7" fill="#1a73e8"/></g></g>
<text x="895" y="358" font-size="8.4" fill="#3f464e" text-anchor="middle" transform="rotate(-46 895 358)" textLength="50" lengthAdjust="spacingAndGlyphs" paint-order="stroke" stroke="#fff" stroke-width="2" stroke-linejoin="round">Điện Biên Phủ</text>
<text x="898" y="397.3" font-size="9.9" fill="#1a73e8" textLength="41" lengthAdjust="spacingAndGlyphs" paint-order="stroke" stroke="#fff" stroke-width="2.2" stroke-linejoin="round">Ho Thi Ky</text>
<text x="898" y="407" font-size="9.9" fill="#1a73e8" textLength="60" lengthAdjust="spacingAndGlyphs" paint-order="stroke" stroke="#fff" stroke-width="2.2" stroke-linejoin="round">Flower Market</text>
<text x="898" y="415.5" font-size="7.8" fill="#1a73e8" textLength="22" lengthAdjust="spacingAndGlyphs" paint-order="stroke" stroke="#fff" stroke-width="2.2" stroke-linejoin="round">꽃 시장</text>
<g transform="translate(887 400)" opacity="1"><path d="M0 10.600L-5.700 5.800A8.100 8.100 0 1 1 5.700 5.800z" fill="#fff" stroke="#fff" stroke-width=".8" stroke-linejoin="round" style="filter:drop-shadow(0 .7px .6px rgba(0,0,0,.35))"/><circle r="7.100" fill="#1a8cf0"/><g transform="scale(1.250)"><path d="M-3.600-2.900h1.100l.4.900h4.900l-1.100 2.700h-3.400l-.4.800h4.400v.7h-5.200l.8-1.700-1.500-2.700h-.8z" fill="#fff"/><circle cx="-1.300" cy="3" r=".7" fill="#fff"/><circle cx="1.700" cy="3" r=".7" fill="#fff"/></g></g>
<text x="841" y="431" font-size="8.4" fill="#3f464e" text-anchor="middle" transform="rotate(-55 841 431)" textLength="40" lengthAdjust="spacingAndGlyphs" paint-order="stroke" stroke="#fff" stroke-width="2" stroke-linejoin="round">Ngô Gia Tự</text>
<text x="881" y="441" font-size="8.4" fill="#3f464e" text-anchor="middle" transform="rotate(-31 881 441)" textLength="42" lengthAdjust="spacingAndGlyphs" paint-order="stroke" stroke="#fff" stroke-width="2" stroke-linejoin="round">Hùng Vương</text>
<text x="904" y="436" font-size="8.4" fill="#3f464e" text-anchor="middle" transform="rotate(-36 904 436)" textLength="30" lengthAdjust="spacingAndGlyphs" paint-order="stroke" stroke="#fff" stroke-width="2" stroke-linejoin="round">Trần Phú</text>
<text x="838" y="460" font-size="9.9" fill="#1a73e8" text-anchor="end" textLength="34" lengthAdjust="spacingAndGlyphs" paint-order="stroke" stroke="#fff" stroke-width="2.2" stroke-linejoin="round">안동시장</text>
<text x="838" y="469" font-size="8.8" fill="#1a73e8" text-anchor="end" textLength="44" lengthAdjust="spacingAndGlyphs" paint-order="stroke" stroke="#fff" stroke-width="2.2" stroke-linejoin="round">Chợ An Đông</text>
<g transform="translate(849 458)" opacity="1"><path d="M0 10.600L-5.700 5.800A8.100 8.100 0 1 1 5.700 5.800z" fill="#fff" stroke="#fff" stroke-width=".8" stroke-linejoin="round" style="filter:drop-shadow(0 .7px .6px rgba(0,0,0,.35))"/><circle r="7.100" fill="#1a8cf0"/><g transform="scale(1.250)"><path d="M-3.600-2.900h1.100l.4.900h4.900l-1.100 2.700h-3.400l-.4.800h4.400v.7h-5.200l.8-1.700-1.500-2.700h-.8z" fill="#fff"/><circle cx="-1.300" cy="3" r=".7" fill="#fff"/><circle cx="1.700" cy="3" r=".7" fill="#fff"/></g></g>
<text x="895" y="467" font-size="8.4" fill="#3f464e" text-anchor="middle" transform="rotate(-19 895 467)" textLength="64" lengthAdjust="spacingAndGlyphs" paint-order="stroke" stroke="#fff" stroke-width="2" stroke-linejoin="round">Đ. An Dương Vương</text>
<g transform="translate(855 485.5)" opacity="1"><rect x="-5.200" y="-5.600" width="10.400" height="11.200" rx="3.600" fill="#fff" style="filter:drop-shadow(0 .6px .5px rgba(0,0,0,.3))"/><rect x="-4.150" y="-4.550" width="8.300" height="9.100" rx="2.800" fill="#14375a"/><path d="M-2.200 2.400v-3.400q0-1.700 2.200-1.700t2.200 1.700v3.400h-1.100l-.35-.8h-1.500l-.35.8z" fill="#fff"/><path d="M-1.400-1.300h2.800" stroke="#14375a" stroke-width=".9" stroke-linecap="round"/></g>
<g transform="translate(903 562)" opacity="1"><rect x="-5.200" y="-5.600" width="10.400" height="11.200" rx="3.600" fill="#fff" style="filter:drop-shadow(0 .6px .5px rgba(0,0,0,.3))"/><rect x="-4.150" y="-4.550" width="8.300" height="9.100" rx="2.800" fill="#14375a"/><path d="M-2.200 2.400v-3.400q0-1.700 2.200-1.700t2.200 1.700v3.400h-1.100l-.35-.8h-1.500l-.35.8z" fill="#fff"/><path d="M-1.400-1.300h2.800" stroke="#14375a" stroke-width=".9" stroke-linecap="round"/></g>
<g transform="translate(886 571)" opacity="1"><rect x="-5.200" y="-5.600" width="10.400" height="11.200" rx="3.600" fill="#fff" style="filter:drop-shadow(0 .6px .5px rgba(0,0,0,.3))"/><rect x="-4.150" y="-4.550" width="8.300" height="9.100" rx="2.800" fill="#14375a"/><path d="M-2.200 2.400v-3.400q0-1.700 2.200-1.700t2.200 1.700v3.400h-1.100l-.35-.8h-1.500l-.35.8z" fill="#fff"/><path d="M-1.400-1.300h2.800" stroke="#14375a" stroke-width=".9" stroke-linecap="round"/></g>
<text x="884" y="499.5" font-size="10" fill="#51606e" textLength="62" lengthAdjust="spacingAndGlyphs" paint-order="stroke" stroke="#fff" stroke-width="2.2" stroke-linejoin="round">Chùa Vạn Phật</text>
<text x="884" y="508" font-size="7.8" fill="#7b8794" textLength="26" lengthAdjust="spacingAndGlyphs" paint-order="stroke" stroke="#fff" stroke-width="2.2" stroke-linejoin="round">불교사찰</text>
<g transform="translate(874 497)" opacity="1"><path d="M0 10.600L-5.700 5.800A8.100 8.100 0 1 1 5.700 5.800z" fill="#fff" stroke="#fff" stroke-width=".8" stroke-linejoin="round" style="filter:drop-shadow(0 .7px .6px rgba(0,0,0,.35))"/><circle r="7.100" fill="#6f8594"/><g transform="scale(1.250)"><circle r="3.200" fill="none" stroke="#fff" stroke-width="1.100"/><circle r=".8" fill="#fff"/><path d="M0-3.200v6.400M-3.200 0h6.400M-2.300-2.300l4.600 4.600M-2.300 2.300l4.600-4.600" stroke="#fff" stroke-width=".6"/></g></g>
<text x="843.5" y="540" font-size="8.4" fill="#3f464e" text-anchor="middle" transform="rotate(13 843.5 540)" textLength="42" lengthAdjust="spacingAndGlyphs" paint-order="stroke" stroke="#fff" stroke-width="2" stroke-linejoin="round">Võ Văn Kiệt</text>
<text x="958" y="512" font-size="8.4" fill="#3f464e" text-anchor="middle" transform="rotate(-41 958 512)" textLength="42" lengthAdjust="spacingAndGlyphs" paint-order="stroke" stroke="#fff" stroke-width="2" stroke-linejoin="round">Võ Văn Kiệt</text>
<text x="946" y="545" font-size="8.4" fill="#3f464e" text-anchor="middle" transform="rotate(-29 946 545)" textLength="60" lengthAdjust="spacingAndGlyphs" paint-order="stroke" stroke="#fff" stroke-width="2" stroke-linejoin="round">Đ. Phạm Thế Hiển</text>
<text x="784.5" y="510.5" font-size="7.4" fill="#6a6f77" text-anchor="middle" textLength="42" lengthAdjust="spacingAndGlyphs" paint-order="stroke" stroke="#fff" stroke-width="2" stroke-linejoin="round">PHƯỜNG 11</text>
<text x="784.5" y="510.5" font-size="7.4" fill="#6a6f77" stroke="#6a6f77" stroke-width=".28" text-anchor="middle" textLength="42" lengthAdjust="spacingAndGlyphs">PHƯỜNG 11</text>
<text x="823" y="565.5" font-size="7.4" fill="#6a6f77" text-anchor="middle" textLength="31" lengthAdjust="spacingAndGlyphs" paint-order="stroke" stroke="#fff" stroke-width="2" stroke-linejoin="round">PHƯỜNG</text>
<text x="823" y="565.5" font-size="7.4" fill="#6a6f77" stroke="#6a6f77" stroke-width=".28" text-anchor="middle" textLength="31" lengthAdjust="spacingAndGlyphs">PHƯỜNG</text>
<text x="823" y="572.7" font-size="7.4" fill="#6a6f77" text-anchor="middle" textLength="40" lengthAdjust="spacingAndGlyphs" paint-order="stroke" stroke="#fff" stroke-width="2" stroke-linejoin="round">HƯNG PHÚ</text>
<text x="823" y="572.7" font-size="7.4" fill="#6a6f77" stroke="#6a6f77" stroke-width=".28" text-anchor="middle" textLength="40" lengthAdjust="spacingAndGlyphs">HƯNG PHÚ</text>
<text x="806" y="600" font-size="9.9" fill="#1a73e8" textLength="87" lengthAdjust="spacingAndGlyphs" paint-order="stroke" stroke="#fff" stroke-width="2.2" stroke-linejoin="round">AEON Ta Quang Buu</text>
<text x="893" y="608.5" font-size="7.8" fill="#1a73e8" text-anchor="end" textLength="27" lengthAdjust="spacingAndGlyphs" paint-order="stroke" stroke="#fff" stroke-width="2.2" stroke-linejoin="round">슈퍼마켓</text>
<g transform="translate(904 597)" opacity="1"><path d="M0 10.600L-5.700 5.800A8.100 8.100 0 1 1 5.700 5.800z" fill="#fff" stroke="#fff" stroke-width=".8" stroke-linejoin="round" style="filter:drop-shadow(0 .7px .6px rgba(0,0,0,.35))"/><circle r="7.100" fill="#1a8cf0"/><g transform="scale(1.250)"><path d="M-3.600-2.900h1.100l.4.900h4.900l-1.100 2.700h-3.400l-.4.800h4.400v.7h-5.200l.8-1.700-1.500-2.700h-.8z" fill="#fff"/><circle cx="-1.300" cy="3" r=".7" fill="#fff"/><circle cx="1.700" cy="3" r=".7" fill="#fff"/></g></g>
<g transform="translate(801 616.5)" opacity="1"><rect x="-5.200" y="-5.600" width="10.400" height="11.200" rx="3.600" fill="#fff" style="filter:drop-shadow(0 .6px .5px rgba(0,0,0,.3))"/><rect x="-4.150" y="-4.550" width="8.300" height="9.100" rx="2.800" fill="#14375a"/><path d="M-2.200 2.400v-3.400q0-1.700 2.200-1.700t2.200 1.700v3.400h-1.100l-.35-.8h-1.500l-.35.8z" fill="#fff"/><path d="M-1.400-1.300h2.800" stroke="#14375a" stroke-width=".9" stroke-linecap="round"/></g>
<g transform="translate(885 571)" opacity="1"><rect x="-5.200" y="-5.600" width="10.400" height="11.200" rx="3.600" fill="#fff" style="filter:drop-shadow(0 .6px .5px rgba(0,0,0,.3))"/><rect x="-4.150" y="-4.550" width="8.300" height="9.100" rx="2.800" fill="#14375a"/><path d="M-2.200 2.400v-3.400q0-1.700 2.200-1.700t2.200 1.700v3.400h-1.100l-.35-.8h-1.500l-.35.8z" fill="#fff"/><path d="M-1.400-1.300h2.800" stroke="#14375a" stroke-width=".9" stroke-linecap="round"/></g>
<g transform="translate(943 715)" opacity="1"><rect x="-5.200" y="-5.600" width="10.400" height="11.200" rx="3.600" fill="#fff" style="filter:drop-shadow(0 .6px .5px rgba(0,0,0,.3))"/><rect x="-4.150" y="-4.550" width="8.300" height="9.100" rx="2.800" fill="#14375a"/><path d="M-2.200 2.400v-3.400q0-1.700 2.200-1.700t2.200 1.700v3.400h-1.100l-.35-.8h-1.500l-.35.8z" fill="#fff"/><path d="M-1.400-1.300h2.800" stroke="#14375a" stroke-width=".9" stroke-linecap="round"/></g>
<text x="854" y="630.5" font-size="9.9" fill="#5f7284" textLength="69" lengthAdjust="spacingAndGlyphs" paint-order="stroke" stroke="#fff" stroke-width="2.2" stroke-linejoin="round">Nam Hai Church</text>
<text x="854" y="639" font-size="7.8" fill="#5f7284" textLength="36" lengthAdjust="spacingAndGlyphs" paint-order="stroke" stroke="#fff" stroke-width="2.2" stroke-linejoin="round">천주교 성당</text>
<g transform="translate(842 628)" opacity="1"><path d="M0 10.600L-5.700 5.800A8.100 8.100 0 1 1 5.700 5.800z" fill="#fff" stroke="#fff" stroke-width=".8" stroke-linejoin="round" style="filter:drop-shadow(0 .7px .6px rgba(0,0,0,.35))"/><circle r="7.100" fill="#6f8594"/><g transform="scale(1.250)"><path d="M-.6-3.400h1.200v1.900h1.800v1.200h-1.800v3.700h-1.200v-3.700h-1.800v-1.200h1.800z" fill="#fff"/></g></g>
<text x="867" y="674.5" font-size="9.9" fill="#dd6b14" textLength="83" lengthAdjust="spacingAndGlyphs" paint-order="stroke" stroke="#fff" stroke-width="2.2" stroke-linejoin="round">Làng Ẩm Thực Sinh</text>
<text x="867" y="684" font-size="9.9" fill="#dd6b14" textLength="67" lengthAdjust="spacingAndGlyphs" paint-order="stroke" stroke="#fff" stroke-width="2.2" stroke-linejoin="round">Thái Bình Xuyên</text>
<text x="867" y="692" font-size="7.8" fill="#dd6b14" textLength="49" lengthAdjust="spacingAndGlyphs" paint-order="stroke" stroke="#fff" stroke-width="2.2" stroke-linejoin="round">아시아 레스토랑</text>
<g transform="translate(856 677)" opacity="1"><path d="M0 10.600L-5.700 5.800A8.100 8.100 0 1 1 5.700 5.800z" fill="#fff" stroke="#fff" stroke-width=".8" stroke-linejoin="round" style="filter:drop-shadow(0 .7px .6px rgba(0,0,0,.35))"/><circle r="7.100" fill="#fa6b10"/><g transform="scale(1.250)"><path d="M-2.6-3.2v2.3q0 1 .9 1.2v3h.9v-3q.9-.2.9-1.200v-2.300h-.6v2.100h-.5v-2.100h-.6v2.100h-.5v-2.100zM1.300-3.200q1.500.300 1.500 2.300v1.400h-.7v2.800h-.800z" fill="#fff"/></g></g>
<text x="890.5" y="714.5" font-size="8.2" fill="#3f464e" text-anchor="middle" transform="rotate(-2.5 890.5 714.5)" textLength="87" lengthAdjust="spacingAndGlyphs" paint-order="stroke" stroke="#fff" stroke-width="2" stroke-linejoin="round">Đường Nguyễn Văn Linh</text>
<text x="994" y="190" font-size="8.2" fill="#3a3f45" text-anchor="middle" font-weight="700" textLength="48" lengthAdjust="spacingAndGlyphs" paint-order="stroke" stroke="#fff" stroke-width="2" stroke-linejoin="round">TÂN ĐỊNH</text>
<text x="1102" y="191" font-size="8.4" fill="#3f464e" text-anchor="middle" transform="rotate(15 1102 191)" textLength="33" lengthAdjust="spacingAndGlyphs" paint-order="stroke" stroke="#fff" stroke-width="2" stroke-linejoin="round">Trường Sa</text>
<text x="1051" y="184" font-size="8.4" fill="#3f464e" text-anchor="middle" transform="rotate(3 1051 184)" textLength="34" lengthAdjust="spacingAndGlyphs" paint-order="stroke" stroke="#fff" stroke-width="2" stroke-linejoin="round">(Trường Sa</text>
<text x="1163" y="192" font-size="8.4" fill="#3f464e" text-anchor="middle" transform="rotate(20 1163 192)" textLength="36" lengthAdjust="spacingAndGlyphs" paint-order="stroke" stroke="#fff" stroke-width="2" stroke-linejoin="round">Ngô Tất Tố</text>
<text x="1200" y="196.5" font-size="7" fill="#6a6f77" font-weight="700" textLength="14" lengthAdjust="spacingAndGlyphs" paint-order="stroke" stroke="#fff" stroke-width="2" stroke-linejoin="round">PHU</text>
<g transform="translate(1054 193)" opacity="1"><rect x="-5.200" y="-5.600" width="10.400" height="11.200" rx="3.600" fill="#fff" style="filter:drop-shadow(0 .6px .5px rgba(0,0,0,.3))"/><rect x="-4.150" y="-4.550" width="8.300" height="9.100" rx="2.800" fill="#14375a"/><path d="M-2.200 2.400v-3.400q0-1.700 2.200-1.700t2.200 1.700v3.400h-1.100l-.35-.8h-1.500l-.35.8z" fill="#fff"/><path d="M-1.400-1.300h2.800" stroke="#14375a" stroke-width=".9" stroke-linecap="round"/></g>
<g transform="translate(1188.5 205)" opacity="1"><rect x="-5.200" y="-5.600" width="10.400" height="11.200" rx="3.600" fill="#fff" style="filter:drop-shadow(0 .6px .5px rgba(0,0,0,.3))"/><rect x="-4.150" y="-4.550" width="8.300" height="9.100" rx="2.800" fill="#14375a"/><path d="M-2.200 2.400v-3.400q0-1.700 2.200-1.700t2.200 1.700v3.400h-1.100l-.35-.8h-1.500l-.35.8z" fill="#fff"/><path d="M-1.400-1.300h2.800" stroke="#14375a" stroke-width=".9" stroke-linecap="round"/></g>
<g transform="translate(1110 255)" opacity="1"><rect x="-5.200" y="-5.600" width="10.400" height="11.200" rx="3.600" fill="#fff" style="filter:drop-shadow(0 .6px .5px rgba(0,0,0,.3))"/><rect x="-4.150" y="-4.550" width="8.300" height="9.100" rx="2.800" fill="#14375a"/><path d="M-2.200 2.400v-3.400q0-1.700 2.200-1.700t2.200 1.700v3.400h-1.100l-.35-.8h-1.500l-.35.8z" fill="#fff"/><path d="M-1.400-1.300h2.800" stroke="#14375a" stroke-width=".9" stroke-linecap="round"/></g>
<g transform="translate(1112 272)" opacity="1"><rect x="-5.200" y="-5.600" width="10.400" height="11.200" rx="3.600" fill="#fff" style="filter:drop-shadow(0 .6px .5px rgba(0,0,0,.3))"/><rect x="-4.150" y="-4.550" width="8.300" height="9.100" rx="2.800" fill="#14375a"/><path d="M-2.200 2.400v-3.400q0-1.700 2.200-1.700t2.200 1.700v3.400h-1.100l-.35-.8h-1.500l-.35.8z" fill="#fff"/><path d="M-1.400-1.300h2.800" stroke="#14375a" stroke-width=".9" stroke-linecap="round"/></g>
<g transform="translate(1009 286.5)" opacity="1"><rect x="-5.200" y="-5.600" width="10.400" height="11.200" rx="3.600" fill="#fff" style="filter:drop-shadow(0 .6px .5px rgba(0,0,0,.3))"/><rect x="-4.150" y="-4.550" width="8.300" height="9.100" rx="2.800" fill="#14375a"/><path d="M-2.200 2.400v-3.400q0-1.700 2.200-1.700t2.200 1.700v3.400h-1.100l-.35-.8h-1.500l-.35.8z" fill="#fff"/><path d="M-1.400-1.300h2.800" stroke="#14375a" stroke-width=".9" stroke-linecap="round"/></g>
<g transform="translate(1031.5 286.5)" opacity="1"><rect x="-5.200" y="-5.600" width="10.400" height="11.200" rx="3.600" fill="#fff" style="filter:drop-shadow(0 .6px .5px rgba(0,0,0,.3))"/><rect x="-4.150" y="-4.550" width="8.300" height="9.100" rx="2.800" fill="#14375a"/><path d="M-2.200 2.400v-3.400q0-1.700 2.200-1.700t2.200 1.700v3.400h-1.100l-.35-.8h-1.500l-.35.8z" fill="#fff"/><path d="M-1.400-1.300h2.800" stroke="#14375a" stroke-width=".9" stroke-linecap="round"/></g>
<g transform="translate(1097 308)" opacity="0.5"><rect x="-5.200" y="-5.600" width="10.400" height="11.200" rx="3.600" fill="#fff" style="filter:drop-shadow(0 .6px .5px rgba(0,0,0,.3))"/><rect x="-4.150" y="-4.550" width="8.300" height="9.100" rx="2.800" fill="#14375a"/><path d="M-2.200 2.400v-3.400q0-1.700 2.200-1.700t2.200 1.700v3.400h-1.100l-.35-.8h-1.500l-.35.8z" fill="#fff"/><path d="M-1.400-1.300h2.800" stroke="#14375a" stroke-width=".9" stroke-linecap="round"/></g>
<g transform="translate(976 205)" opacity="0.5"><rect x="-5.200" y="-5.600" width="10.400" height="11.200" rx="3.600" fill="#fff" style="filter:drop-shadow(0 .6px .5px rgba(0,0,0,.3))"/><rect x="-4.150" y="-4.550" width="8.300" height="9.100" rx="2.800" fill="#14375a"/><path d="M-2.200 2.400v-3.400q0-1.700 2.200-1.700t2.200 1.700v3.400h-1.100l-.35-.8h-1.500l-.35.8z" fill="#fff"/><path d="M-1.400-1.300h2.800" stroke="#14375a" stroke-width=".9" stroke-linecap="round"/></g>
<g transform="translate(997 238)" opacity="0.5"><rect x="-5.200" y="-5.600" width="10.400" height="11.200" rx="3.600" fill="#fff" style="filter:drop-shadow(0 .6px .5px rgba(0,0,0,.3))"/><rect x="-4.150" y="-4.550" width="8.300" height="9.100" rx="2.800" fill="#14375a"/><path d="M-2.200 2.400v-3.400q0-1.700 2.200-1.700t2.200 1.700v3.400h-1.100l-.35-.8h-1.500l-.35.8z" fill="#fff"/><path d="M-1.400-1.300h2.800" stroke="#14375a" stroke-width=".9" stroke-linecap="round"/></g>
<text x="1006" y="211" font-size="10" fill="#51606e" textLength="76" lengthAdjust="spacingAndGlyphs" paint-order="stroke" stroke="#fff" stroke-width="2.2" stroke-linejoin="round">떤딘성당(핑크성당)</text>
<text x="1006" y="220.5" font-size="7.8" fill="#7b8794" textLength="44" lengthAdjust="spacingAndGlyphs" paint-order="stroke" stroke="#fff" stroke-width="2.2" stroke-linejoin="round">Nhà Thờ Giáo</text>
<text x="1006" y="228.5" font-size="7.8" fill="#7b8794" textLength="40" lengthAdjust="spacingAndGlyphs" paint-order="stroke" stroke="#fff" stroke-width="2.2" stroke-linejoin="round">Xứ Tân Định</text>
<g transform="translate(995 214)" opacity="0.6"><path d="M0 10.600L-5.700 5.800A8.100 8.100 0 1 1 5.700 5.800z" fill="#fff" stroke="#fff" stroke-width=".8" stroke-linejoin="round" style="filter:drop-shadow(0 .7px .6px rgba(0,0,0,.35))"/><circle r="7.100" fill="#6f8594"/><g transform="scale(1.250)"><path d="M-.6-3.400h1.200v1.900h1.800v1.200h-1.800v3.700h-1.200v-3.700h-1.800v-1.200h1.800z" fill="#fff"/></g></g>
<text x="1121" y="223.5" font-size="10" fill="#1e8e5a" textLength="64" lengthAdjust="spacingAndGlyphs" paint-order="stroke" stroke="#fff" stroke-width="2.2" stroke-linejoin="round">사이공 동식물원</text>
<text x="1121" y="232.5" font-size="7.8" fill="#1e8e5a" textLength="78" lengthAdjust="spacingAndGlyphs" paint-order="stroke" stroke="#fff" stroke-width="2.2" stroke-linejoin="round">Thảo Cầm Viên Sài Gòn</text>
<g transform="translate(1111 221)" opacity="1"><path d="M0 10.600L-5.700 5.800A8.100 8.100 0 1 1 5.700 5.800z" fill="#fff" stroke="#fff" stroke-width=".8" stroke-linejoin="round" style="filter:drop-shadow(0 .7px .6px rgba(0,0,0,.35))"/><circle r="7.100" fill="#17a868"/><g transform="scale(1.250)"><circle cx="-2" cy="-1" r=".9" fill="#fff"/><circle cx="-.7" cy="-2.400" r=".9" fill="#fff"/><circle cx=".9" cy="-2.400" r=".9" fill="#fff"/><circle cx="2.200" cy="-1" r=".9" fill="#fff"/><path d="M-1.900 2q0-2.300 2-2.300t2 2.300q0 1.200-2 .8-2 .4-2-.8z" fill="#fff"/></g></g>
<text x="1189.5" y="259" font-size="9.6" fill="#2a8fb0" text-anchor="middle" transform="rotate(-26 1189.5 259)" textLength="49" lengthAdjust="spacingAndGlyphs">Sông Sài Gòn</text>
<text x="1141" y="279.5" font-size="9.9" fill="#47525d" textLength="74" lengthAdjust="spacingAndGlyphs" paint-order="stroke" stroke="#fff" stroke-width="2.2" stroke-linejoin="round">Nhà Ga Ngầm Ba S</text>
<text x="1146" y="289.5" font-size="9.9" fill="#47525d" textLength="61" lengthAdjust="spacingAndGlyphs" paint-order="stroke" stroke="#fff" stroke-width="2.2" stroke-linejoin="round">- Tôn Đức Thắng</text>
<g transform="translate(1133.5 280)"><circle r="5" fill="#fff"/><circle r="4" fill="#3c4a57"/><path d="M-2.300 2.200v-4.400l2.300 2.800 2.300-2.800v4.400" fill="none" stroke="#fff" stroke-width=".9"/></g>
<text x="1093" y="288.5" font-size="7.4" fill="#6a6f77" text-anchor="middle" textLength="38" lengthAdjust="spacingAndGlyphs" paint-order="stroke" stroke="#fff" stroke-width="2" stroke-linejoin="round">BẾN NGHÉ</text>
<text x="1093" y="288.5" font-size="7.4" fill="#6a6f77" stroke="#6a6f77" stroke-width=".28" text-anchor="middle" textLength="38" lengthAdjust="spacingAndGlyphs">BẾN NGHÉ</text>
<text x="1191" y="305.5" font-size="7.4" fill="#6a6f77" text-anchor="middle" textLength="42" lengthAdjust="spacingAndGlyphs" paint-order="stroke" stroke="#fff" stroke-width="2" stroke-linejoin="round">THU THIEM</text>
<text x="1191" y="305.5" font-size="7.4" fill="#6a6f77" stroke="#6a6f77" stroke-width=".28" text-anchor="middle" textLength="42" lengthAdjust="spacingAndGlyphs">THU THIEM</text>
<text x="1155" y="314" font-size="9.9" fill="#47525d" textLength="59" lengthAdjust="spacingAndGlyphs" paint-order="stroke" stroke="#fff" stroke-width="2.2" stroke-linejoin="round">14/3A Lương Đ</text>
<text x="1155" y="323.5" font-size="9.9" fill="#47525d" textLength="60" lengthAdjust="spacingAndGlyphs" paint-order="stroke" stroke="#fff" stroke-width="2.2" stroke-linejoin="round">Cửa - Thủ Thiên</text>
<text x="1155" y="331.5" font-size="7.8" fill="#7b8794" textLength="43" lengthAdjust="spacingAndGlyphs" paint-order="stroke" stroke="#fff" stroke-width="2.2" stroke-linejoin="round">여객선 터미널</text>
<g transform="translate(1147 319)"><circle r="5" fill="#fff"/><circle r="4" fill="#3c4a57"/><path d="M-2.300 2.200v-4.400l2.300 2.800 2.300-2.800v4.400" fill="none" stroke="#fff" stroke-width=".9"/></g>
<text x="970" y="307.5" font-size="9.9" fill="#8d4fe6" textLength="52" lengthAdjust="spacingAndGlyphs" paint-order="stroke" stroke="#fff" stroke-width="2.2" stroke-linejoin="round">베트남 통일궁</text>
<text x="977" y="317" font-size="8" fill="#8d4fe6" textLength="45" lengthAdjust="spacingAndGlyphs" paint-order="stroke" stroke="#fff" stroke-width="2.2" stroke-linejoin="round">Dinh Độc Lập</text>
<g transform="translate(1032.5 306)" opacity="1"><path d="M0 10.600L-5.700 5.800A8.100 8.100 0 1 1 5.700 5.800z" fill="#fff" stroke="#fff" stroke-width=".8" stroke-linejoin="round" style="filter:drop-shadow(0 .7px .6px rgba(0,0,0,.35))"/><circle r="7.100" fill="#9b5cf0"/><g transform="scale(1.250)"><path d="M-3.200-1.300 0-3.500 3.200-1.300v.7h-6.400zM-2.600 0h5.200v3h-5.200z" fill="#fff"/><rect x="-1.300" y=".8" width="2.600" height="1.500" fill="#9b5cf0"/></g></g>
<text x="990" y="334.5" font-size="10" fill="#1e8e5a" textLength="42" lengthAdjust="spacingAndGlyphs" paint-order="stroke" stroke="#fff" stroke-width="2.2" stroke-linejoin="round">따오단 공원</text>
<text x="993" y="343.5" font-size="7.8" fill="#1e8e5a" textLength="33" lengthAdjust="spacingAndGlyphs" paint-order="stroke" stroke="#fff" stroke-width="2.2" stroke-linejoin="round">Công viên</text>
<text x="993" y="351" font-size="7.8" fill="#1e8e5a" textLength="28" lengthAdjust="spacingAndGlyphs" paint-order="stroke" stroke="#fff" stroke-width="2.2" stroke-linejoin="round">Tao Đàn</text>
<text x="1065" y="343.5" font-size="9.9" fill="#d83b4b" textLength="34" lengthAdjust="spacingAndGlyphs" paint-order="stroke" stroke="#fff" stroke-width="2.2" stroke-linejoin="round">벤탄시장</text>
<text x="1065" y="352.5" font-size="8" fill="#d83b4b" textLength="50" lengthAdjust="spacingAndGlyphs" paint-order="stroke" stroke="#fff" stroke-width="2.2" stroke-linejoin="round">Chợ Bến Thành</text>
<g transform="translate(1054 345)" opacity="0.55"><path d="M0 10.600L-5.700 5.800A8.100 8.100 0 1 1 5.700 5.800z" fill="#fff" stroke="#fff" stroke-width=".8" stroke-linejoin="round" style="filter:drop-shadow(0 .7px .6px rgba(0,0,0,.35))"/><circle r="7.100" fill="#e8453c"/><g transform="scale(1.250)"><path d="M-3.600-2.900h1.100l.4.900h4.900l-1.100 2.700h-3.400l-.4.800h4.400v.7h-5.200l.8-1.700-1.500-2.700h-.8z" fill="#fff"/><circle cx="-1.300" cy="3" r=".7" fill="#fff"/><circle cx="1.700" cy="3" r=".7" fill="#fff"/></g></g>
<text x="1095" y="368" font-size="8.4" fill="#6a6f77" text-anchor="middle" textLength="31" lengthAdjust="spacingAndGlyphs" paint-order="stroke" stroke="#fff" stroke-width="2" stroke-linejoin="round">Hàm Nghi</text>
<text x="1037" y="367" font-size="8.4" fill="#3f464e" text-anchor="middle" transform="rotate(-26 1037 367)" textLength="18" lengthAdjust="spacingAndGlyphs" paint-order="stroke" stroke="#fff" stroke-width="2" stroke-linejoin="round">Lê Lai</text>
<text x="1032" y="386" font-size="10" fill="#8d4fe6" textLength="92" lengthAdjust="spacingAndGlyphs" paint-order="stroke" stroke="#fff" stroke-width="2.2" stroke-linejoin="round">부이비엔 워킹 스트리트</text>
<text x="1032" y="394.5" font-size="7.8" fill="#8d4fe6" textLength="62" lengthAdjust="spacingAndGlyphs" paint-order="stroke" stroke="#fff" stroke-width="2.2" stroke-linejoin="round">Phố đi bộ Bùi Viện</text>
<g transform="translate(1021 384)" opacity="1"><path d="M0 10.600L-5.700 5.800A8.100 8.100 0 1 1 5.700 5.800z" fill="#fff" stroke="#fff" stroke-width=".8" stroke-linejoin="round" style="filter:drop-shadow(0 .7px .6px rgba(0,0,0,.35))"/><circle r="7.100" fill="#9b5cf0"/><g transform="scale(1.250)"><rect x="-3.200" y="-2.200" width="6.400" height="4.800" rx=".9" fill="#fff"/><circle cy=".2" r="1.300" fill="#9b5cf0"/><rect x="-1" y="-3.100" width="2" height="1.200" fill="#fff"/></g></g>
<g transform="translate(1128 331)" opacity="1"><rect x="-5.200" y="-5.600" width="10.400" height="11.200" rx="3.600" fill="#fff" style="filter:drop-shadow(0 .6px .5px rgba(0,0,0,.3))"/><rect x="-4.150" y="-4.550" width="8.300" height="9.100" rx="2.800" fill="#14375a"/><path d="M-2.200 2.400v-3.400q0-1.700 2.200-1.700t2.200 1.700v3.400h-1.100l-.35-.8h-1.500l-.35.8z" fill="#fff"/><path d="M-1.400-1.300h2.800" stroke="#14375a" stroke-width=".9" stroke-linecap="round"/></g>
<g transform="translate(1126 359.5)" opacity="1"><rect x="-5.200" y="-5.600" width="10.400" height="11.200" rx="3.600" fill="#fff" style="filter:drop-shadow(0 .6px .5px rgba(0,0,0,.3))"/><rect x="-4.150" y="-4.550" width="8.300" height="9.100" rx="2.800" fill="#14375a"/><path d="M-2.200 2.400v-3.400q0-1.700 2.200-1.700t2.200 1.700v3.400h-1.100l-.35-.8h-1.500l-.35.8z" fill="#fff"/><path d="M-1.400-1.300h2.800" stroke="#14375a" stroke-width=".9" stroke-linecap="round"/></g>
<g transform="translate(1028 412.5)" opacity="1"><rect x="-5.200" y="-5.600" width="10.400" height="11.200" rx="3.600" fill="#fff" style="filter:drop-shadow(0 .6px .5px rgba(0,0,0,.3))"/><rect x="-4.150" y="-4.550" width="8.300" height="9.100" rx="2.800" fill="#14375a"/><path d="M-2.200 2.400v-3.400q0-1.700 2.200-1.700t2.200 1.700v3.400h-1.100l-.35-.8h-1.500l-.35.8z" fill="#fff"/><path d="M-1.400-1.300h2.800" stroke="#14375a" stroke-width=".9" stroke-linecap="round"/></g>
<g transform="translate(1073 319)" opacity="0.5"><rect x="-5.200" y="-5.600" width="10.400" height="11.200" rx="3.600" fill="#fff" style="filter:drop-shadow(0 .6px .5px rgba(0,0,0,.3))"/><rect x="-4.150" y="-4.550" width="8.300" height="9.100" rx="2.800" fill="#14375a"/><path d="M-2.200 2.400v-3.400q0-1.700 2.200-1.700t2.200 1.700v3.400h-1.100l-.35-.8h-1.500l-.35.8z" fill="#fff"/><path d="M-1.400-1.300h2.800" stroke="#14375a" stroke-width=".9" stroke-linecap="round"/></g>
<g transform="translate(1094 323)" opacity="0.5"><rect x="-5.200" y="-5.600" width="10.400" height="11.200" rx="3.600" fill="#fff" style="filter:drop-shadow(0 .6px .5px rgba(0,0,0,.3))"/><rect x="-4.150" y="-4.550" width="8.300" height="9.100" rx="2.800" fill="#14375a"/><path d="M-2.200 2.400v-3.400q0-1.700 2.200-1.700t2.200 1.700v3.400h-1.100l-.35-.8h-1.500l-.35.8z" fill="#fff"/><path d="M-1.400-1.300h2.800" stroke="#14375a" stroke-width=".9" stroke-linecap="round"/></g>
<g transform="translate(1057 366)" opacity="0.5"><rect x="-5.200" y="-5.600" width="10.400" height="11.200" rx="3.600" fill="#fff" style="filter:drop-shadow(0 .6px .5px rgba(0,0,0,.3))"/><rect x="-4.150" y="-4.550" width="8.300" height="9.100" rx="2.800" fill="#14375a"/><path d="M-2.200 2.400v-3.400q0-1.700 2.200-1.700t2.200 1.700v3.400h-1.100l-.35-.8h-1.500l-.35.8z" fill="#fff"/><path d="M-1.400-1.300h2.800" stroke="#14375a" stroke-width=".9" stroke-linecap="round"/></g>
<g transform="translate(1055 402)" opacity="0.5"><rect x="-5.200" y="-5.600" width="10.400" height="11.200" rx="3.600" fill="#fff" style="filter:drop-shadow(0 .6px .5px rgba(0,0,0,.3))"/><rect x="-4.150" y="-4.550" width="8.300" height="9.100" rx="2.800" fill="#14375a"/><path d="M-2.200 2.400v-3.400q0-1.700 2.200-1.700t2.200 1.700v3.400h-1.100l-.35-.8h-1.500l-.35.8z" fill="#fff"/><path d="M-1.400-1.300h2.800" stroke="#14375a" stroke-width=".9" stroke-linecap="round"/></g>
<text x="994" y="433" font-size="8.4" fill="#3f464e" text-anchor="middle" transform="rotate(-46 994 433)" textLength="50" lengthAdjust="spacingAndGlyphs" paint-order="stroke" stroke="#fff" stroke-width="2" stroke-linejoin="round">Trần Hưng Đạo</text>
<text x="1151" y="441" font-size="8.4" fill="#3f464e" text-anchor="middle" transform="rotate(41 1151 441)" textLength="66" lengthAdjust="spacingAndGlyphs" paint-order="stroke" stroke="#fff" stroke-width="2" stroke-linejoin="round">Đ. Nguyễn Tất Thành</text>
<text x="1096" y="431" font-size="8.4" fill="#3f464e" text-anchor="middle" transform="rotate(-31 1096 431)" textLength="36" lengthAdjust="spacingAndGlyphs" paint-order="stroke" stroke="#fff" stroke-width="2" stroke-linejoin="round">Hoàng Diệu</text>
<g transform="translate(1017 480)" opacity="1"><rect x="-5.200" y="-5.600" width="10.400" height="11.200" rx="3.600" fill="#fff" style="filter:drop-shadow(0 .6px .5px rgba(0,0,0,.3))"/><rect x="-4.150" y="-4.550" width="8.300" height="9.100" rx="2.800" fill="#14375a"/><path d="M-2.200 2.400v-3.400q0-1.700 2.200-1.700t2.200 1.700v3.400h-1.100l-.35-.8h-1.500l-.35.8z" fill="#fff"/><path d="M-1.400-1.300h2.800" stroke="#14375a" stroke-width=".9" stroke-linecap="round"/></g>
<g transform="translate(1076 484)" opacity="1"><rect x="-5.200" y="-5.600" width="10.400" height="11.200" rx="3.600" fill="#fff" style="filter:drop-shadow(0 .6px .5px rgba(0,0,0,.3))"/><rect x="-4.150" y="-4.550" width="8.300" height="9.100" rx="2.800" fill="#14375a"/><path d="M-2.200 2.400v-3.400q0-1.700 2.200-1.700t2.200 1.700v3.400h-1.100l-.35-.8h-1.500l-.35.8z" fill="#fff"/><path d="M-1.400-1.300h2.800" stroke="#14375a" stroke-width=".9" stroke-linecap="round"/></g>
<g transform="translate(1094 486)" opacity="1"><rect x="-5.200" y="-5.600" width="10.400" height="11.200" rx="3.600" fill="#fff" style="filter:drop-shadow(0 .6px .5px rgba(0,0,0,.3))"/><rect x="-4.150" y="-4.550" width="8.300" height="9.100" rx="2.800" fill="#14375a"/><path d="M-2.200 2.400v-3.400q0-1.700 2.200-1.700t2.200 1.700v3.400h-1.100l-.35-.8h-1.500l-.35.8z" fill="#fff"/><path d="M-1.400-1.300h2.800" stroke="#14375a" stroke-width=".9" stroke-linecap="round"/></g>
<g transform="translate(1146 509)" opacity="1"><rect x="-5.200" y="-5.600" width="10.400" height="11.200" rx="3.600" fill="#fff" style="filter:drop-shadow(0 .6px .5px rgba(0,0,0,.3))"/><rect x="-4.150" y="-4.550" width="8.300" height="9.100" rx="2.800" fill="#14375a"/><path d="M-2.200 2.400v-3.400q0-1.700 2.200-1.700t2.200 1.700v3.400h-1.100l-.35-.8h-1.500l-.35.8z" fill="#fff"/><path d="M-1.400-1.300h2.800" stroke="#14375a" stroke-width=".9" stroke-linecap="round"/></g>
<g transform="translate(1179 508.5)" opacity="1"><rect x="-5.200" y="-5.600" width="10.400" height="11.200" rx="3.600" fill="#fff" style="filter:drop-shadow(0 .6px .5px rgba(0,0,0,.3))"/><rect x="-4.150" y="-4.550" width="8.300" height="9.100" rx="2.800" fill="#14375a"/><path d="M-2.200 2.400v-3.400q0-1.700 2.200-1.700t2.200 1.700v3.400h-1.100l-.35-.8h-1.500l-.35.8z" fill="#fff"/><path d="M-1.400-1.300h2.800" stroke="#14375a" stroke-width=".9" stroke-linecap="round"/></g>
<g transform="translate(1052 521)" opacity="1"><rect x="-5.200" y="-5.600" width="10.400" height="11.200" rx="3.600" fill="#fff" style="filter:drop-shadow(0 .6px .5px rgba(0,0,0,.3))"/><rect x="-4.150" y="-4.550" width="8.300" height="9.100" rx="2.800" fill="#14375a"/><path d="M-2.200 2.400v-3.400q0-1.700 2.200-1.700t2.200 1.700v3.400h-1.100l-.35-.8h-1.500l-.35.8z" fill="#fff"/><path d="M-1.400-1.300h2.800" stroke="#14375a" stroke-width=".9" stroke-linecap="round"/></g>
<g transform="translate(984 564)" opacity="1"><rect x="-5.200" y="-5.600" width="10.400" height="11.200" rx="3.600" fill="#fff" style="filter:drop-shadow(0 .6px .5px rgba(0,0,0,.3))"/><rect x="-4.150" y="-4.550" width="8.300" height="9.100" rx="2.800" fill="#14375a"/><path d="M-2.200 2.400v-3.400q0-1.700 2.200-1.700t2.200 1.700v3.400h-1.100l-.35-.8h-1.500l-.35.8z" fill="#fff"/><path d="M-1.400-1.300h2.800" stroke="#14375a" stroke-width=".9" stroke-linecap="round"/></g>
<g transform="translate(1192 554)" opacity="1"><rect x="-5.200" y="-5.600" width="10.400" height="11.200" rx="3.600" fill="#fff" style="filter:drop-shadow(0 .6px .5px rgba(0,0,0,.3))"/><rect x="-4.150" y="-4.550" width="8.300" height="9.100" rx="2.800" fill="#14375a"/><path d="M-2.200 2.400v-3.400q0-1.700 2.200-1.700t2.200 1.700v3.400h-1.100l-.35-.8h-1.500l-.35.8z" fill="#fff"/><path d="M-1.400-1.300h2.800" stroke="#14375a" stroke-width=".9" stroke-linecap="round"/></g>
<g transform="translate(1145 572)" opacity="1"><rect x="-5.200" y="-5.600" width="10.400" height="11.200" rx="3.600" fill="#fff" style="filter:drop-shadow(0 .6px .5px rgba(0,0,0,.3))"/><rect x="-4.150" y="-4.550" width="8.300" height="9.100" rx="2.800" fill="#14375a"/><path d="M-2.200 2.400v-3.400q0-1.700 2.200-1.700t2.200 1.700v3.400h-1.100l-.35-.8h-1.500l-.35.8z" fill="#fff"/><path d="M-1.400-1.300h2.800" stroke="#14375a" stroke-width=".9" stroke-linecap="round"/></g>
<text x="1168.5" y="496.5" font-size="7.4" fill="#6a6f77" text-anchor="middle" textLength="43" lengthAdjust="spacingAndGlyphs" paint-order="stroke" stroke="#fff" stroke-width="2" stroke-linejoin="round">PHƯỜNG 16</text>
<text x="1168.5" y="496.5" font-size="7.4" fill="#6a6f77" stroke="#6a6f77" stroke-width=".28" text-anchor="middle" textLength="43" lengthAdjust="spacingAndGlyphs">PHƯỜNG 16</text>
<text x="1130" y="523.5" font-size="8.4" fill="#3f464e" text-anchor="middle" textLength="60" lengthAdjust="spacingAndGlyphs" paint-order="stroke" stroke="#fff" stroke-width="2" stroke-linejoin="round">Đ. Trần Xuân Soạn</text>
<text x="1192.5" y="523" font-size="8.4" fill="#3f464e" text-anchor="middle" transform="rotate(-1 1192.5 523)" textLength="43" lengthAdjust="spacingAndGlyphs" paint-order="stroke" stroke="#fff" stroke-width="2" stroke-linejoin="round">Đ. Trần Xuân</text>
<text x="1152" y="545.5" font-size="7.4" fill="#6a6f77" text-anchor="middle" textLength="40" lengthAdjust="spacingAndGlyphs" paint-order="stroke" stroke="#fff" stroke-width="2" stroke-linejoin="round">TÂN KIỂNG</text>
<text x="1152" y="545.5" font-size="7.4" fill="#6a6f77" stroke="#6a6f77" stroke-width=".28" text-anchor="middle" textLength="40" lengthAdjust="spacingAndGlyphs">TÂN KIỂNG</text>
<text x="1054" y="583.5" font-size="7.4" fill="#6a6f77" text-anchor="middle" textLength="36" lengthAdjust="spacingAndGlyphs" paint-order="stroke" stroke="#fff" stroke-width="2" stroke-linejoin="round">TÂN HƯNG</text>
<text x="1054" y="583.5" font-size="7.4" fill="#6a6f77" stroke="#6a6f77" stroke-width=".28" text-anchor="middle" textLength="36" lengthAdjust="spacingAndGlyphs">TÂN HƯNG</text>
<text x="1041" y="599" font-size="9.9" fill="#1a73e8" textLength="34" lengthAdjust="spacingAndGlyphs" paint-order="stroke" stroke="#fff" stroke-width="2.2" stroke-linejoin="round">롯데마트</text>
<text x="1008" y="608" font-size="8" fill="#1a73e8" textLength="67" lengthAdjust="spacingAndGlyphs" paint-order="stroke" stroke="#fff" stroke-width="2.2" stroke-linejoin="round">LOTTE Mart Quận 7</text>
<g transform="translate(1085 600)" opacity="0.55"><path d="M0 10.600L-5.700 5.800A8.100 8.100 0 1 1 5.700 5.800z" fill="#fff" stroke="#fff" stroke-width=".8" stroke-linejoin="round" style="filter:drop-shadow(0 .7px .6px rgba(0,0,0,.35))"/><circle r="7.100" fill="#e8453c"/><g transform="scale(1.250)"><path d="M-3.600-2.900h1.100l.4.900h4.900l-1.100 2.700h-3.400l-.4.800h4.400v.7h-5.200l.8-1.700-1.500-2.700h-.8z" fill="#fff"/><circle cx="-1.300" cy="3" r=".7" fill="#fff"/><circle cx="1.700" cy="3" r=".7" fill="#fff"/></g></g>
<text x="1151" y="611.5" font-size="7.4" fill="#6a6f77" text-anchor="middle" textLength="32" lengthAdjust="spacingAndGlyphs" paint-order="stroke" stroke="#fff" stroke-width="2" stroke-linejoin="round">TÂN QUY</text>
<text x="1151" y="611.5" font-size="7.4" fill="#6a6f77" stroke="#6a6f77" stroke-width=".28" text-anchor="middle" textLength="32" lengthAdjust="spacingAndGlyphs">TÂN QUY</text>
<text x="1128" y="624.5" font-size="8.4" fill="#3f464e" text-anchor="middle" transform="rotate(10 1128 624.5)" textLength="56" lengthAdjust="spacingAndGlyphs" paint-order="stroke" stroke="#fff" stroke-width="2" stroke-linejoin="round">Nguyễn Thị Thập</text>
<text x="1187" y="595.5" font-size="9.9" fill="#1e8e5a" textLength="27" lengthAdjust="spacingAndGlyphs" paint-order="stroke" stroke="#fff" stroke-width="2.2" stroke-linejoin="round">Distric</text>
<g transform="translate(986 632)" opacity="1"><rect x="-5.200" y="-5.600" width="10.400" height="11.200" rx="3.600" fill="#fff" style="filter:drop-shadow(0 .6px .5px rgba(0,0,0,.3))"/><rect x="-4.150" y="-4.550" width="8.300" height="9.100" rx="2.800" fill="#14375a"/><path d="M-2.200 2.400v-3.400q0-1.700 2.200-1.700t2.200 1.700v3.400h-1.100l-.35-.8h-1.500l-.35.8z" fill="#fff"/><path d="M-1.400-1.300h2.800" stroke="#14375a" stroke-width=".9" stroke-linecap="round"/></g>
<g transform="translate(1140 723.5)" opacity="1"><rect x="-5.200" y="-5.600" width="10.400" height="11.200" rx="3.600" fill="#fff" style="filter:drop-shadow(0 .6px .5px rgba(0,0,0,.3))"/><rect x="-4.150" y="-4.550" width="8.300" height="9.100" rx="2.800" fill="#14375a"/><path d="M-2.200 2.400v-3.400q0-1.700 2.200-1.700t2.200 1.700v3.400h-1.100l-.35-.8h-1.500l-.35.8z" fill="#fff"/><path d="M-1.400-1.300h2.800" stroke="#14375a" stroke-width=".9" stroke-linecap="round"/></g>
<text x="1086" y="655.5" font-size="7.6" fill="#3a3f45" text-anchor="middle" font-weight="700" textLength="56" lengthAdjust="spacingAndGlyphs" paint-order="stroke" stroke="#fff" stroke-width="2" stroke-linejoin="round">KHU DÂN CƯ</text>
<text x="1086" y="664" font-size="7.6" fill="#3a3f45" text-anchor="middle" font-weight="700" textLength="39" lengthAdjust="spacingAndGlyphs" paint-order="stroke" stroke="#fff" stroke-width="2" stroke-linejoin="round">KIM SƠN</text>
<text x="990" y="660" font-size="8.4" fill="#3f464e" text-anchor="middle" transform="rotate(-88 990 660)" textLength="28" lengthAdjust="spacingAndGlyphs" paint-order="stroke" stroke="#fff" stroke-width="2" stroke-linejoin="round">Đ. số 9A</text>
<text x="1092" y="685.5" font-size="7.4" fill="#6a6f77" text-anchor="middle" textLength="43" lengthAdjust="spacingAndGlyphs" paint-order="stroke" stroke="#fff" stroke-width="2" stroke-linejoin="round">TÂN PHONG</text>
<text x="1092" y="685.5" font-size="7.4" fill="#6a6f77" stroke="#6a6f77" stroke-width=".28" text-anchor="middle" textLength="43" lengthAdjust="spacingAndGlyphs">TÂN PHONG</text>
<text x="1147" y="667.5" font-size="9.9" fill="#d83b4b" textLength="30" lengthAdjust="spacingAndGlyphs" paint-order="stroke" stroke="#fff" stroke-width="2.2" stroke-linejoin="round">에프브이</text>
<text x="1160" y="676.5" font-size="8" fill="#d83b4b" textLength="17" lengthAdjust="spacingAndGlyphs" paint-order="stroke" stroke="#fff" stroke-width="2.2" stroke-linejoin="round">Bệnh</text>
<g transform="translate(1212 666)" opacity="1"><path d="M0 10.600L-5.700 5.800A8.100 8.100 0 1 1 5.700 5.800z" fill="#fff" stroke="#fff" stroke-width=".8" stroke-linejoin="round" style="filter:drop-shadow(0 .7px .6px rgba(0,0,0,.35))"/><circle r="7.100" fill="#e8453c"/><g transform="scale(1.250)"><path d="M-2.200-2.800h1.300v2.200h1.800v-2.200h1.300v5.700h-1.300v-2.300h-1.800v2.300h-1.300z" fill="#fff"/></g></g>
<text x="962" y="690" font-size="10" fill="#51606e" textLength="49" lengthAdjust="spacingAndGlyphs" paint-order="stroke" stroke="#fff" stroke-width="2.2" stroke-linejoin="round">RMIT대학교</text>
<text x="966" y="699" font-size="7.8" fill="#7b8794" textLength="45" lengthAdjust="spacingAndGlyphs" paint-order="stroke" stroke="#fff" stroke-width="2.2" stroke-linejoin="round">Đại Học RMIT</text>
<text x="968" y="706.5" font-size="7.8" fill="#7b8794" textLength="43" lengthAdjust="spacingAndGlyphs" paint-order="stroke" stroke="#fff" stroke-width="2.2" stroke-linejoin="round">Nam Sài Gòn</text>
<g transform="translate(1021 692)" opacity="1"><path d="M0 10.600L-5.700 5.800A8.100 8.100 0 1 1 5.700 5.800z" fill="#fff" stroke="#fff" stroke-width=".8" stroke-linejoin="round" style="filter:drop-shadow(0 .7px .6px rgba(0,0,0,.35))"/><circle r="7.100" fill="#6f8594"/><g transform="scale(1.250)"><path d="M0-3 4-1 0 1-4-1zM-2.300.4v1.500q2.300 1.500 4.600 0v-1.500l-2.300 1.200z" fill="#fff"/></g></g>
<text x="1152" y="709" font-size="8.2" fill="#3f464e" text-anchor="middle" transform="rotate(-3 1152 709)" textLength="86" lengthAdjust="spacingAndGlyphs" paint-order="stroke" stroke="#fff" stroke-width="2" stroke-linejoin="round">Đường Nguyễn Văn Linh</text>
<text x="1186" y="631" font-size="9.9" fill="#1a73e8" paint-order="stroke" stroke="#fff" stroke-width="2.2" stroke-linejoin="round">G</text>
<text x="1203" y="631" font-size="9.9" fill="#1a73e8" paint-order="stroke" stroke="#fff" stroke-width="2.2" stroke-linejoin="round">uy</text>
<g transform="translate(1118 678)" opacity="0.55"><path d="M0 10.600L-5.700 5.800A8.100 8.100 0 1 1 5.700 5.800z" fill="#fff" stroke="#fff" stroke-width=".8" stroke-linejoin="round" style="filter:drop-shadow(0 .7px .6px rgba(0,0,0,.35))"/><circle r="7.100" fill="#e8453c"/><g transform="scale(1.250)"><path d="M-2.200-2.800h1.300v2.200h1.800v-2.200h1.300v5.700h-1.300v-2.300h-1.800v2.300h-1.300z" fill="#fff"/></g></g>
<rect x="1038" y="736.500" width="176" height="4" fill="#f5f5f5" opacity=".7"/>
<text x="1040" y="743" font-size="7" fill="#333">단축키</text>
<text x="1075" y="743" font-size="7" fill="#333" textLength="70" lengthAdjust="spacingAndGlyphs">지도 데이터 ©2025 Google</text>
<text x="1153" y="743" font-size="7" fill="#333">약관</text>
<text x="1173" y="743" font-size="7" fill="#333" textLength="40" lengthAdjust="spacingAndGlyphs">지도 오류 신고</text>
<g transform="translate(747 460)" opacity="0.55"><path d="M0 10.600L-5.700 5.800A8.100 8.100 0 1 1 5.700 5.800z" fill="#fff" stroke="#fff" stroke-width=".8" stroke-linejoin="round" style="filter:drop-shadow(0 .7px .6px rgba(0,0,0,.35))"/><circle r="7.100" fill="#e8453c"/><g transform="scale(1.250)"><path d="M-2.200-2.800h1.300v2.200h1.800v-2.200h1.300v5.700h-1.300v-2.300h-1.800v2.300h-1.300z" fill="#fff"/></g></g>
<g transform="translate(787 481)" opacity="0.55"><path d="M0 10.600L-5.700 5.800A8.100 8.100 0 1 1 5.700 5.800z" fill="#fff" stroke="#fff" stroke-width=".8" stroke-linejoin="round" style="filter:drop-shadow(0 .7px .6px rgba(0,0,0,.35))"/><circle r="7.100" fill="#e8453c"/><g transform="scale(1.250)"><path d="M-2.200-2.800h1.300v2.200h1.800v-2.200h1.300v5.700h-1.300v-2.300h-1.800v2.300h-1.300z" fill="#fff"/></g></g>
<circle cx="480.8" cy="244.8" r="14.799999999999999" fill="#ec1020" fill-opacity=".86" stroke="#ff0000" stroke-opacity=".85" stroke-width=".9"/>
<circle cx="593.2" cy="238.9" r="24.400000000000002" fill="#ec1020" fill-opacity=".86" stroke="#ff0000" stroke-opacity=".85" stroke-width=".9"/>
<circle cx="769.5" cy="243.2" r="24.200000000000003" fill="#ec1020" fill-opacity=".86" stroke="#ff0000" stroke-opacity=".85" stroke-width=".9"/>
<circle cx="959.6" cy="223.6" r="43.800000000000004" fill="#ec1020" fill-opacity=".86" stroke="#ff0000" stroke-opacity=".85" stroke-width=".9"/>
<circle cx="1067.7" cy="237.7" r="43.800000000000004" fill="#ec1020" fill-opacity=".86" stroke="#ff0000" stroke-opacity=".85" stroke-width=".9"/>
<circle cx="438.2" cy="305.3" r="14.799999999999999" fill="#ec1020" fill-opacity=".86" stroke="#ff0000" stroke-opacity=".85" stroke-width=".9"/>
<circle cx="662" cy="329" r="14.799999999999999" fill="#ec1020" fill-opacity=".86" stroke="#ff0000" stroke-opacity=".85" stroke-width=".9"/>
<circle cx="790.9" cy="352.4" r="24.200000000000003" fill="#ec1020" fill-opacity=".86" stroke="#ff0000" stroke-opacity=".85" stroke-width=".9"/>
<circle cx="956.8" cy="347.8" r="43.800000000000004" fill="#ec1020" fill-opacity=".86" stroke="#ff0000" stroke-opacity=".85" stroke-width=".9"/>
<circle cx="1080.7" cy="348.5" r="43.800000000000004" fill="#ec1020" fill-opacity=".86" stroke="#ff0000" stroke-opacity=".85" stroke-width=".9"/>
<circle cx="773.4" cy="468.8" r="43.800000000000004" fill="#ec1020" fill-opacity=".86" stroke="#ff0000" stroke-opacity=".85" stroke-width=".9"/>
<circle cx="947" cy="456" r="34.300000000000004" fill="#ec1020" fill-opacity=".86" stroke="#ff0000" stroke-opacity=".85" stroke-width=".9"/>
<circle cx="1077.4" cy="432" r="43.800000000000004" fill="#ec1020" fill-opacity=".86" stroke="#ff0000" stroke-opacity=".85" stroke-width=".9"/>
<circle cx="633" cy="480.4" r="14.799999999999999" fill="#ec1020" fill-opacity=".86" stroke="#ff0000" stroke-opacity=".85" stroke-width=".9"/>
<circle cx="769.5" cy="536.3" r="24.200000000000003" fill="#ec1020" fill-opacity=".86" stroke="#ff0000" stroke-opacity=".85" stroke-width=".9"/>
<circle cx="960" cy="581.3" r="14.799999999999999" fill="#ec1020" fill-opacity=".86" stroke="#ff0000" stroke-opacity=".85" stroke-width=".9"/>
<circle cx="1088" cy="594.7" r="24.200000000000003" fill="#ec1020" fill-opacity=".86" stroke="#ff0000" stroke-opacity=".85" stroke-width=".9"/>
<circle cx="931.7" cy="664" r="24.200000000000003" fill="#ec1020" fill-opacity=".86" stroke="#ff0000" stroke-opacity=".85" stroke-width=".9"/>
<circle cx="620" cy="673.5" r="14.799999999999999" fill="#ec1020" fill-opacity=".86" stroke="#ff0000" stroke-opacity=".85" stroke-width=".9"/>
<circle cx="1129" cy="688" r="24.200000000000003" fill="#ec1020" fill-opacity=".86" stroke="#ff0000" stroke-opacity=".85" stroke-width=".9"/>
<circle cx="447.8" cy="722.6" r="24.200000000000003" fill="#ec1020" fill-opacity=".86" stroke="#ff0000" stroke-opacity=".85" stroke-width=".9"/>
<text x="480.8" y="249.3" font-size="12.600" font-weight="700" fill="#fff" text-anchor="middle">4</text>
<text x="593.2" y="243.4" font-size="12.600" font-weight="700" fill="#fff" text-anchor="middle">14</text>
<text x="769.5" y="247.7" font-size="12.600" font-weight="700" fill="#fff" text-anchor="middle">39</text>
<text x="959.6" y="228.1" font-size="12.600" font-weight="700" fill="#fff" text-anchor="middle">213</text>
<text x="1067.7" y="242.2" font-size="12.600" font-weight="700" fill="#fff" text-anchor="middle">387</text>
<text x="438.2" y="309.8" font-size="12.600" font-weight="700" fill="#fff" text-anchor="middle">1</text>
<text x="662" y="333.5" font-size="12.600" font-weight="700" fill="#fff" text-anchor="middle">1</text>
<text x="790.9" y="356.9" font-size="12.600" font-weight="700" fill="#fff" text-anchor="middle">34</text>
<text x="956.8" y="352.3" font-size="12.600" font-weight="700" fill="#fff" text-anchor="middle">265</text>
<text x="1080.7" y="353.0" font-size="12.600" font-weight="700" fill="#fff" text-anchor="middle">276</text>
<text x="773.4" y="473.3" font-size="12.600" font-weight="700" fill="#fff" text-anchor="middle">103</text>
<text x="947" y="460.5" font-size="12.600" font-weight="700" fill="#fff" text-anchor="middle">97</text>
<text x="1077.4" y="436.5" font-size="12.600" font-weight="700" fill="#fff" text-anchor="middle">105</text>
<text x="633" y="484.9" font-size="12.600" font-weight="700" fill="#fff" text-anchor="middle">9</text>
<text x="769.5" y="540.8" font-size="12.600" font-weight="700" fill="#fff" text-anchor="middle">15</text>
<text x="960" y="585.8" font-size="12.600" font-weight="700" fill="#fff" text-anchor="middle">7</text>
<text x="1088" y="599.2" font-size="12.600" font-weight="700" fill="#fff" text-anchor="middle">32</text>
<text x="931.7" y="668.5" font-size="12.600" font-weight="700" fill="#fff" text-anchor="middle">16</text>
<text x="620" y="678.0" font-size="12.600" font-weight="700" fill="#fff" text-anchor="middle">1</text>
<text x="1129" y="692.5" font-size="12.600" font-weight="700" fill="#fff" text-anchor="middle">26</text>
<text x="447.8" y="727.1" font-size="12.600" font-weight="700" fill="#fff" text-anchor="middle">13</text>
</svg>
    <div class="fbox" style="left:11px;width:88.500px;background:#fff;color:#111;font-weight:700;font-size:10px;letter-spacing:-.3px">
  <span class="abs" style="left:8.500px">성/시</span>
  <svg class="abs" style="left:42px;top:8.500px" width="5" height="7" viewBox="0 0 5 7"><path d="M1 .8 3.800 3.500 1 6.200" fill="none" stroke="#d5d8de" stroke-width="1"/></svg>
  <span class="abs" style="left:52px">군/구</span>
</div>
<div class="fbox fgray" style="left:107px;width:55px"><span class="abs" style="left:8px">임대료</span><i class="caret" style="left:40px"></i></div>
<div class="fbox fgray" style="left:168.500px;width:112px"><span class="abs" style="left:8px;letter-spacing:-.25px">(임대료+관리비) / m²</span><i class="caret" style="left:97.500px"></i></div>
<div class="fbox fgray" style="left:287px;width:66px"><span class="abs" style="left:8px">임대 면적</span><i class="caret" style="left:51px"></i></div>
<div class="fbox" style="left:359.500px;width:23.500px;background:#fff">
  <svg class="abs" style="left:5.800px;top:5.400px" width="12" height="12" viewBox="0 0 12 12"><path d="M9.770 5.390A3.900 3.900 0 1 1 7.650 2.870" fill="none" stroke="#333" stroke-width="1.150"/><path d="M9.700 3.900 8.500 1 6.700 4.400z" fill="#333"/></svg>
</div>
<div class="ctl" style="top:434.500px;height:29px">
  <svg class="abs" style="left:6.500px;top:6.500px" width="16" height="16" viewBox="0 0 16 16"><circle cx="8" cy="8" r="4.600" fill="none" stroke="#222" stroke-width="1.300"/><circle cx="8" cy="8" r="1.700" fill="none" stroke="#222" stroke-width="1.200"/><path d="M8 .8v2.400M8 12.800v2.400M.8 8h2.400M12.800 8h2.400" stroke="#222" stroke-width="1.300"/></svg>
</div>
<div class="ctl" style="top:470.500px;height:57px">
  <svg class="abs" style="left:0;top:0" width="29" height="57" viewBox="0 0 29 57"><path d="M9.500 13.500h10M14.500 8.500v10M9.500 42.500h10" stroke="#222" stroke-width="1.300"/><path d="M3 28.200h23" stroke="#e6e6e6" stroke-width="1"/></svg>
</div>

  </div>
</div>
</body>
</html>
